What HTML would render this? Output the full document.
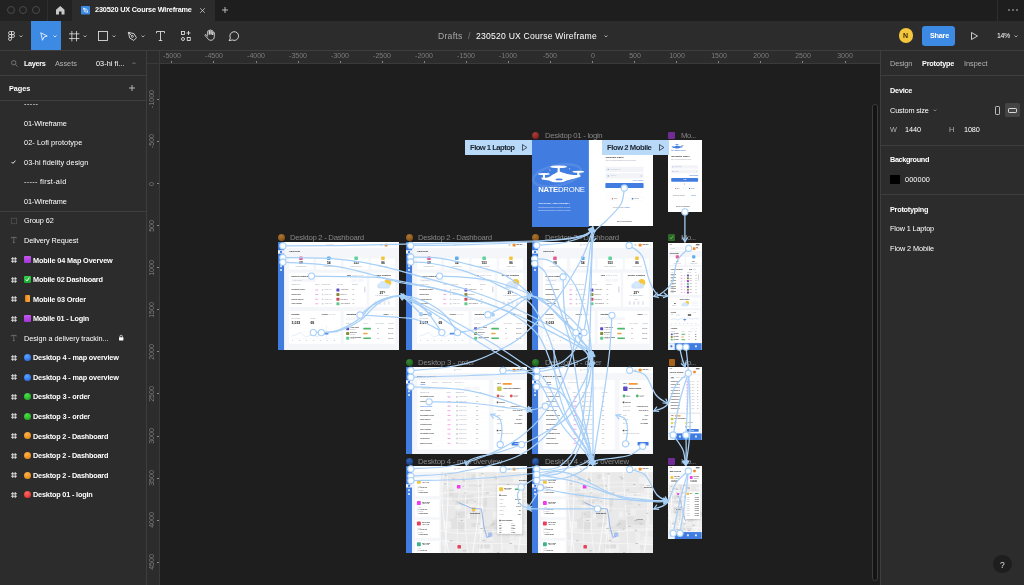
<!DOCTYPE html>
<html><head><meta charset="utf-8"><title>230520 UX Course Wireframe</title>
<style>
*{box-sizing:border-box;margin:0;padding:0}
html,body{width:1024px;height:585px;overflow:hidden;background:#1e1e1e;font-family:"Liberation Sans",sans-serif;color:#fff;font-size:7px}
.abs{position:absolute}
.t,.rl{will-change:transform}
#tabbar{position:absolute;left:0;top:0;width:1024px;height:21px;background:#1e1e1e}
#tabbar .tl{position:absolute;top:5.5px;width:8px;height:8px;border-radius:50%;border:1px solid #4a4a4a}
#tabbar .lft{position:absolute;left:0;top:0;width:72px;height:21px;background:#222}
#tabbar .sep{position:absolute;top:0;width:1px;height:21px;background:#2e2e2e}
#acttab{position:absolute;left:72px;top:0;width:142.5px;height:21px;background:#2c2c2c}
#toolbar{position:absolute;left:0;top:21px;width:1024px;height:29px;background:#2c2c2c}
#seltool{position:absolute;left:31px;top:0;width:30px;height:29px;background:#3d8ae4}
#left{position:absolute;left:0;top:50px;width:147px;height:535px;background:#2c2c2c;border-right:1px solid #3e3e3e;border-top:1px solid #3e3e3e}
#right{position:absolute;left:880px;top:50px;width:144px;height:535px;background:#2c2c2c;border-left:1px solid #3e3e3e;border-top:1px solid #3e3e3e}
#hruler{position:absolute;left:147px;top:50px;width:733px;height:14px;background:#2c2c2c;border-bottom:1px solid #3a3a3a;border-top:1px solid #3e3e3e;overflow:hidden}
#vruler{position:absolute;left:147px;top:64px;width:13px;height:521px;background:#2c2c2c;border-right:1px solid #3a3a3a;overflow:hidden}
.t{position:absolute;white-space:pre}
.hl{position:absolute;height:1px;background:#3e3e3e}
svg{position:absolute;overflow:visible}
.fi{position:absolute;left:0;top:0;right:0;bottom:0;will-change:transform}
.fr{position:absolute;transform-origin:0 0;transform:scale(0.08415);overflow:hidden;font-family:"Liberation Sans",sans-serif}
.rl{position:absolute;color:#7d7d7d;font-size:7px;line-height:8px;white-space:nowrap}
</style></head><body>

<div id="tabbar"><div class="lft"></div>
<div class="tl" style="left:7px"></div>
<div class="tl" style="left:19px"></div>
<div class="tl" style="left:31.5px"></div>
<div class="sep" style="left:47px"></div><div id="acttab"></div><div class="sep" style="left:997px"></div>
<svg style="left:55.5px;top:5.5px" width="8.5" height="8.5" viewBox="0 0 17 17"><path d="M8.5 0 L17 7.5 V17 H11 V11 H6 V17 H0 V7.5 Z" fill="#c8c8c8"/></svg>
<svg style="left:80.5px;top:5.5px" width="9" height="8.5" viewBox="0 0 18 17"><rect width="18" height="17" rx="2" fill="#3d8ae4"/><path d="M5 4.5 L11.5 6.5 L13.5 12.5 L7 11 Z M5 4.5 L10 9" fill="none" stroke="#fff" stroke-width="1.4"/></svg>
<div class="t" style="left:94.50px;top:5.52px;font-size:7.30px;line-height:8.76px;font-weight:700;letter-spacing:-0.178px;color:#fff;">230520 UX Course Wireframe</div>
<svg style="left:199.5px;top:7.5px" width="5" height="5" viewBox="0 0 10 10"><path d="M0.5 0.5 L9.5 9.5 M9.5 0.5 L0.5 9.5" stroke="#d0d0d0" stroke-width="1.6" fill="none"/></svg>
<svg style="left:221.5px;top:7px" width="6" height="6" viewBox="0 0 12 12"><path d="M6 0 V12 M0 6 H12" stroke="#d0d0d0" stroke-width="1.7" fill="none"/></svg>
<svg style="left:1007.5px;top:9px" width="10" height="2" viewBox="0 0 20 4"><circle cx="2" cy="2" r="1.6" fill="#ccc"/><circle cx="10" cy="2" r="1.6" fill="#ccc"/><circle cx="18" cy="2" r="1.6" fill="#ccc"/></svg>
</div>
<div id="toolbar"><div id="seltool"></div>
<svg style="left:8px;top:10.0px" width="7" height="10" viewBox="0 0 14 20"><g fill="none" stroke="#e6e6e6" stroke-width="1.5"><path d="M7 1 H4 a3 3 0 0 0 0 6 H7 Z"/><path d="M7 1 H10 a3 3 0 0 1 0 6 H7 Z"/><path d="M7 7 H4 a3 3 0 0 0 0 6 H7 Z"/><circle cx="10" cy="10" r="3"/><path d="M7 13 H4 a3 3 0 1 0 3 3 Z"/></g></svg>
<svg style="left:19.25px;top:14.10px" width="4.0" height="2.5" viewBox="0 0 8 5"><path d="M1 1 L4 4 L7 1" fill="none" stroke="#d0d0d0" stroke-width="1.5"/></svg>
<svg style="left:40px;top:10.5px" width="8" height="9" viewBox="0 0 16 18"><path d="M1.5 1.5 L14.5 8 L8 10 L5 16.5 Z" fill="none" stroke="#fff" stroke-width="1.6" stroke-linejoin="round"/></svg>
<svg style="left:53.00px;top:14.10px" width="4.0" height="2.5" viewBox="0 0 8 5"><path d="M1 1 L4 4 L7 1" fill="none" stroke="#fff" stroke-width="1.5"/></svg>
<svg style="left:68.9px;top:10.0px" width="10.4" height="10.4" viewBox="0 0 20 20"><path d="M5.5 0 V20 M14.5 0 V20 M0 5.5 H20 M0 14.5 H20" fill="none" stroke="#e6e6e6" stroke-width="1.5"/></svg>
<svg style="left:82.50px;top:14.10px" width="4.0" height="2.5" viewBox="0 0 8 5"><path d="M1 1 L4 4 L7 1" fill="none" stroke="#d0d0d0" stroke-width="1.5"/></svg>
<svg style="left:97.75px;top:10.0px" width="10" height="10" viewBox="0 0 20 20"><rect x="1" y="1" width="18" height="18" fill="none" stroke="#e6e6e6" stroke-width="1.7"/></svg>
<svg style="left:111.75px;top:14.10px" width="4.0" height="2.5" viewBox="0 0 8 5"><path d="M1 1 L4 4 L7 1" fill="none" stroke="#d0d0d0" stroke-width="1.5"/></svg>
<svg style="left:126.8px;top:10.0px" width="10.8" height="10.8" viewBox="0 0 20 20"><g fill="none" stroke="#e6e6e6" stroke-width="1.6" stroke-linejoin="round"><path d="M2.5 2.5 L13 5 L17.5 12.5 L12.5 17.5 L5 13 Z"/><path d="M2.5 2.5 L8.5 8.5"/><circle cx="10" cy="10" r="1.7"/></g></svg>
<svg style="left:141.00px;top:14.10px" width="4.0" height="2.5" viewBox="0 0 8 5"><path d="M1 1 L4 4 L7 1" fill="none" stroke="#d0d0d0" stroke-width="1.5"/></svg>
<svg style="left:156px;top:10.0px" width="9" height="10" viewBox="0 0 18 20"><path d="M1 4.5 V1 H17 V4.5 M9 1 V19 M5.5 19 H12.5" fill="none" stroke="#e6e6e6" stroke-width="1.7"/></svg>
<svg style="left:180.5px;top:10.0px" width="10" height="10" viewBox="0 0 20 20"><g fill="none" stroke="#e6e6e6" stroke-width="1.7"><rect x="1" y="1" width="6" height="6"/><path d="M15 0 V8 M11 4 H19"/><circle cx="4" cy="16" r="3"/><rect x="12.5" y="13" width="6" height="6"/></g></svg>
<svg style="left:203.8px;top:8.4px" width="11.6" height="12" viewBox="0 0 22 22"><path d="M7 12 V4.5 a1.6 1.6 0 0 1 3.2 0 V10 V2.8 a1.6 1.6 0 0 1 3.2 0 V10 V4 a1.6 1.6 0 0 1 3.2 0 V11 V7 a1.5 1.5 0 0 1 3 0 V14 c0 4 -2.5 7 -6.5 7 c-3.5 0 -5 -1.5 -7 -4.5 L2 12 c-0.8 -1.6 1.2 -2.8 2.3 -1.4 L7 14" fill="none" stroke="#e6e6e6" stroke-width="1.6" stroke-linejoin="round"/></svg>
<svg style="left:227.8px;top:10.0px" width="11.6" height="10.5" viewBox="0 0 22 20"><path d="M2 18.5 L4.5 13.5 A8.3 8.3 0 1 1 8 17 Z" fill="none" stroke="#e6e6e6" stroke-width="1.7" stroke-linejoin="round"/></svg>
<div class="t" style="left:438.00px;top:10.04px;font-size:8.60px;line-height:10.32px;letter-spacing:0.261px;color:#a8a8a8;">Drafts</div>
<div class="t" style="left:467.50px;top:10.04px;font-size:8.60px;line-height:10.32px;color:#777;">/</div>
<div class="t" style="left:475.75px;top:10.04px;font-size:8.60px;line-height:10.32px;letter-spacing:0.223px;color:#fff;">230520 UX Course Wireframe</div>
<svg style="left:603.50px;top:14.40px" width="4.0" height="2.5" viewBox="0 0 8 5"><path d="M1 1 L4 4 L7 1" fill="none" stroke="#d0d0d0" stroke-width="1.5"/></svg>
<div class="abs" style="left:898.6px;top:7.4px;width:14.8px;height:14.8px;border-radius:50%;background:#f4c63d"></div>
<div class="t" style="left:903.40px;top:10.90px;font-size:7.00px;line-height:8.40px;font-weight:700;color:#3a2e05;">N</div>
<div class="abs" style="left:922.2px;top:5px;width:33.3px;height:19.7px;border-radius:3.2px;background:#3d8ae4"></div>
<div class="t" style="left:929.50px;top:10.62px;font-size:7.30px;line-height:8.76px;font-weight:700;letter-spacing:-0.258px;color:#fff;">Share</div>
<svg style="left:970.5px;top:11.0px" width="7" height="8" viewBox="0 0 14 16"><path d="M1 1 L13 8 L1 15 Z" fill="none" stroke="#e6e6e6" stroke-width="1.7" stroke-linejoin="round"/></svg>
<div class="t" style="left:997.40px;top:11.06px;font-size:6.90px;line-height:8.28px;letter-spacing:-0.337px;color:#fff;">14%</div>
<svg style="left:1013.50px;top:14.30px" width="4.0" height="2.5" viewBox="0 0 8 5"><path d="M1 1 L4 4 L7 1" fill="none" stroke="#d0d0d0" stroke-width="1.5"/></svg>
</div>
<div id="left">
<svg style="left:11px;top:8.5px" width="7" height="7" viewBox="0 0 14 14"><circle cx="5.5" cy="5.5" r="4.3" fill="none" stroke="#8a8a8a" stroke-width="1.5"/><path d="M8.8 8.8 L13 13" stroke="#8a8a8a" stroke-width="1.5"/></svg>
<div class="t" style="left:23.80px;top:8.62px;font-size:7.30px;line-height:8.76px;font-weight:700;letter-spacing:-0.340px;color:#fff;">Layers</div>
<div class="t" style="left:55.00px;top:8.62px;font-size:7.30px;line-height:8.76px;letter-spacing:-0.018px;color:#b3b3b3;">Assets</div>
<div class="t" style="left:96.30px;top:8.62px;font-size:7.30px;line-height:8.76px;letter-spacing:0.046px;color:#fff;">03-hi fi...</div>
<svg style="left:132px;top:10.5px" width="4" height="2.5" viewBox="0 0 8 5"><path d="M1 4 L4 1 L7 4" fill="none" stroke="#9a9a9a" stroke-width="1.4"/></svg>
<div class="hl" style="left:0;top:24.0px;width:146px"></div>
<div class="t" style="left:9.20px;top:33.62px;font-size:7.30px;line-height:8.76px;font-weight:700;letter-spacing:-0.042px;color:#fff;">Pages</div>
<svg style="left:128.5px;top:34.0px" width="6" height="6" viewBox="0 0 12 12"><path d="M6 0 V12 M0 6 H12" stroke="#e0e0e0" stroke-width="1.5" fill="none"/></svg>
<div class="hl" style="left:0;top:49.0px;width:146px"></div>
<div class="abs" style="left:0;top:49.5px;width:146px;height:110px;overflow:hidden">
<div class="t" style="left:23.80px;top:-0.68px;font-size:7.30px;line-height:8.76px;letter-spacing:0.469px;color:#fff;">-----</div>
<div class="t" style="left:23.80px;top:19.12px;font-size:7.30px;line-height:8.76px;letter-spacing:-0.126px;color:#fff;">01-Wireframe</div>
<div class="t" style="left:23.80px;top:38.72px;font-size:7.30px;line-height:8.76px;letter-spacing:0.082px;color:#fff;">02- Lofi prototype</div>
<div class="t" style="left:23.80px;top:58.22px;font-size:7.30px;line-height:8.76px;letter-spacing:0.091px;color:#fff;">03-hi fidelity design</div>
<svg style="left:10.5px;top:59.6px" width="5" height="4" viewBox="0 0 10 8"><path d="M1 4 L3.8 6.8 L9 1.2" fill="none" stroke="#fff" stroke-width="1.8"/></svg>
<div class="t" style="left:23.80px;top:77.72px;font-size:7.30px;line-height:8.76px;letter-spacing:0.292px;color:#fff;">----- first-aid</div>
<div class="t" style="left:23.80px;top:97.32px;font-size:7.30px;line-height:8.76px;letter-spacing:-0.126px;color:#fff;">01-Wireframe</div>
</div>
<div class="hl" style="left:0;top:160.0px;width:146px"></div>
<svg style="left:11px;top:166.8px" width="6" height="6" viewBox="0 0 12 12"><rect x="0.7" y="0.7" width="10.6" height="10.6" fill="none" stroke="#8c8c8c" stroke-width="1.3" stroke-dasharray="2 2.2"/></svg>
<div class="t" style="left:23.80px;top:166.42px;font-size:7.30px;line-height:8.76px;letter-spacing:-0.105px;color:#fff;">Group 62</div>
<svg style="left:11.2px;top:186.4px" width="5.6" height="6" viewBox="0 0 11 12"><path d="M0.7 3 V0.7 H10.3 V3 M5.5 0.7 V11.3 M3.5 11.3 H7.5" fill="none" stroke="#8c8c8c" stroke-width="1.2"/></svg>
<div class="t" style="left:23.80px;top:185.98px;font-size:7.30px;line-height:8.76px;letter-spacing:-0.087px;color:#fff;">Delivery Request</div>
<svg style="left:11px;top:205.9px" width="6" height="6" viewBox="0 0 12 12"><path d="M3.5 0 V12 M8.5 0 V12 M0 3.5 H12 M0 8.5 H12" fill="none" stroke="#fff" stroke-width="1.5"/></svg>
<div class="abs" style="left:23.8px;top:205.3px;width:7px;height:7px;border-radius:1px;background:linear-gradient(#c35af0,#a531d8)"></div>
<div class="t" style="left:32.80px;top:205.54px;font-size:7.30px;line-height:8.76px;font-weight:700;letter-spacing:-0.127px;color:#fff;">Mobile 04 Map Overvew</div>
<svg style="left:11px;top:225.5px" width="6" height="6" viewBox="0 0 12 12"><path d="M3.5 0 V12 M8.5 0 V12 M0 3.5 H12 M0 8.5 H12" fill="none" stroke="#fff" stroke-width="1.5"/></svg>
<div class="abs" style="left:23.8px;top:224.9px;width:7px;height:7px;border-radius:1px;background:linear-gradient(#37d04a,#17a82c)"></div><svg style="left:24.8px;top:225.9px" width="5" height="5" viewBox="0 0 10 10"><path d="M1.5 5 L4 7.8 L8.5 1.5" fill="none" stroke="#fff" stroke-width="2"/></svg>
<div class="t" style="left:32.80px;top:225.10px;font-size:7.30px;line-height:8.76px;font-weight:700;letter-spacing:-0.191px;color:#fff;">Mobile 02 Dashboard</div>
<svg style="left:11px;top:245.0px" width="6" height="6" viewBox="0 0 12 12"><path d="M3.5 0 V12 M8.5 0 V12 M0 3.5 H12 M0 8.5 H12" fill="none" stroke="#fff" stroke-width="1.5"/></svg>
<div class="abs" style="left:24.6px;top:244.4px;width:5.4px;height:7px;border-radius:0.8px;background:linear-gradient(90deg,#d97a10,#f59a2c 40%,#f7a63c)"></div>
<div class="t" style="left:32.80px;top:244.66px;font-size:7.30px;line-height:8.76px;font-weight:700;letter-spacing:-0.145px;color:#fff;">Mobile 03 Order</div>
<svg style="left:11px;top:264.6px" width="6" height="6" viewBox="0 0 12 12"><path d="M3.5 0 V12 M8.5 0 V12 M0 3.5 H12 M0 8.5 H12" fill="none" stroke="#fff" stroke-width="1.5"/></svg>
<div class="abs" style="left:23.8px;top:264.0px;width:7px;height:7px;border-radius:1px;background:linear-gradient(#c35af0,#a531d8)"></div>
<div class="t" style="left:32.80px;top:264.22px;font-size:7.30px;line-height:8.76px;font-weight:700;letter-spacing:-0.207px;color:#fff;">Mobile 01 - Login</div>
<svg style="left:11.2px;top:284.2px" width="5.6" height="6" viewBox="0 0 11 12"><path d="M0.7 3 V0.7 H10.3 V3 M5.5 0.7 V11.3 M3.5 11.3 H7.5" fill="none" stroke="#8c8c8c" stroke-width="1.2"/></svg>
<div class="t" style="left:23.80px;top:283.78px;font-size:7.30px;line-height:8.76px;letter-spacing:-0.036px;color:#fff;">Design a delivery trackin...</div>
<svg style="left:119.3px;top:284.2px" width="4.4" height="5.4" viewBox="0 0 9 11"><rect x="0" y="4.5" width="9" height="6.5" rx="0.8" fill="#fff"/><path d="M2 5 V3 a2.5 2.5 0 0 1 5 0 V5" fill="none" stroke="#fff" stroke-width="1.4"/></svg>
<svg style="left:11px;top:303.7px" width="6" height="6" viewBox="0 0 12 12"><path d="M3.5 0 V12 M8.5 0 V12 M0 3.5 H12 M0 8.5 H12" fill="none" stroke="#fff" stroke-width="1.5"/></svg>
<div class="abs" style="left:23.8px;top:303.1px;width:7px;height:7px;border-radius:50%;background:radial-gradient(circle at 40% 30%,#5aa5ff,#1a5fe0)"></div>
<div class="t" style="left:32.80px;top:303.34px;font-size:7.30px;line-height:8.76px;font-weight:700;letter-spacing:-0.161px;color:#fff;">Desktop 4 - map overview</div>
<svg style="left:11px;top:323.3px" width="6" height="6" viewBox="0 0 12 12"><path d="M3.5 0 V12 M8.5 0 V12 M0 3.5 H12 M0 8.5 H12" fill="none" stroke="#fff" stroke-width="1.5"/></svg>
<div class="abs" style="left:23.8px;top:322.7px;width:7px;height:7px;border-radius:50%;background:radial-gradient(circle at 40% 30%,#5aa5ff,#1a5fe0)"></div>
<div class="t" style="left:32.80px;top:322.90px;font-size:7.30px;line-height:8.76px;font-weight:700;letter-spacing:-0.161px;color:#fff;">Desktop 4 - map overview</div>
<svg style="left:11px;top:342.8px" width="6" height="6" viewBox="0 0 12 12"><path d="M3.5 0 V12 M8.5 0 V12 M0 3.5 H12 M0 8.5 H12" fill="none" stroke="#fff" stroke-width="1.5"/></svg>
<div class="abs" style="left:23.8px;top:342.2px;width:7px;height:7px;border-radius:50%;background:radial-gradient(circle at 40% 30%,#4fe04a,#129c18)"></div>
<div class="t" style="left:32.80px;top:342.46px;font-size:7.30px;line-height:8.76px;font-weight:700;letter-spacing:-0.179px;color:#fff;">Desktop 3 - order</div>
<svg style="left:11px;top:362.4px" width="6" height="6" viewBox="0 0 12 12"><path d="M3.5 0 V12 M8.5 0 V12 M0 3.5 H12 M0 8.5 H12" fill="none" stroke="#fff" stroke-width="1.5"/></svg>
<div class="abs" style="left:23.8px;top:361.8px;width:7px;height:7px;border-radius:50%;background:radial-gradient(circle at 40% 30%,#4fe04a,#129c18)"></div>
<div class="t" style="left:32.80px;top:362.02px;font-size:7.30px;line-height:8.76px;font-weight:700;letter-spacing:-0.179px;color:#fff;">Desktop 3 - order</div>
<svg style="left:11px;top:382.0px" width="6" height="6" viewBox="0 0 12 12"><path d="M3.5 0 V12 M8.5 0 V12 M0 3.5 H12 M0 8.5 H12" fill="none" stroke="#fff" stroke-width="1.5"/></svg>
<div class="abs" style="left:23.8px;top:381.4px;width:7px;height:7px;border-radius:50%;background:radial-gradient(circle at 40% 30%,#ffb347,#e07a0a)"></div>
<div class="t" style="left:32.80px;top:381.58px;font-size:7.30px;line-height:8.76px;font-weight:700;letter-spacing:-0.200px;color:#fff;">Desktop 2 - Dashboard</div>
<svg style="left:11px;top:401.5px" width="6" height="6" viewBox="0 0 12 12"><path d="M3.5 0 V12 M8.5 0 V12 M0 3.5 H12 M0 8.5 H12" fill="none" stroke="#fff" stroke-width="1.5"/></svg>
<div class="abs" style="left:23.8px;top:400.9px;width:7px;height:7px;border-radius:50%;background:radial-gradient(circle at 40% 30%,#ffb347,#e07a0a)"></div>
<div class="t" style="left:32.80px;top:401.14px;font-size:7.30px;line-height:8.76px;font-weight:700;letter-spacing:-0.200px;color:#fff;">Desktop 2 - Dashboard</div>
<svg style="left:11px;top:421.1px" width="6" height="6" viewBox="0 0 12 12"><path d="M3.5 0 V12 M8.5 0 V12 M0 3.5 H12 M0 8.5 H12" fill="none" stroke="#fff" stroke-width="1.5"/></svg>
<div class="abs" style="left:23.8px;top:420.5px;width:7px;height:7px;border-radius:50%;background:radial-gradient(circle at 40% 30%,#ffb347,#e07a0a)"></div>
<div class="t" style="left:32.80px;top:420.70px;font-size:7.30px;line-height:8.76px;font-weight:700;letter-spacing:-0.200px;color:#fff;">Desktop 2 - Dashboard</div>
<svg style="left:11px;top:440.6px" width="6" height="6" viewBox="0 0 12 12"><path d="M3.5 0 V12 M8.5 0 V12 M0 3.5 H12 M0 8.5 H12" fill="none" stroke="#fff" stroke-width="1.5"/></svg>
<div class="abs" style="left:23.8px;top:440.0px;width:7px;height:7px;border-radius:50%;background:radial-gradient(circle at 40% 30%,#ff6a5e,#d81f26)"></div>
<div class="t" style="left:32.80px;top:440.26px;font-size:7.30px;line-height:8.76px;font-weight:700;letter-spacing:-0.182px;color:#fff;">Desktop 01 - login</div>
</div>
<div id="right">
<div class="t" style="left:9.00px;top:8.62px;font-size:7.30px;line-height:8.76px;letter-spacing:-0.071px;color:#b3b3b3;">Design</div>
<div class="t" style="left:41.00px;top:8.62px;font-size:7.30px;line-height:8.76px;font-weight:700;letter-spacing:-0.208px;color:#fff;">Prototype</div>
<div class="t" style="left:82.60px;top:8.62px;font-size:7.30px;line-height:8.76px;letter-spacing:0.009px;color:#b3b3b3;">Inspect</div>
<div class="hl" style="left:0;top:24.0px;width:144px"></div>
<div class="t" style="left:9.00px;top:36.42px;font-size:7.30px;line-height:8.76px;font-weight:700;letter-spacing:-0.223px;color:#fff;">Device</div>
<div class="t" style="left:9.00px;top:55.92px;font-size:7.30px;line-height:8.76px;letter-spacing:-0.124px;color:#fff;">Custom size</div>
<svg style="left:51.70px;top:58.30px" width="4.0" height="2.5" viewBox="0 0 8 5"><path d="M1 1 L4 4 L7 1" fill="none" stroke="#9a9a9a" stroke-width="1.5"/></svg>
<svg style="left:113.8px;top:54.7px" width="5" height="9" viewBox="0 0 10 18"><rect x="1" y="1" width="8" height="16" rx="1.5" fill="none" stroke="#e0e0e0" stroke-width="1.6"/></svg>
<div class="abs" style="left:124.0px;top:51.7px;width:15px;height:14.8px;border-radius:1.5px;background:#444"></div>
<svg style="left:127.0px;top:56.7px" width="9" height="5" viewBox="0 0 18 10"><rect x="1" y="1" width="16" height="8" rx="1.5" fill="none" stroke="#fff" stroke-width="1.6"/></svg>
<div class="t" style="left:9.00px;top:75.42px;font-size:7.30px;line-height:8.76px;color:#b3b3b3;">W</div>
<div class="t" style="left:24.20px;top:75.42px;font-size:7.30px;line-height:8.76px;letter-spacing:-0.060px;color:#fff;">1440</div>
<div class="t" style="left:68.30px;top:75.42px;font-size:7.30px;line-height:8.76px;color:#b3b3b3;">H</div>
<div class="t" style="left:83.30px;top:75.42px;font-size:7.30px;line-height:8.76px;letter-spacing:-0.135px;color:#fff;">1080</div>
<div class="hl" style="left:0;top:93.6px;width:144px"></div>
<div class="t" style="left:9.00px;top:105.12px;font-size:7.30px;line-height:8.76px;font-weight:700;letter-spacing:-0.359px;color:#fff;">Background</div>
<div class="abs" style="left:9.0px;top:123.5px;width:9.8px;height:9.4px;background:#000"></div>
<div class="t" style="left:23.80px;top:124.82px;font-size:7.30px;line-height:8.76px;letter-spacing:0.107px;color:#fff;">000000</div>
<div class="hl" style="left:0;top:142.8px;width:144px"></div>
<div class="t" style="left:9.00px;top:154.92px;font-size:7.30px;line-height:8.76px;font-weight:700;letter-spacing:-0.251px;color:#fff;">Prototyping</div>
<div class="t" style="left:9.00px;top:174.42px;font-size:7.30px;line-height:8.76px;letter-spacing:-0.143px;color:#fff;">Flow 1 Laptop</div>
<div class="t" style="left:9.00px;top:193.92px;font-size:7.30px;line-height:8.76px;letter-spacing:-0.080px;color:#fff;">Flow 2 Mobile</div>
<div class="abs" style="left:112.0px;top:503.5px;width:18.8px;height:18.8px;border-radius:50%;background:#1e1e1e"></div>
<div class="t" style="left:119.00px;top:508.90px;font-size:8.50px;line-height:10.20px;color:#e0e0e0;">?</div>
</div>
<div id="hruler">
<div class="rl" style="left:24.75px;top:1.2px;width:40px;margin-left:-20px;text-align:center">-5000</div>
<div class="abs" style="left:24.35px;top:9.5px;width:1px;height:2.5px;background:#858585"></div>
<div class="rl" style="left:66.82px;top:1.2px;width:40px;margin-left:-20px;text-align:center">-4500</div>
<div class="abs" style="left:66.42px;top:9.5px;width:1px;height:2.5px;background:#858585"></div>
<div class="rl" style="left:108.90px;top:1.2px;width:40px;margin-left:-20px;text-align:center">-4000</div>
<div class="abs" style="left:108.50px;top:9.5px;width:1px;height:2.5px;background:#858585"></div>
<div class="rl" style="left:150.97px;top:1.2px;width:40px;margin-left:-20px;text-align:center">-3500</div>
<div class="abs" style="left:150.57px;top:9.5px;width:1px;height:2.5px;background:#858585"></div>
<div class="rl" style="left:193.05px;top:1.2px;width:40px;margin-left:-20px;text-align:center">-3000</div>
<div class="abs" style="left:192.65px;top:9.5px;width:1px;height:2.5px;background:#858585"></div>
<div class="rl" style="left:235.12px;top:1.2px;width:40px;margin-left:-20px;text-align:center">-2500</div>
<div class="abs" style="left:234.72px;top:9.5px;width:1px;height:2.5px;background:#858585"></div>
<div class="rl" style="left:277.20px;top:1.2px;width:40px;margin-left:-20px;text-align:center">-2000</div>
<div class="abs" style="left:276.80px;top:9.5px;width:1px;height:2.5px;background:#858585"></div>
<div class="rl" style="left:319.27px;top:1.2px;width:40px;margin-left:-20px;text-align:center">-1500</div>
<div class="abs" style="left:318.88px;top:9.5px;width:1px;height:2.5px;background:#858585"></div>
<div class="rl" style="left:361.35px;top:1.2px;width:40px;margin-left:-20px;text-align:center">-1000</div>
<div class="abs" style="left:360.95px;top:9.5px;width:1px;height:2.5px;background:#858585"></div>
<div class="rl" style="left:403.42px;top:1.2px;width:40px;margin-left:-20px;text-align:center">-500</div>
<div class="abs" style="left:403.02px;top:9.5px;width:1px;height:2.5px;background:#858585"></div>
<div class="rl" style="left:445.50px;top:1.2px;width:40px;margin-left:-20px;text-align:center">0</div>
<div class="abs" style="left:445.10px;top:9.5px;width:1px;height:2.5px;background:#858585"></div>
<div class="rl" style="left:487.58px;top:1.2px;width:40px;margin-left:-20px;text-align:center">500</div>
<div class="abs" style="left:487.18px;top:9.5px;width:1px;height:2.5px;background:#858585"></div>
<div class="rl" style="left:529.65px;top:1.2px;width:40px;margin-left:-20px;text-align:center">1000</div>
<div class="abs" style="left:529.25px;top:9.5px;width:1px;height:2.5px;background:#858585"></div>
<div class="rl" style="left:571.73px;top:1.2px;width:40px;margin-left:-20px;text-align:center">1500</div>
<div class="abs" style="left:571.33px;top:9.5px;width:1px;height:2.5px;background:#858585"></div>
<div class="rl" style="left:613.80px;top:1.2px;width:40px;margin-left:-20px;text-align:center">2000</div>
<div class="abs" style="left:613.40px;top:9.5px;width:1px;height:2.5px;background:#858585"></div>
<div class="rl" style="left:655.88px;top:1.2px;width:40px;margin-left:-20px;text-align:center">2500</div>
<div class="abs" style="left:655.48px;top:9.5px;width:1px;height:2.5px;background:#858585"></div>
<div class="rl" style="left:697.95px;top:1.2px;width:40px;margin-left:-20px;text-align:center">3000</div>
<div class="abs" style="left:697.55px;top:9.5px;width:1px;height:2.5px;background:#858585"></div>
</div>
<div id="vruler">
<div class="rl" style="left:5.4px;top:35.35px;width:40px;height:8px;margin-left:-20px;margin-top:-4px;text-align:center;transform:rotate(-90deg)">-1000</div>
<div class="abs" style="left:9.5px;top:34.95px;width:2.5px;height:1px;background:#858585"></div>
<div class="rl" style="left:5.4px;top:77.43px;width:40px;height:8px;margin-left:-20px;margin-top:-4px;text-align:center;transform:rotate(-90deg)">-500</div>
<div class="abs" style="left:9.5px;top:77.03px;width:2.5px;height:1px;background:#858585"></div>
<div class="rl" style="left:5.4px;top:119.50px;width:40px;height:8px;margin-left:-20px;margin-top:-4px;text-align:center;transform:rotate(-90deg)">0</div>
<div class="abs" style="left:9.5px;top:119.10px;width:2.5px;height:1px;background:#858585"></div>
<div class="rl" style="left:5.4px;top:161.57px;width:40px;height:8px;margin-left:-20px;margin-top:-4px;text-align:center;transform:rotate(-90deg)">500</div>
<div class="abs" style="left:9.5px;top:161.17px;width:2.5px;height:1px;background:#858585"></div>
<div class="rl" style="left:5.4px;top:203.65px;width:40px;height:8px;margin-left:-20px;margin-top:-4px;text-align:center;transform:rotate(-90deg)">1000</div>
<div class="abs" style="left:9.5px;top:203.25px;width:2.5px;height:1px;background:#858585"></div>
<div class="rl" style="left:5.4px;top:245.73px;width:40px;height:8px;margin-left:-20px;margin-top:-4px;text-align:center;transform:rotate(-90deg)">1500</div>
<div class="abs" style="left:9.5px;top:245.33px;width:2.5px;height:1px;background:#858585"></div>
<div class="rl" style="left:5.4px;top:287.80px;width:40px;height:8px;margin-left:-20px;margin-top:-4px;text-align:center;transform:rotate(-90deg)">2000</div>
<div class="abs" style="left:9.5px;top:287.40px;width:2.5px;height:1px;background:#858585"></div>
<div class="rl" style="left:5.4px;top:329.88px;width:40px;height:8px;margin-left:-20px;margin-top:-4px;text-align:center;transform:rotate(-90deg)">2500</div>
<div class="abs" style="left:9.5px;top:329.48px;width:2.5px;height:1px;background:#858585"></div>
<div class="rl" style="left:5.4px;top:371.95px;width:40px;height:8px;margin-left:-20px;margin-top:-4px;text-align:center;transform:rotate(-90deg)">3000</div>
<div class="abs" style="left:9.5px;top:371.55px;width:2.5px;height:1px;background:#858585"></div>
<div class="rl" style="left:5.4px;top:414.03px;width:40px;height:8px;margin-left:-20px;margin-top:-4px;text-align:center;transform:rotate(-90deg)">3500</div>
<div class="abs" style="left:9.5px;top:413.63px;width:2.5px;height:1px;background:#858585"></div>
<div class="rl" style="left:5.4px;top:456.10px;width:40px;height:8px;margin-left:-20px;margin-top:-4px;text-align:center;transform:rotate(-90deg)">4000</div>
<div class="abs" style="left:9.5px;top:455.70px;width:2.5px;height:1px;background:#858585"></div>
<div class="rl" style="left:5.4px;top:498.17px;width:40px;height:8px;margin-left:-20px;margin-top:-4px;text-align:center;transform:rotate(-90deg)">4500</div>
<div class="abs" style="left:9.5px;top:497.77px;width:2.5px;height:1px;background:#858585"></div>
</div>
<div class="abs" style="left:147px;top:51px;width:13px;height:13px;background:#2c2c2c;border-right:1px solid #3a3a3a;border-bottom:1px solid #3a3a3a"></div>
<div class="abs" style="left:871.9px;top:103.8px;width:5.8px;height:477.6px;border-radius:2.9px;background:#141414;border:0.8px solid #3c3c3c"></div>
<div id="canvas" class="abs" style="left:160px;top:64px;width:720px;height:521px;overflow:hidden">
<div class="fr" style="left:372.10px;top:76.00px;width:1437px;height:1024px"><div style="position:absolute;left:0px;top:0px;width:1437px;height:1024px;background:#fff;"></div><div class="fi"><div style="position:absolute;left:0px;top:0px;width:676px;height:1054px;background:#417de1;"></div><svg style="position:absolute;left:0;top:0" width="676" height="1024"><ellipse cx="300" cy="420" rx="290" ry="120" fill="none" stroke="rgba(255,255,255,.10)" stroke-width="30" transform="rotate(-12 300 420)"/></svg><svg style="position:absolute;left:72px;top:296px" width="550" height="215" viewBox="0 0 550 215"><g fill="#fff">
<ellipse cx="245" cy="22" rx="100" ry="15"/><rect x="232" y="30" width="26" height="60" rx="8"/>
<ellipse cx="70" cy="108" rx="70" ry="13"/><rect x="58" y="112" width="24" height="50" rx="8"/>
<ellipse cx="478" cy="82" rx="70" ry="13"/><rect x="466" y="88" width="24" height="50" rx="8"/>
<path d="M40 150 C120 170 190 110 245 75 C300 95 400 130 500 118 L505 140 C420 165 380 175 340 185 C300 215 170 215 130 185 L45 172 Z"/>
<ellipse cx="250" cy="150" rx="105" ry="52"/>
<circle cx="140" cy="60" r="6"/><circle cx="375" cy="45" r="6"/><circle cx="330" cy="20" r="4"/><circle cx="120" cy="90" r="4"/>
</g><ellipse cx="250" cy="172" rx="42" ry="10" fill="#417de1"/></svg><div style="position:absolute;left:74px;top:538px;font-size:92px;line-height:100px;color:#fff;white-space:pre;letter-spacing:-2.5px"><b>NATE</b>DRONE</div><div style="position:absolute;white-space:pre;left:76px;top:734px;font-size:30px;line-height:36px;color:#fff;font-weight:700;">Our Drone, Your Package!</div><div style="position:absolute;white-space:pre;left:76px;top:791.6px;font-size:19px;line-height:22.8px;color:rgba(255,255,255,.8);">Fast and secure delivery service to your door.</div><div style="position:absolute;white-space:pre;left:76px;top:827.6px;font-size:19px;line-height:22.8px;color:rgba(255,255,255,.8);">Fast and secure delivery service to your door.</div><div style="position:absolute;white-space:pre;left:872px;top:189px;font-size:30px;line-height:36px;color:#222;font-weight:700;">Welcome back!</div><div style="position:absolute;white-space:pre;left:872px;top:237px;font-size:15px;line-height:18px;color:#9aa0ab;">Enter your email and password to access your account</div><div style="position:absolute;left:872px;top:318px;width:454px;height:62px;background:#f2f4f8;border-radius:8px;"></div><div style="position:absolute;left:896px;top:341px;width:16px;height:16px;background:#417de1;border-radius:8px;"></div><div style="position:absolute;white-space:pre;left:930px;top:339.4px;font-size:16px;line-height:19.2px;color:#b5bac4;">name@mail.com</div><div style="position:absolute;left:872px;top:396px;width:454px;height:62px;background:#f2f4f8;border-radius:8px;"></div><div style="position:absolute;left:896px;top:419px;width:16px;height:16px;background:#417de1;border-radius:8px;"></div><div style="position:absolute;white-space:pre;left:930px;top:417.4px;font-size:16px;line-height:19.2px;color:#b5bac4;">Password</div><div style="position:absolute;left:1290px;top:419px;width:16px;height:16px;background:#b5bac4;border-radius:8px;"></div><div style="position:absolute;white-space:pre;left:1326px;top:478px;font-size:15px;line-height:18px;color:#417de1;font-weight:700;transform:translateX(-100%)">Forgot Password?</div><div style="position:absolute;left:872px;top:511px;width:454px;height:60px;background:#417de1;border-radius:8px;"></div><div style="position:absolute;white-space:pre;left:1075px;top:530.2px;font-size:18px;line-height:21.6px;color:#fff;font-weight:700;">Login</div><div style="position:absolute;left:872px;top:626px;width:454px;height:2px;background:#eceef2;"></div><div style="position:absolute;left:877px;top:671px;width:203px;height:52px;background:#fff;border-radius:26px;border:2px solid #e3e6ec"></div><div style="position:absolute;left:1123px;top:671px;width:203px;height:52px;background:#fff;border-radius:26px;border:2px solid #e3e6ec"></div><div style="position:absolute;left:945px;top:688px;width:18px;height:18px;background:#e8534a;border-radius:9px;"></div><div style="position:absolute;white-space:pre;left:970px;top:688.6px;font-size:14px;line-height:16.8px;color:#666;">Google</div><div style="position:absolute;left:1185px;top:688px;width:18px;height:18px;background:#3b7be0;border-radius:4px;"></div><div style="position:absolute;white-space:pre;left:1210px;top:688.6px;font-size:14px;line-height:16.8px;color:#666;">Facebook</div><div style="position:absolute;white-space:pre;left:960px;top:791.6px;font-size:14px;line-height:16.8px;color:#777;">Don&#x27;t have an account?</div><div style="position:absolute;white-space:pre;left:1110px;top:791.6px;font-size:14px;line-height:16.8px;color:#417de1;font-weight:700;">Sign up</div><div style="position:absolute;white-space:pre;left:1010px;top:960.2px;font-size:13px;line-height:15.6px;color:#555;font-weight:700;">2023 ALL RIGHT RESERVED</div></div></div>
<div class="fr" style="left:508.40px;top:76.00px;width:400px;height:854px"><div style="position:absolute;left:0px;top:0px;width:400px;height:854px;background:#fff;"></div><div class="fi"><svg style="position:absolute;left:40px;top:45px" width="150" height="60" viewBox="0 0 550 215"><g fill="#417de1">
<ellipse cx="245" cy="22" rx="100" ry="17"/><rect x="230" y="30" width="30" height="60" rx="8"/>
<ellipse cx="70" cy="108" rx="70" ry="15"/><ellipse cx="478" cy="82" rx="70" ry="15"/>
<ellipse cx="250" cy="150" rx="115" ry="55"/><path d="M40 150 L245 95 L500 118 L505 140 L340 185 L130 185 L45 172 Z"/></g></svg><div style="position:absolute;left:40px;top:105px;font-size:28px;line-height:30px;color:#417de1;white-space:pre;letter-spacing:-.5px"><b>NATE</b>DRONE</div><div style="position:absolute;white-space:pre;left:38px;top:177px;font-size:30px;line-height:36px;color:#222;font-weight:700;">Welcome back!</div><div style="position:absolute;white-space:pre;left:38px;top:222.2px;font-size:13px;line-height:15.6px;color:#9aa0ab;">Enter your email and password to access</div><div style="position:absolute;left:38px;top:300px;width:320px;height:40px;background:#f2f4f8;border-radius:6px;"></div><div style="position:absolute;left:52px;top:314px;width:11px;height:11px;background:#417de1;border-radius:6px;"></div><div style="position:absolute;white-space:pre;left:75px;top:312.8px;font-size:12px;line-height:14.4px;color:#b5bac4;">name@mail.com</div><div style="position:absolute;left:38px;top:355px;width:320px;height:40px;background:#f2f4f8;border-radius:6px;"></div><div style="position:absolute;left:52px;top:369px;width:11px;height:11px;background:#417de1;border-radius:6px;"></div><div style="position:absolute;white-space:pre;left:75px;top:367.8px;font-size:12px;line-height:14.4px;color:#b5bac4;">Password</div><div style="position:absolute;left:335px;top:370px;width:10px;height:10px;background:#b5bac4;border-radius:5px;"></div><div style="position:absolute;white-space:pre;left:358px;top:410.8px;font-size:12px;line-height:14.4px;color:#417de1;font-weight:700;transform:translateX(-100%)">Forgot Password?</div><div style="position:absolute;left:38px;top:452px;width:320px;height:44px;background:#417de1;border-radius:8px;"></div><div style="position:absolute;white-space:pre;left:182px;top:465.6px;font-size:14px;line-height:16.8px;color:#fff;font-weight:700;">Login</div><div style="position:absolute;left:192px;top:518px;width:10px;height:10px;background:#555;border-radius:5px;"></div><div style="position:absolute;left:38px;top:556px;width:153px;height:38px;background:#fff;border-radius:19px;border:2px solid #e3e6ec"></div><div style="position:absolute;left:205px;top:556px;width:153px;height:38px;background:#fff;border-radius:19px;border:2px solid #e3e6ec"></div><div style="position:absolute;left:85px;top:569px;width:12px;height:12px;background:#e8534a;border-radius:6px;"></div><div style="position:absolute;white-space:pre;left:102px;top:568.4px;font-size:11px;line-height:13.2px;color:#666;">Google</div><div style="position:absolute;left:250px;top:569px;width:12px;height:12px;background:#3b7be0;border-radius:3px;"></div><div style="position:absolute;white-space:pre;left:267px;top:568.4px;font-size:11px;line-height:13.2px;color:#666;">Facebook</div><div style="position:absolute;white-space:pre;left:60px;top:652.2px;font-size:13px;line-height:15.6px;color:#666;">Don&#x27;t have an account?</div><div style="position:absolute;white-space:pre;left:280px;top:652.2px;font-size:13px;line-height:15.6px;color:#417de1;font-weight:700;">Sign up</div><div style="position:absolute;white-space:pre;left:95px;top:782.8px;font-size:12px;line-height:14.4px;color:#555;font-weight:700;">2023 ALL RIGHT RESERVED</div></div></div>
<div class="fr" style="left:117.70px;top:178.30px;width:1437px;height:1272px"><div style="position:absolute;left:0px;top:0px;width:1437px;height:1272px;background:#fff;"></div><div class="fi"><div style="position:absolute;left:0px;top:0px;width:1440px;height:1302px;background:#f5f6fa;"></div><div style="position:absolute;left:0px;top:0px;width:72px;height:1302px;background:#417de1;"></div><div style="position:absolute;left:20px;top:18px;width:32px;height:32px;background:#fff;border-radius:6px;opacity:.9"></div><div style="position:absolute;left:0px;top:98px;width:72px;height:40px;background:rgba(255,255,255,.92);"></div><div style="position:absolute;left:24px;top:106px;width:24px;height:24px;background:#417de1;border-radius:4px;"></div><div style="position:absolute;left:24px;top:166px;width:24px;height:24px;background:rgba(255,255,255,.75);border-radius:5px;"></div><div style="position:absolute;left:24px;top:224px;width:24px;height:24px;background:rgba(255,255,255,.75);border-radius:5px;"></div><div style="position:absolute;left:24px;top:275px;width:24px;height:24px;background:rgba(255,255,255,.75);border-radius:5px;"></div><div style="position:absolute;left:24px;top:320px;width:24px;height:24px;background:rgba(255,255,255,.75);border-radius:5px;"></div><div style="position:absolute;left:72px;top:0px;width:1368px;height:72px;background:#fff;"></div><div style="position:absolute;white-space:pre;left:600px;top:25.2px;font-size:18px;line-height:21.6px;color:#b0b4bd;">Search</div><div style="position:absolute;left:570px;top:26px;width:20px;height:20px;background:#c8ccd4;border-radius:10px;"></div><div style="position:absolute;left:1218px;top:26px;width:22px;height:22px;background:#c9cdd6;border-radius:5px;"></div><div style="position:absolute;left:1268px;top:20px;width:34px;height:34px;background:#f08a24;border-radius:6px;"></div><div style="position:absolute;white-space:pre;left:1312px;top:25.2px;font-size:18px;line-height:21.6px;color:#333;font-weight:700;">Nate Ria</div><div style="position:absolute;left:1400px;top:32px;width:12px;height:8px;background:#aaa;border-radius:2px;"></div><div style="position:absolute;white-space:pre;left:130px;top:94.6px;font-size:29px;line-height:34.8px;color:#111;font-weight:700;">Overview</div><div style="position:absolute;left:130px;top:195px;width:286px;height:131px;background:#fff;border-radius:8px;"></div><div style="position:absolute;left:252px;top:173px;width:42px;height:42px;background:#ea5a94;border-radius:8px;"></div><div style="position:absolute;white-space:pre;left:223px;top:231.2px;font-size:38px;line-height:45.6px;color:#111;font-weight:700;width:100px;text-align:center">68</div><div style="position:absolute;white-space:pre;left:173px;top:285.4px;font-size:16px;line-height:19.2px;color:#9aa0ab;width:200px;text-align:center">Pending Request</div><div style="position:absolute;left:455px;top:195px;width:297px;height:131px;background:#fff;border-radius:8px;"></div><div style="position:absolute;left:582.5px;top:173px;width:42px;height:42px;background:#5aaef0;border-radius:8px;"></div><div style="position:absolute;white-space:pre;left:553.5px;top:231.2px;font-size:38px;line-height:45.6px;color:#111;font-weight:700;width:100px;text-align:center">54</div><div style="position:absolute;white-space:pre;left:503.5px;top:285.4px;font-size:16px;line-height:19.2px;color:#9aa0ab;width:200px;text-align:center">Ongoing Delivery</div><div style="position:absolute;left:779px;top:195px;width:299px;height:131px;background:#fff;border-radius:8px;"></div><div style="position:absolute;left:907.5px;top:173px;width:42px;height:42px;background:#5fd39a;border-radius:8px;"></div><div style="position:absolute;white-space:pre;left:878.5px;top:231.2px;font-size:38px;line-height:45.6px;color:#111;font-weight:700;width:100px;text-align:center">153</div><div style="position:absolute;white-space:pre;left:828.5px;top:285.4px;font-size:16px;line-height:19.2px;color:#9aa0ab;width:200px;text-align:center">Completed Delivery</div><div style="position:absolute;left:1104px;top:195px;width:286px;height:131px;background:#fff;border-radius:8px;"></div><div style="position:absolute;left:1226px;top:173px;width:42px;height:42px;background:#f5c33b;border-radius:8px;"></div><div style="position:absolute;white-space:pre;left:1197px;top:231.2px;font-size:38px;line-height:45.6px;color:#111;font-weight:700;width:100px;text-align:center">86</div><div style="position:absolute;white-space:pre;left:1147px;top:285.4px;font-size:16px;line-height:19.2px;color:#9aa0ab;width:200px;text-align:center">Available Drone</div><div style="position:absolute;left:130px;top:364px;width:923px;height:408px;background:#fff;border-radius:8px;"></div><div style="position:absolute;white-space:pre;left:160px;top:387px;font-size:25px;line-height:30px;color:#111;font-weight:700;">Delivery Request</div><div style="position:absolute;white-space:pre;left:300px;top:388.8px;font-size:22px;line-height:26.4px;color:#888;">›</div><div style="position:absolute;white-space:pre;left:818px;top:391.2px;font-size:18px;line-height:21.6px;color:#222;font-weight:700;">Today</div><div style="position:absolute;white-space:pre;left:880px;top:392.4px;font-size:16px;line-height:19.2px;color:#aab;">Tomorrow  7d  30d</div><div style="position:absolute;left:155px;top:436px;width:290px;height:36px;background:#f5f6fa;border-radius:6px;"></div><div style="position:absolute;white-space:pre;left:180px;top:445px;font-size:15px;line-height:18px;color:#b5bac4;">Search request</div><div style="position:absolute;left:870px;top:436px;width:70px;height:36px;background:#f5f6fa;border-radius:6px;"></div><div style="position:absolute;left:952px;top:436px;width:70px;height:36px;background:#f5f6fa;border-radius:6px;"></div><div style="position:absolute;white-space:pre;left:160px;top:500.2px;font-size:13px;line-height:15.6px;color:#9aa0ab;">REQUEST NAME</div><div style="position:absolute;white-space:pre;left:440px;top:500.2px;font-size:13px;line-height:15.6px;color:#9aa0ab;">WEIGHT</div><div style="position:absolute;white-space:pre;left:520px;top:500.2px;font-size:13px;line-height:15.6px;color:#9aa0ab;">REQUEST TIME</div><div style="position:absolute;white-space:pre;left:700px;top:500.2px;font-size:13px;line-height:15.6px;color:#9aa0ab;">OPERATOR</div><div style="position:absolute;white-space:pre;left:880px;top:500.2px;font-size:13px;line-height:15.6px;color:#9aa0ab;">RECEIVER</div><div style="position:absolute;white-space:pre;left:160px;top:559.8px;font-size:17px;line-height:20.4px;color:#333;font-weight:700;">Documents Delivery</div><div style="position:absolute;left:442px;top:564px;width:36px;height:12px;background:#f4a6ea;border-radius:4px;"></div><div style="position:absolute;left:520px;top:561px;width:18px;height:18px;background:#c9cdd6;border-radius:4px;"></div><div style="position:absolute;white-space:pre;left:548px;top:561px;font-size:15px;line-height:18px;color:#9aa0ab;">Aug 21, 09:30</div><div style="position:absolute;left:694px;top:552px;width:36px;height:36px;background:#5b4bc4;border-radius:7px;"></div><div style="position:absolute;white-space:pre;left:742px;top:560.4px;font-size:16px;line-height:19.2px;color:#444;">Alpha Romeo</div><div style="position:absolute;white-space:pre;left:884px;top:561px;font-size:15px;line-height:18px;color:#888;">Ria</div><div style="position:absolute;white-space:pre;left:160px;top:614.8px;font-size:17px;line-height:20.4px;color:#333;font-weight:700;">Food Delivery</div><div style="position:absolute;left:442px;top:619px;width:36px;height:12px;background:#f4a6ea;border-radius:4px;"></div><div style="position:absolute;left:520px;top:616px;width:18px;height:18px;background:#c9cdd6;border-radius:4px;"></div><div style="position:absolute;white-space:pre;left:548px;top:616px;font-size:15px;line-height:18px;color:#9aa0ab;">Aug 21, 09:30</div><div style="position:absolute;left:694px;top:607px;width:36px;height:36px;background:#8a8a3a;border-radius:7px;"></div><div style="position:absolute;white-space:pre;left:742px;top:615.4px;font-size:16px;line-height:19.2px;color:#444;">Beta Flyer</div><div style="position:absolute;white-space:pre;left:884px;top:616px;font-size:15px;line-height:18px;color:#888;">Ria</div><div style="position:absolute;white-space:pre;left:160px;top:669.8px;font-size:17px;line-height:20.4px;color:#333;font-weight:700;">Medicine Delivery</div><div style="position:absolute;left:442px;top:674px;width:36px;height:12px;background:#f4a6ea;border-radius:4px;"></div><div style="position:absolute;left:520px;top:671px;width:18px;height:18px;background:#c9cdd6;border-radius:4px;"></div><div style="position:absolute;white-space:pre;left:548px;top:671px;font-size:15px;line-height:18px;color:#9aa0ab;">Aug 21, 09:30</div><div style="position:absolute;left:694px;top:662px;width:36px;height:36px;background:#c9505a;border-radius:7px;"></div><div style="position:absolute;white-space:pre;left:742px;top:670.4px;font-size:16px;line-height:19.2px;color:#444;">Delta Mover</div><div style="position:absolute;white-space:pre;left:884px;top:671px;font-size:15px;line-height:18px;color:#888;">Ria</div><div style="position:absolute;white-space:pre;left:160px;top:724.8px;font-size:17px;line-height:20.4px;color:#333;font-weight:700;">Parcel Package</div><div style="position:absolute;left:442px;top:729px;width:36px;height:12px;background:#f4a6ea;border-radius:4px;"></div><div style="position:absolute;left:520px;top:726px;width:18px;height:18px;background:#c9cdd6;border-radius:4px;"></div><div style="position:absolute;white-space:pre;left:548px;top:726px;font-size:15px;line-height:18px;color:#9aa0ab;">Aug 21, 09:30</div><div style="position:absolute;left:694px;top:717px;width:36px;height:36px;background:#5fc88a;border-radius:7px;"></div><div style="position:absolute;white-space:pre;left:742px;top:725.4px;font-size:16px;line-height:19.2px;color:#444;">Agility Transport</div><div style="position:absolute;white-space:pre;left:884px;top:726px;font-size:15px;line-height:18px;color:#888;">Ria</div><div style="position:absolute;left:1030px;top:530px;width:6px;height:70px;background:#9a9fa8;border-radius:3px;"></div><div style="position:absolute;left:1084px;top:364px;width:311px;height:408px;background:#fff;border-radius:8px;"></div><div style="position:absolute;white-space:pre;left:1084px;top:388.2px;font-size:23px;line-height:27.6px;color:#111;font-weight:700;width:311px;text-align:center">Weather Condition</div><div style="position:absolute;left:1262px;top:440px;width:84px;height:84px;background:#f8c63a;border-radius:42px;"></div><div style="position:absolute;left:1180px;top:490px;width:150px;height:64px;background:#cfe3fb;border-radius:32px;"></div><div style="position:absolute;left:1205px;top:462px;width:80px;height:80px;background:#d6e8fc;border-radius:40px;"></div><div style="position:absolute;white-space:pre;left:1084px;top:572.4px;font-size:46px;line-height:55.2px;color:#111;font-weight:700;width:311px;text-align:center">27°</div><div style="position:absolute;white-space:pre;left:1084px;top:633.6px;font-size:14px;line-height:16.8px;color:#9aa0ab;width:311px;text-align:center">Jl. Dr. Soetomo, Surabaya</div><div style="position:absolute;white-space:pre;left:1084px;top:672.2px;font-size:13px;line-height:15.6px;color:#9aa0ab;width:311px;text-align:center">TODAY</div><div style="position:absolute;left:1150px;top:705px;width:22px;height:40px;background:#e3e6ec;border-radius:4px;"></div><div style="position:absolute;left:1202px;top:705px;width:22px;height:40px;background:#e3e6ec;border-radius:4px;"></div><div style="position:absolute;left:1254px;top:705px;width:22px;height:40px;background:#e3e6ec;border-radius:4px;"></div><div style="position:absolute;left:1306px;top:705px;width:22px;height:40px;background:#e3e6ec;border-radius:4px;"></div><div style="position:absolute;left:130px;top:819px;width:615px;height:391px;background:#fff;border-radius:8px;"></div><div style="position:absolute;white-space:pre;left:160px;top:845px;font-size:25px;line-height:30px;color:#111;font-weight:700;">Reports</div><div style="position:absolute;white-space:pre;left:520px;top:851px;font-size:15px;line-height:18px;color:#222;font-weight:700;">Last Week</div><div style="position:absolute;white-space:pre;left:600px;top:851.6px;font-size:14px;line-height:16.8px;color:#aab;">7d  14d  30d</div><div style="position:absolute;white-space:pre;left:160px;top:900.8px;font-size:12px;line-height:14.4px;color:#9aa0ab;">TOTAL SHIPMENT</div><div style="position:absolute;white-space:pre;left:385px;top:900.8px;font-size:12px;line-height:14.4px;color:#9aa0ab;">RETURNS</div><div style="position:absolute;white-space:pre;left:160px;top:929.8px;font-size:42px;line-height:50.4px;color:#111;font-weight:700;">3,033</div><div style="position:absolute;white-space:pre;left:385px;top:929.8px;font-size:42px;line-height:50.4px;color:#111;font-weight:700;">69</div><svg style="position:absolute;left:160px;top:1030px" width="560" height="120" viewBox="0 0 560 120"><polyline points="0,90 60,70 110,45 170,100 240,70 300,95 370,60 450,50 560,40" fill="none" stroke="#b9d3f5" stroke-width="5"/><path d="M0 118 H560" stroke="#eceef2" stroke-width="3"/></svg><div style="position:absolute;left:575px;top:990px;width:4px;height:170px;background:#c7dbf8;"></div><div style="position:absolute;left:520px;top:1078px;width:80px;height:20px;background:#5b8de8;border-radius:6px;"></div><div style="position:absolute;white-space:pre;left:165px;top:1163.6px;font-size:14px;line-height:16.8px;color:#8a8f9a;">14</div><div style="position:absolute;white-space:pre;left:248px;top:1163.6px;font-size:14px;line-height:16.8px;color:#8a8f9a;">15</div><div style="position:absolute;white-space:pre;left:331px;top:1163.6px;font-size:14px;line-height:16.8px;color:#8a8f9a;">16</div><div style="position:absolute;white-space:pre;left:414px;top:1163.6px;font-size:14px;line-height:16.8px;color:#8a8f9a;">17</div><div style="position:absolute;white-space:pre;left:497px;top:1163.6px;font-size:14px;line-height:16.8px;color:#8a8f9a;">18</div><div style="position:absolute;white-space:pre;left:580px;top:1163.6px;font-size:14px;line-height:16.8px;color:#8a8f9a;">19</div><div style="position:absolute;white-space:pre;left:663px;top:1163.6px;font-size:14px;line-height:16.8px;color:#8a8f9a;">20</div><div style="position:absolute;left:780px;top:819px;width:615px;height:391px;background:#fff;border-radius:8px;"></div><div style="position:absolute;white-space:pre;left:810px;top:845px;font-size:25px;line-height:30px;color:#111;font-weight:700;">Operators</div><div style="position:absolute;white-space:pre;left:1250px;top:851px;font-size:15px;line-height:18px;color:#222;font-weight:700;">Available</div><div style="position:absolute;white-space:pre;left:1325px;top:851.6px;font-size:14px;line-height:16.8px;color:#aab;">All  Off</div><div style="position:absolute;left:805px;top:893px;width:300px;height:36px;background:#f5f6fa;border-radius:6px;"></div><div style="position:absolute;white-space:pre;left:810px;top:960.2px;font-size:13px;line-height:15.6px;color:#9aa0ab;">OPERATOR</div><div style="position:absolute;white-space:pre;left:1015px;top:960.2px;font-size:13px;line-height:15.6px;color:#9aa0ab;">STATUS</div><div style="position:absolute;white-space:pre;left:1160px;top:960.2px;font-size:13px;line-height:15.6px;color:#9aa0ab;">TOTAL FLIGHTS</div><div style="position:absolute;white-space:pre;left:1310px;top:960.2px;font-size:13px;line-height:15.6px;color:#9aa0ab;">LOCATION</div><div style="position:absolute;left:810px;top:1012px;width:36px;height:36px;background:#5b4bc4;border-radius:7px;"></div><div style="position:absolute;white-space:pre;left:860px;top:1012.4px;font-size:16px;line-height:19.2px;color:#333;font-weight:700;">Alpha Romeo</div><div style="position:absolute;white-space:pre;left:860px;top:1032.8px;font-size:12px;line-height:14.4px;color:#9aa0ab;">DJI Matrice</div><div style="position:absolute;left:1014px;top:1020px;width:90px;height:20px;background:#4db86a;border-radius:4px;"></div><div style="position:absolute;white-space:pre;left:1180px;top:1021px;font-size:15px;line-height:18px;color:#666;">72</div><div style="position:absolute;white-space:pre;left:1310px;top:1021px;font-size:15px;line-height:18px;color:#666;">East SBY</div><div style="position:absolute;left:810px;top:1069px;width:36px;height:36px;background:#8a8a3a;border-radius:7px;"></div><div style="position:absolute;white-space:pre;left:860px;top:1069.4px;font-size:16px;line-height:19.2px;color:#333;font-weight:700;">Beta Flyer</div><div style="position:absolute;white-space:pre;left:860px;top:1089.8px;font-size:12px;line-height:14.4px;color:#9aa0ab;">DJI Matrice</div><div style="position:absolute;left:1014px;top:1077px;width:50px;height:20px;background:#f5a04a;border-radius:4px;"></div><div style="position:absolute;white-space:pre;left:1180px;top:1078px;font-size:15px;line-height:18px;color:#666;">36</div><div style="position:absolute;white-space:pre;left:1310px;top:1078px;font-size:15px;line-height:18px;color:#666;">East SBY</div><div style="position:absolute;left:810px;top:1126px;width:36px;height:36px;background:#5fc88a;border-radius:7px;"></div><div style="position:absolute;white-space:pre;left:860px;top:1126.4px;font-size:16px;line-height:19.2px;color:#333;font-weight:700;">Agility Transport</div><div style="position:absolute;white-space:pre;left:860px;top:1146.8px;font-size:12px;line-height:14.4px;color:#9aa0ab;">DJI Matrice</div><div style="position:absolute;left:1014px;top:1134px;width:90px;height:20px;background:#4db86a;border-radius:4px;"></div><div style="position:absolute;white-space:pre;left:1180px;top:1135px;font-size:15px;line-height:18px;color:#666;">144</div><div style="position:absolute;white-space:pre;left:1310px;top:1135px;font-size:15px;line-height:18px;color:#666;">East SBY</div></div></div>
<div class="fr" style="left:245.70px;top:178.30px;width:1437px;height:1272px"><div style="position:absolute;left:0px;top:0px;width:1437px;height:1272px;background:#fff;"></div><div class="fi"><div style="position:absolute;left:0px;top:0px;width:1440px;height:1302px;background:#f5f6fa;"></div><div style="position:absolute;left:0px;top:0px;width:72px;height:1302px;background:#417de1;"></div><div style="position:absolute;left:20px;top:18px;width:32px;height:32px;background:#fff;border-radius:6px;opacity:.9"></div><div style="position:absolute;left:0px;top:98px;width:72px;height:40px;background:rgba(255,255,255,.92);"></div><div style="position:absolute;left:24px;top:106px;width:24px;height:24px;background:#417de1;border-radius:4px;"></div><div style="position:absolute;left:24px;top:166px;width:24px;height:24px;background:rgba(255,255,255,.75);border-radius:5px;"></div><div style="position:absolute;left:24px;top:224px;width:24px;height:24px;background:rgba(255,255,255,.75);border-radius:5px;"></div><div style="position:absolute;left:24px;top:275px;width:24px;height:24px;background:rgba(255,255,255,.75);border-radius:5px;"></div><div style="position:absolute;left:24px;top:320px;width:24px;height:24px;background:rgba(255,255,255,.75);border-radius:5px;"></div><div style="position:absolute;left:72px;top:0px;width:1368px;height:72px;background:#fff;"></div><div style="position:absolute;white-space:pre;left:600px;top:25.2px;font-size:18px;line-height:21.6px;color:#b0b4bd;">Search</div><div style="position:absolute;left:570px;top:26px;width:20px;height:20px;background:#c8ccd4;border-radius:10px;"></div><div style="position:absolute;left:1218px;top:26px;width:22px;height:22px;background:#c9cdd6;border-radius:5px;"></div><div style="position:absolute;left:1268px;top:20px;width:34px;height:34px;background:#f08a24;border-radius:6px;"></div><div style="position:absolute;white-space:pre;left:1312px;top:25.2px;font-size:18px;line-height:21.6px;color:#333;font-weight:700;">Nate Ria</div><div style="position:absolute;left:1400px;top:32px;width:12px;height:8px;background:#aaa;border-radius:2px;"></div><div style="position:absolute;white-space:pre;left:130px;top:94.6px;font-size:29px;line-height:34.8px;color:#111;font-weight:700;">Overview</div><div style="position:absolute;left:130px;top:195px;width:286px;height:131px;background:#fff;border-radius:8px;"></div><div style="position:absolute;left:252px;top:173px;width:42px;height:42px;background:#ea5a94;border-radius:8px;"></div><div style="position:absolute;white-space:pre;left:223px;top:231.2px;font-size:38px;line-height:45.6px;color:#111;font-weight:700;width:100px;text-align:center">68</div><div style="position:absolute;white-space:pre;left:173px;top:285.4px;font-size:16px;line-height:19.2px;color:#9aa0ab;width:200px;text-align:center">Pending Request</div><div style="position:absolute;left:455px;top:195px;width:297px;height:131px;background:#fff;border-radius:8px;"></div><div style="position:absolute;left:582.5px;top:173px;width:42px;height:42px;background:#5aaef0;border-radius:8px;"></div><div style="position:absolute;white-space:pre;left:553.5px;top:231.2px;font-size:38px;line-height:45.6px;color:#111;font-weight:700;width:100px;text-align:center">54</div><div style="position:absolute;white-space:pre;left:503.5px;top:285.4px;font-size:16px;line-height:19.2px;color:#9aa0ab;width:200px;text-align:center">Ongoing Delivery</div><div style="position:absolute;left:779px;top:195px;width:299px;height:131px;background:#fff;border-radius:8px;"></div><div style="position:absolute;left:907.5px;top:173px;width:42px;height:42px;background:#5fd39a;border-radius:8px;"></div><div style="position:absolute;white-space:pre;left:878.5px;top:231.2px;font-size:38px;line-height:45.6px;color:#111;font-weight:700;width:100px;text-align:center">153</div><div style="position:absolute;white-space:pre;left:828.5px;top:285.4px;font-size:16px;line-height:19.2px;color:#9aa0ab;width:200px;text-align:center">Completed Delivery</div><div style="position:absolute;left:1104px;top:195px;width:286px;height:131px;background:#fff;border-radius:8px;"></div><div style="position:absolute;left:1226px;top:173px;width:42px;height:42px;background:#f5c33b;border-radius:8px;"></div><div style="position:absolute;white-space:pre;left:1197px;top:231.2px;font-size:38px;line-height:45.6px;color:#111;font-weight:700;width:100px;text-align:center">86</div><div style="position:absolute;white-space:pre;left:1147px;top:285.4px;font-size:16px;line-height:19.2px;color:#9aa0ab;width:200px;text-align:center">Available Drone</div><div style="position:absolute;left:130px;top:364px;width:923px;height:408px;background:#fff;border-radius:8px;"></div><div style="position:absolute;white-space:pre;left:160px;top:387px;font-size:25px;line-height:30px;color:#111;font-weight:700;">Delivery Request</div><div style="position:absolute;white-space:pre;left:300px;top:388.8px;font-size:22px;line-height:26.4px;color:#888;">›</div><div style="position:absolute;white-space:pre;left:818px;top:391.2px;font-size:18px;line-height:21.6px;color:#222;font-weight:700;">Today</div><div style="position:absolute;white-space:pre;left:880px;top:392.4px;font-size:16px;line-height:19.2px;color:#aab;">Tomorrow  7d  30d</div><div style="position:absolute;left:155px;top:436px;width:290px;height:36px;background:#f5f6fa;border-radius:6px;"></div><div style="position:absolute;white-space:pre;left:180px;top:445px;font-size:15px;line-height:18px;color:#b5bac4;">Search request</div><div style="position:absolute;left:870px;top:436px;width:70px;height:36px;background:#f5f6fa;border-radius:6px;"></div><div style="position:absolute;left:952px;top:436px;width:70px;height:36px;background:#f5f6fa;border-radius:6px;"></div><div style="position:absolute;white-space:pre;left:160px;top:500.2px;font-size:13px;line-height:15.6px;color:#9aa0ab;">REQUEST NAME</div><div style="position:absolute;white-space:pre;left:440px;top:500.2px;font-size:13px;line-height:15.6px;color:#9aa0ab;">WEIGHT</div><div style="position:absolute;white-space:pre;left:520px;top:500.2px;font-size:13px;line-height:15.6px;color:#9aa0ab;">REQUEST TIME</div><div style="position:absolute;white-space:pre;left:700px;top:500.2px;font-size:13px;line-height:15.6px;color:#9aa0ab;">OPERATOR</div><div style="position:absolute;white-space:pre;left:880px;top:500.2px;font-size:13px;line-height:15.6px;color:#9aa0ab;">RECEIVER</div><div style="position:absolute;white-space:pre;left:160px;top:559.8px;font-size:17px;line-height:20.4px;color:#333;font-weight:700;">Documents Delivery</div><div style="position:absolute;left:442px;top:564px;width:36px;height:12px;background:#f4a6ea;border-radius:4px;"></div><div style="position:absolute;left:520px;top:561px;width:18px;height:18px;background:#c9cdd6;border-radius:4px;"></div><div style="position:absolute;white-space:pre;left:548px;top:561px;font-size:15px;line-height:18px;color:#9aa0ab;">Aug 21, 09:30</div><div style="position:absolute;left:694px;top:552px;width:36px;height:36px;background:#5b4bc4;border-radius:7px;"></div><div style="position:absolute;white-space:pre;left:742px;top:560.4px;font-size:16px;line-height:19.2px;color:#444;">Alpha Romeo</div><div style="position:absolute;white-space:pre;left:884px;top:561px;font-size:15px;line-height:18px;color:#888;">Ria</div><div style="position:absolute;white-space:pre;left:160px;top:614.8px;font-size:17px;line-height:20.4px;color:#333;font-weight:700;">Food Delivery</div><div style="position:absolute;left:442px;top:619px;width:36px;height:12px;background:#f4a6ea;border-radius:4px;"></div><div style="position:absolute;left:520px;top:616px;width:18px;height:18px;background:#c9cdd6;border-radius:4px;"></div><div style="position:absolute;white-space:pre;left:548px;top:616px;font-size:15px;line-height:18px;color:#9aa0ab;">Aug 21, 09:30</div><div style="position:absolute;left:694px;top:607px;width:36px;height:36px;background:#8a8a3a;border-radius:7px;"></div><div style="position:absolute;white-space:pre;left:742px;top:615.4px;font-size:16px;line-height:19.2px;color:#444;">Beta Flyer</div><div style="position:absolute;white-space:pre;left:884px;top:616px;font-size:15px;line-height:18px;color:#888;">Ria</div><div style="position:absolute;white-space:pre;left:160px;top:669.8px;font-size:17px;line-height:20.4px;color:#333;font-weight:700;">Medicine Delivery</div><div style="position:absolute;left:442px;top:674px;width:36px;height:12px;background:#f4a6ea;border-radius:4px;"></div><div style="position:absolute;left:520px;top:671px;width:18px;height:18px;background:#c9cdd6;border-radius:4px;"></div><div style="position:absolute;white-space:pre;left:548px;top:671px;font-size:15px;line-height:18px;color:#9aa0ab;">Aug 21, 09:30</div><div style="position:absolute;left:694px;top:662px;width:36px;height:36px;background:#c9505a;border-radius:7px;"></div><div style="position:absolute;white-space:pre;left:742px;top:670.4px;font-size:16px;line-height:19.2px;color:#444;">Delta Mover</div><div style="position:absolute;white-space:pre;left:884px;top:671px;font-size:15px;line-height:18px;color:#888;">Ria</div><div style="position:absolute;white-space:pre;left:160px;top:724.8px;font-size:17px;line-height:20.4px;color:#333;font-weight:700;">Parcel Package</div><div style="position:absolute;left:442px;top:729px;width:36px;height:12px;background:#f4a6ea;border-radius:4px;"></div><div style="position:absolute;left:520px;top:726px;width:18px;height:18px;background:#c9cdd6;border-radius:4px;"></div><div style="position:absolute;white-space:pre;left:548px;top:726px;font-size:15px;line-height:18px;color:#9aa0ab;">Aug 21, 09:30</div><div style="position:absolute;left:694px;top:717px;width:36px;height:36px;background:#5fc88a;border-radius:7px;"></div><div style="position:absolute;white-space:pre;left:742px;top:725.4px;font-size:16px;line-height:19.2px;color:#444;">Agility Transport</div><div style="position:absolute;white-space:pre;left:884px;top:726px;font-size:15px;line-height:18px;color:#888;">Ria</div><div style="position:absolute;left:1030px;top:530px;width:6px;height:70px;background:#9a9fa8;border-radius:3px;"></div><div style="position:absolute;left:1084px;top:364px;width:311px;height:408px;background:#fff;border-radius:8px;"></div><div style="position:absolute;white-space:pre;left:1084px;top:388.2px;font-size:23px;line-height:27.6px;color:#111;font-weight:700;width:311px;text-align:center">Weather Condition</div><div style="position:absolute;left:1262px;top:440px;width:84px;height:84px;background:#f8c63a;border-radius:42px;"></div><div style="position:absolute;left:1180px;top:490px;width:150px;height:64px;background:#cfe3fb;border-radius:32px;"></div><div style="position:absolute;left:1205px;top:462px;width:80px;height:80px;background:#d6e8fc;border-radius:40px;"></div><div style="position:absolute;white-space:pre;left:1084px;top:572.4px;font-size:46px;line-height:55.2px;color:#111;font-weight:700;width:311px;text-align:center">27°</div><div style="position:absolute;white-space:pre;left:1084px;top:633.6px;font-size:14px;line-height:16.8px;color:#9aa0ab;width:311px;text-align:center">Jl. Dr. Soetomo, Surabaya</div><div style="position:absolute;white-space:pre;left:1084px;top:672.2px;font-size:13px;line-height:15.6px;color:#9aa0ab;width:311px;text-align:center">TODAY</div><div style="position:absolute;left:1150px;top:705px;width:22px;height:40px;background:#e3e6ec;border-radius:4px;"></div><div style="position:absolute;left:1202px;top:705px;width:22px;height:40px;background:#e3e6ec;border-radius:4px;"></div><div style="position:absolute;left:1254px;top:705px;width:22px;height:40px;background:#e3e6ec;border-radius:4px;"></div><div style="position:absolute;left:1306px;top:705px;width:22px;height:40px;background:#e3e6ec;border-radius:4px;"></div><div style="position:absolute;left:130px;top:819px;width:615px;height:391px;background:#fff;border-radius:8px;"></div><div style="position:absolute;white-space:pre;left:160px;top:845px;font-size:25px;line-height:30px;color:#111;font-weight:700;">Reports</div><div style="position:absolute;white-space:pre;left:520px;top:851px;font-size:15px;line-height:18px;color:#222;font-weight:700;">Last Week</div><div style="position:absolute;white-space:pre;left:600px;top:851.6px;font-size:14px;line-height:16.8px;color:#aab;">7d  14d  30d</div><div style="position:absolute;white-space:pre;left:160px;top:900.8px;font-size:12px;line-height:14.4px;color:#9aa0ab;">TOTAL SHIPMENT</div><div style="position:absolute;white-space:pre;left:385px;top:900.8px;font-size:12px;line-height:14.4px;color:#9aa0ab;">RETURNS</div><div style="position:absolute;white-space:pre;left:160px;top:929.8px;font-size:42px;line-height:50.4px;color:#111;font-weight:700;">3,033</div><div style="position:absolute;white-space:pre;left:385px;top:929.8px;font-size:42px;line-height:50.4px;color:#111;font-weight:700;">69</div><svg style="position:absolute;left:160px;top:1030px" width="560" height="120" viewBox="0 0 560 120"><polyline points="0,90 60,70 110,45 170,100 240,70 300,95 370,60 450,50 560,40" fill="none" stroke="#b9d3f5" stroke-width="5"/><path d="M0 118 H560" stroke="#eceef2" stroke-width="3"/></svg><div style="position:absolute;left:575px;top:990px;width:4px;height:170px;background:#c7dbf8;"></div><div style="position:absolute;left:520px;top:1078px;width:80px;height:20px;background:#5b8de8;border-radius:6px;"></div><div style="position:absolute;white-space:pre;left:165px;top:1163.6px;font-size:14px;line-height:16.8px;color:#8a8f9a;">14</div><div style="position:absolute;white-space:pre;left:248px;top:1163.6px;font-size:14px;line-height:16.8px;color:#8a8f9a;">15</div><div style="position:absolute;white-space:pre;left:331px;top:1163.6px;font-size:14px;line-height:16.8px;color:#8a8f9a;">16</div><div style="position:absolute;white-space:pre;left:414px;top:1163.6px;font-size:14px;line-height:16.8px;color:#8a8f9a;">17</div><div style="position:absolute;white-space:pre;left:497px;top:1163.6px;font-size:14px;line-height:16.8px;color:#8a8f9a;">18</div><div style="position:absolute;white-space:pre;left:580px;top:1163.6px;font-size:14px;line-height:16.8px;color:#8a8f9a;">19</div><div style="position:absolute;white-space:pre;left:663px;top:1163.6px;font-size:14px;line-height:16.8px;color:#8a8f9a;">20</div><div style="position:absolute;left:780px;top:819px;width:615px;height:391px;background:#fff;border-radius:8px;"></div><div style="position:absolute;white-space:pre;left:810px;top:845px;font-size:25px;line-height:30px;color:#111;font-weight:700;">Operators</div><div style="position:absolute;white-space:pre;left:1250px;top:851px;font-size:15px;line-height:18px;color:#222;font-weight:700;">Available</div><div style="position:absolute;white-space:pre;left:1325px;top:851.6px;font-size:14px;line-height:16.8px;color:#aab;">All  Off</div><div style="position:absolute;left:805px;top:893px;width:300px;height:36px;background:#f5f6fa;border-radius:6px;"></div><div style="position:absolute;white-space:pre;left:810px;top:960.2px;font-size:13px;line-height:15.6px;color:#9aa0ab;">OPERATOR</div><div style="position:absolute;white-space:pre;left:1015px;top:960.2px;font-size:13px;line-height:15.6px;color:#9aa0ab;">STATUS</div><div style="position:absolute;white-space:pre;left:1160px;top:960.2px;font-size:13px;line-height:15.6px;color:#9aa0ab;">TOTAL FLIGHTS</div><div style="position:absolute;white-space:pre;left:1310px;top:960.2px;font-size:13px;line-height:15.6px;color:#9aa0ab;">LOCATION</div><div style="position:absolute;left:810px;top:1012px;width:36px;height:36px;background:#5b4bc4;border-radius:7px;"></div><div style="position:absolute;white-space:pre;left:860px;top:1012.4px;font-size:16px;line-height:19.2px;color:#333;font-weight:700;">Alpha Romeo</div><div style="position:absolute;white-space:pre;left:860px;top:1032.8px;font-size:12px;line-height:14.4px;color:#9aa0ab;">DJI Matrice</div><div style="position:absolute;left:1014px;top:1020px;width:90px;height:20px;background:#4db86a;border-radius:4px;"></div><div style="position:absolute;white-space:pre;left:1180px;top:1021px;font-size:15px;line-height:18px;color:#666;">72</div><div style="position:absolute;white-space:pre;left:1310px;top:1021px;font-size:15px;line-height:18px;color:#666;">East SBY</div><div style="position:absolute;left:810px;top:1069px;width:36px;height:36px;background:#8a8a3a;border-radius:7px;"></div><div style="position:absolute;white-space:pre;left:860px;top:1069.4px;font-size:16px;line-height:19.2px;color:#333;font-weight:700;">Beta Flyer</div><div style="position:absolute;white-space:pre;left:860px;top:1089.8px;font-size:12px;line-height:14.4px;color:#9aa0ab;">DJI Matrice</div><div style="position:absolute;left:1014px;top:1077px;width:50px;height:20px;background:#f5a04a;border-radius:4px;"></div><div style="position:absolute;white-space:pre;left:1180px;top:1078px;font-size:15px;line-height:18px;color:#666;">36</div><div style="position:absolute;white-space:pre;left:1310px;top:1078px;font-size:15px;line-height:18px;color:#666;">East SBY</div><div style="position:absolute;left:810px;top:1126px;width:36px;height:36px;background:#5fc88a;border-radius:7px;"></div><div style="position:absolute;white-space:pre;left:860px;top:1126.4px;font-size:16px;line-height:19.2px;color:#333;font-weight:700;">Agility Transport</div><div style="position:absolute;white-space:pre;left:860px;top:1146.8px;font-size:12px;line-height:14.4px;color:#9aa0ab;">DJI Matrice</div><div style="position:absolute;left:1014px;top:1134px;width:90px;height:20px;background:#4db86a;border-radius:4px;"></div><div style="position:absolute;white-space:pre;left:1180px;top:1135px;font-size:15px;line-height:18px;color:#666;">144</div><div style="position:absolute;white-space:pre;left:1310px;top:1135px;font-size:15px;line-height:18px;color:#666;">East SBY</div></div></div>
<div class="fr" style="left:372.10px;top:178.30px;width:1437px;height:1272px"><div style="position:absolute;left:0px;top:0px;width:1437px;height:1272px;background:#fff;"></div><div class="fi"><div style="position:absolute;left:0px;top:0px;width:1440px;height:1302px;background:#f5f6fa;"></div><div style="position:absolute;left:0px;top:0px;width:72px;height:1302px;background:#417de1;"></div><div style="position:absolute;left:20px;top:18px;width:32px;height:32px;background:#fff;border-radius:6px;opacity:.9"></div><div style="position:absolute;left:0px;top:98px;width:72px;height:40px;background:rgba(255,255,255,.92);"></div><div style="position:absolute;left:24px;top:106px;width:24px;height:24px;background:#417de1;border-radius:4px;"></div><div style="position:absolute;left:24px;top:166px;width:24px;height:24px;background:rgba(255,255,255,.75);border-radius:5px;"></div><div style="position:absolute;left:24px;top:224px;width:24px;height:24px;background:rgba(255,255,255,.75);border-radius:5px;"></div><div style="position:absolute;left:24px;top:275px;width:24px;height:24px;background:rgba(255,255,255,.75);border-radius:5px;"></div><div style="position:absolute;left:24px;top:320px;width:24px;height:24px;background:rgba(255,255,255,.75);border-radius:5px;"></div><div style="position:absolute;left:72px;top:0px;width:1368px;height:72px;background:#fff;"></div><div style="position:absolute;white-space:pre;left:600px;top:25.2px;font-size:18px;line-height:21.6px;color:#b0b4bd;">Search</div><div style="position:absolute;left:570px;top:26px;width:20px;height:20px;background:#c8ccd4;border-radius:10px;"></div><div style="position:absolute;left:1218px;top:26px;width:22px;height:22px;background:#c9cdd6;border-radius:5px;"></div><div style="position:absolute;left:1268px;top:20px;width:34px;height:34px;background:#f08a24;border-radius:6px;"></div><div style="position:absolute;white-space:pre;left:1312px;top:25.2px;font-size:18px;line-height:21.6px;color:#333;font-weight:700;">Nate Ria</div><div style="position:absolute;left:1400px;top:32px;width:12px;height:8px;background:#aaa;border-radius:2px;"></div><div style="position:absolute;white-space:pre;left:130px;top:94.6px;font-size:29px;line-height:34.8px;color:#111;font-weight:700;">Overview</div><div style="position:absolute;left:130px;top:195px;width:286px;height:131px;background:#fff;border-radius:8px;"></div><div style="position:absolute;left:252px;top:173px;width:42px;height:42px;background:#ea5a94;border-radius:8px;"></div><div style="position:absolute;white-space:pre;left:223px;top:231.2px;font-size:38px;line-height:45.6px;color:#111;font-weight:700;width:100px;text-align:center">68</div><div style="position:absolute;white-space:pre;left:173px;top:285.4px;font-size:16px;line-height:19.2px;color:#9aa0ab;width:200px;text-align:center">Pending Request</div><div style="position:absolute;left:455px;top:195px;width:297px;height:131px;background:#fff;border-radius:8px;"></div><div style="position:absolute;left:582.5px;top:173px;width:42px;height:42px;background:#5aaef0;border-radius:8px;"></div><div style="position:absolute;white-space:pre;left:553.5px;top:231.2px;font-size:38px;line-height:45.6px;color:#111;font-weight:700;width:100px;text-align:center">54</div><div style="position:absolute;white-space:pre;left:503.5px;top:285.4px;font-size:16px;line-height:19.2px;color:#9aa0ab;width:200px;text-align:center">Ongoing Delivery</div><div style="position:absolute;left:779px;top:195px;width:299px;height:131px;background:#fff;border-radius:8px;"></div><div style="position:absolute;left:907.5px;top:173px;width:42px;height:42px;background:#5fd39a;border-radius:8px;"></div><div style="position:absolute;white-space:pre;left:878.5px;top:231.2px;font-size:38px;line-height:45.6px;color:#111;font-weight:700;width:100px;text-align:center">153</div><div style="position:absolute;white-space:pre;left:828.5px;top:285.4px;font-size:16px;line-height:19.2px;color:#9aa0ab;width:200px;text-align:center">Completed Delivery</div><div style="position:absolute;left:1104px;top:195px;width:286px;height:131px;background:#fff;border-radius:8px;"></div><div style="position:absolute;left:1226px;top:173px;width:42px;height:42px;background:#f5c33b;border-radius:8px;"></div><div style="position:absolute;white-space:pre;left:1197px;top:231.2px;font-size:38px;line-height:45.6px;color:#111;font-weight:700;width:100px;text-align:center">86</div><div style="position:absolute;white-space:pre;left:1147px;top:285.4px;font-size:16px;line-height:19.2px;color:#9aa0ab;width:200px;text-align:center">Available Drone</div><div style="position:absolute;left:130px;top:364px;width:923px;height:408px;background:#fff;border-radius:8px;"></div><div style="position:absolute;white-space:pre;left:160px;top:387px;font-size:25px;line-height:30px;color:#111;font-weight:700;">Delivery Request</div><div style="position:absolute;white-space:pre;left:300px;top:388.8px;font-size:22px;line-height:26.4px;color:#888;">›</div><div style="position:absolute;white-space:pre;left:818px;top:391.2px;font-size:18px;line-height:21.6px;color:#222;font-weight:700;">Today</div><div style="position:absolute;white-space:pre;left:880px;top:392.4px;font-size:16px;line-height:19.2px;color:#aab;">Tomorrow  7d  30d</div><div style="position:absolute;left:155px;top:436px;width:290px;height:36px;background:#f5f6fa;border-radius:6px;"></div><div style="position:absolute;white-space:pre;left:180px;top:445px;font-size:15px;line-height:18px;color:#b5bac4;">Search request</div><div style="position:absolute;left:870px;top:436px;width:70px;height:36px;background:#f5f6fa;border-radius:6px;"></div><div style="position:absolute;left:952px;top:436px;width:70px;height:36px;background:#f5f6fa;border-radius:6px;"></div><div style="position:absolute;white-space:pre;left:160px;top:500.2px;font-size:13px;line-height:15.6px;color:#9aa0ab;">REQUEST NAME</div><div style="position:absolute;white-space:pre;left:440px;top:500.2px;font-size:13px;line-height:15.6px;color:#9aa0ab;">WEIGHT</div><div style="position:absolute;white-space:pre;left:520px;top:500.2px;font-size:13px;line-height:15.6px;color:#9aa0ab;">REQUEST TIME</div><div style="position:absolute;white-space:pre;left:700px;top:500.2px;font-size:13px;line-height:15.6px;color:#9aa0ab;">OPERATOR</div><div style="position:absolute;white-space:pre;left:880px;top:500.2px;font-size:13px;line-height:15.6px;color:#9aa0ab;">RECEIVER</div><div style="position:absolute;white-space:pre;left:160px;top:559.8px;font-size:17px;line-height:20.4px;color:#333;font-weight:700;">Documents Delivery</div><div style="position:absolute;left:442px;top:564px;width:36px;height:12px;background:#f4a6ea;border-radius:4px;"></div><div style="position:absolute;left:520px;top:561px;width:18px;height:18px;background:#c9cdd6;border-radius:4px;"></div><div style="position:absolute;white-space:pre;left:548px;top:561px;font-size:15px;line-height:18px;color:#9aa0ab;">Aug 21, 09:30</div><div style="position:absolute;left:694px;top:552px;width:36px;height:36px;background:#5b4bc4;border-radius:7px;"></div><div style="position:absolute;white-space:pre;left:742px;top:560.4px;font-size:16px;line-height:19.2px;color:#444;">Alpha Romeo</div><div style="position:absolute;white-space:pre;left:884px;top:561px;font-size:15px;line-height:18px;color:#888;">Ria</div><div style="position:absolute;white-space:pre;left:160px;top:614.8px;font-size:17px;line-height:20.4px;color:#333;font-weight:700;">Food Delivery</div><div style="position:absolute;left:442px;top:619px;width:36px;height:12px;background:#f4a6ea;border-radius:4px;"></div><div style="position:absolute;left:520px;top:616px;width:18px;height:18px;background:#c9cdd6;border-radius:4px;"></div><div style="position:absolute;white-space:pre;left:548px;top:616px;font-size:15px;line-height:18px;color:#9aa0ab;">Aug 21, 09:30</div><div style="position:absolute;left:694px;top:607px;width:36px;height:36px;background:#8a8a3a;border-radius:7px;"></div><div style="position:absolute;white-space:pre;left:742px;top:615.4px;font-size:16px;line-height:19.2px;color:#444;">Beta Flyer</div><div style="position:absolute;white-space:pre;left:884px;top:616px;font-size:15px;line-height:18px;color:#888;">Ria</div><div style="position:absolute;white-space:pre;left:160px;top:669.8px;font-size:17px;line-height:20.4px;color:#333;font-weight:700;">Medicine Delivery</div><div style="position:absolute;left:442px;top:674px;width:36px;height:12px;background:#f4a6ea;border-radius:4px;"></div><div style="position:absolute;left:520px;top:671px;width:18px;height:18px;background:#c9cdd6;border-radius:4px;"></div><div style="position:absolute;white-space:pre;left:548px;top:671px;font-size:15px;line-height:18px;color:#9aa0ab;">Aug 21, 09:30</div><div style="position:absolute;left:694px;top:662px;width:36px;height:36px;background:#c9505a;border-radius:7px;"></div><div style="position:absolute;white-space:pre;left:742px;top:670.4px;font-size:16px;line-height:19.2px;color:#444;">Delta Mover</div><div style="position:absolute;white-space:pre;left:884px;top:671px;font-size:15px;line-height:18px;color:#888;">Ria</div><div style="position:absolute;white-space:pre;left:160px;top:724.8px;font-size:17px;line-height:20.4px;color:#333;font-weight:700;">Parcel Package</div><div style="position:absolute;left:442px;top:729px;width:36px;height:12px;background:#f4a6ea;border-radius:4px;"></div><div style="position:absolute;left:520px;top:726px;width:18px;height:18px;background:#c9cdd6;border-radius:4px;"></div><div style="position:absolute;white-space:pre;left:548px;top:726px;font-size:15px;line-height:18px;color:#9aa0ab;">Aug 21, 09:30</div><div style="position:absolute;left:694px;top:717px;width:36px;height:36px;background:#5fc88a;border-radius:7px;"></div><div style="position:absolute;white-space:pre;left:742px;top:725.4px;font-size:16px;line-height:19.2px;color:#444;">Agility Transport</div><div style="position:absolute;white-space:pre;left:884px;top:726px;font-size:15px;line-height:18px;color:#888;">Ria</div><div style="position:absolute;left:1030px;top:530px;width:6px;height:70px;background:#9a9fa8;border-radius:3px;"></div><div style="position:absolute;left:1084px;top:364px;width:311px;height:408px;background:#fff;border-radius:8px;"></div><div style="position:absolute;white-space:pre;left:1084px;top:388.2px;font-size:23px;line-height:27.6px;color:#111;font-weight:700;width:311px;text-align:center">Weather Condition</div><div style="position:absolute;left:1262px;top:440px;width:84px;height:84px;background:#f8c63a;border-radius:42px;"></div><div style="position:absolute;left:1180px;top:490px;width:150px;height:64px;background:#cfe3fb;border-radius:32px;"></div><div style="position:absolute;left:1205px;top:462px;width:80px;height:80px;background:#d6e8fc;border-radius:40px;"></div><div style="position:absolute;white-space:pre;left:1084px;top:572.4px;font-size:46px;line-height:55.2px;color:#111;font-weight:700;width:311px;text-align:center">27°</div><div style="position:absolute;white-space:pre;left:1084px;top:633.6px;font-size:14px;line-height:16.8px;color:#9aa0ab;width:311px;text-align:center">Jl. Dr. Soetomo, Surabaya</div><div style="position:absolute;white-space:pre;left:1084px;top:672.2px;font-size:13px;line-height:15.6px;color:#9aa0ab;width:311px;text-align:center">TODAY</div><div style="position:absolute;left:1150px;top:705px;width:22px;height:40px;background:#e3e6ec;border-radius:4px;"></div><div style="position:absolute;left:1202px;top:705px;width:22px;height:40px;background:#e3e6ec;border-radius:4px;"></div><div style="position:absolute;left:1254px;top:705px;width:22px;height:40px;background:#e3e6ec;border-radius:4px;"></div><div style="position:absolute;left:1306px;top:705px;width:22px;height:40px;background:#e3e6ec;border-radius:4px;"></div><div style="position:absolute;left:130px;top:819px;width:615px;height:391px;background:#fff;border-radius:8px;"></div><div style="position:absolute;white-space:pre;left:160px;top:845px;font-size:25px;line-height:30px;color:#111;font-weight:700;">Reports</div><div style="position:absolute;white-space:pre;left:520px;top:851px;font-size:15px;line-height:18px;color:#222;font-weight:700;">Last Week</div><div style="position:absolute;white-space:pre;left:600px;top:851.6px;font-size:14px;line-height:16.8px;color:#aab;">7d  14d  30d</div><div style="position:absolute;white-space:pre;left:160px;top:900.8px;font-size:12px;line-height:14.4px;color:#9aa0ab;">TOTAL SHIPMENT</div><div style="position:absolute;white-space:pre;left:385px;top:900.8px;font-size:12px;line-height:14.4px;color:#9aa0ab;">RETURNS</div><div style="position:absolute;white-space:pre;left:160px;top:929.8px;font-size:42px;line-height:50.4px;color:#111;font-weight:700;">3,033</div><div style="position:absolute;white-space:pre;left:385px;top:929.8px;font-size:42px;line-height:50.4px;color:#111;font-weight:700;">69</div><svg style="position:absolute;left:160px;top:1030px" width="560" height="120" viewBox="0 0 560 120"><polyline points="0,90 60,70 110,45 170,100 240,70 300,95 370,60 450,50 560,40" fill="none" stroke="#b9d3f5" stroke-width="5"/><path d="M0 118 H560" stroke="#eceef2" stroke-width="3"/></svg><div style="position:absolute;left:575px;top:990px;width:4px;height:170px;background:#c7dbf8;"></div><div style="position:absolute;left:520px;top:1078px;width:80px;height:20px;background:#5b8de8;border-radius:6px;"></div><div style="position:absolute;white-space:pre;left:165px;top:1163.6px;font-size:14px;line-height:16.8px;color:#8a8f9a;">14</div><div style="position:absolute;white-space:pre;left:248px;top:1163.6px;font-size:14px;line-height:16.8px;color:#8a8f9a;">15</div><div style="position:absolute;white-space:pre;left:331px;top:1163.6px;font-size:14px;line-height:16.8px;color:#8a8f9a;">16</div><div style="position:absolute;white-space:pre;left:414px;top:1163.6px;font-size:14px;line-height:16.8px;color:#8a8f9a;">17</div><div style="position:absolute;white-space:pre;left:497px;top:1163.6px;font-size:14px;line-height:16.8px;color:#8a8f9a;">18</div><div style="position:absolute;white-space:pre;left:580px;top:1163.6px;font-size:14px;line-height:16.8px;color:#8a8f9a;">19</div><div style="position:absolute;white-space:pre;left:663px;top:1163.6px;font-size:14px;line-height:16.8px;color:#8a8f9a;">20</div><div style="position:absolute;left:780px;top:819px;width:615px;height:391px;background:#fff;border-radius:8px;"></div><div style="position:absolute;white-space:pre;left:810px;top:845px;font-size:25px;line-height:30px;color:#111;font-weight:700;">Operators</div><div style="position:absolute;white-space:pre;left:1250px;top:851px;font-size:15px;line-height:18px;color:#222;font-weight:700;">Available</div><div style="position:absolute;white-space:pre;left:1325px;top:851.6px;font-size:14px;line-height:16.8px;color:#aab;">All  Off</div><div style="position:absolute;left:805px;top:893px;width:300px;height:36px;background:#f5f6fa;border-radius:6px;"></div><div style="position:absolute;white-space:pre;left:810px;top:960.2px;font-size:13px;line-height:15.6px;color:#9aa0ab;">OPERATOR</div><div style="position:absolute;white-space:pre;left:1015px;top:960.2px;font-size:13px;line-height:15.6px;color:#9aa0ab;">STATUS</div><div style="position:absolute;white-space:pre;left:1160px;top:960.2px;font-size:13px;line-height:15.6px;color:#9aa0ab;">TOTAL FLIGHTS</div><div style="position:absolute;white-space:pre;left:1310px;top:960.2px;font-size:13px;line-height:15.6px;color:#9aa0ab;">LOCATION</div><div style="position:absolute;left:810px;top:1012px;width:36px;height:36px;background:#5b4bc4;border-radius:7px;"></div><div style="position:absolute;white-space:pre;left:860px;top:1012.4px;font-size:16px;line-height:19.2px;color:#333;font-weight:700;">Alpha Romeo</div><div style="position:absolute;white-space:pre;left:860px;top:1032.8px;font-size:12px;line-height:14.4px;color:#9aa0ab;">DJI Matrice</div><div style="position:absolute;left:1014px;top:1020px;width:90px;height:20px;background:#4db86a;border-radius:4px;"></div><div style="position:absolute;white-space:pre;left:1180px;top:1021px;font-size:15px;line-height:18px;color:#666;">72</div><div style="position:absolute;white-space:pre;left:1310px;top:1021px;font-size:15px;line-height:18px;color:#666;">East SBY</div><div style="position:absolute;left:810px;top:1069px;width:36px;height:36px;background:#8a8a3a;border-radius:7px;"></div><div style="position:absolute;white-space:pre;left:860px;top:1069.4px;font-size:16px;line-height:19.2px;color:#333;font-weight:700;">Beta Flyer</div><div style="position:absolute;white-space:pre;left:860px;top:1089.8px;font-size:12px;line-height:14.4px;color:#9aa0ab;">DJI Matrice</div><div style="position:absolute;left:1014px;top:1077px;width:50px;height:20px;background:#f5a04a;border-radius:4px;"></div><div style="position:absolute;white-space:pre;left:1180px;top:1078px;font-size:15px;line-height:18px;color:#666;">36</div><div style="position:absolute;white-space:pre;left:1310px;top:1078px;font-size:15px;line-height:18px;color:#666;">East SBY</div><div style="position:absolute;left:810px;top:1126px;width:36px;height:36px;background:#5fc88a;border-radius:7px;"></div><div style="position:absolute;white-space:pre;left:860px;top:1126.4px;font-size:16px;line-height:19.2px;color:#333;font-weight:700;">Agility Transport</div><div style="position:absolute;white-space:pre;left:860px;top:1146.8px;font-size:12px;line-height:14.4px;color:#9aa0ab;">DJI Matrice</div><div style="position:absolute;left:1014px;top:1134px;width:90px;height:20px;background:#4db86a;border-radius:4px;"></div><div style="position:absolute;white-space:pre;left:1180px;top:1135px;font-size:15px;line-height:18px;color:#666;">144</div><div style="position:absolute;white-space:pre;left:1310px;top:1135px;font-size:15px;line-height:18px;color:#666;">East SBY</div></div></div>
<div class="fr" style="left:508.40px;top:178.50px;width:400px;height:1263px"><div style="position:absolute;left:0px;top:0px;width:400px;height:1263px;background:#fff;"></div><div class="fi"><div style="position:absolute;left:0px;top:0px;width:400px;height:1293px;background:#f5f6fa;"></div><div style="position:absolute;left:0px;top:0px;width:400px;height:95px;background:#fff;"></div><div style="position:absolute;white-space:pre;left:20px;top:13.6px;font-size:14px;line-height:16.8px;color:#222;font-weight:700;">9:41</div><div style="position:absolute;left:330px;top:16px;width:46px;height:12px;background:#444;border-radius:4px;"></div><div style="position:absolute;left:20px;top:50px;width:200px;height:32px;background:#f5f6fa;border-radius:8px;"></div><div style="position:absolute;white-space:pre;left:40px;top:58.2px;font-size:13px;line-height:15.6px;color:#b5bac4;">Search</div><div style="position:absolute;left:295px;top:50px;width:32px;height:32px;background:#f08a24;border-radius:6px;"></div><div style="position:absolute;white-space:pre;left:334px;top:53.4px;font-size:11px;line-height:13.2px;color:#333;font-weight:700;">Nate</div><div style="position:absolute;white-space:pre;left:334px;top:68px;font-size:10px;line-height:12px;color:#999;">Admin</div><div style="position:absolute;white-space:pre;left:20px;top:110.6px;font-size:24px;line-height:28.8px;color:#222;font-weight:700;">Overview</div><div style="position:absolute;left:20px;top:165px;width:180px;height:95px;background:#fff;border-radius:8px;"></div><div style="position:absolute;left:92px;top:146px;width:38px;height:38px;background:#ea5a94;border-radius:8px;"></div><div style="position:absolute;white-space:pre;left:80px;top:200.6px;font-size:24px;line-height:28.8px;color:#222;font-weight:700;width:60px;text-align:center">68</div><div style="position:absolute;white-space:pre;left:40px;top:235.4px;font-size:11px;line-height:13.2px;color:#9aa0ab;width:140px;text-align:center">Pending Request</div><div style="position:absolute;left:215px;top:165px;width:180px;height:95px;background:#fff;border-radius:8px;"></div><div style="position:absolute;left:287px;top:146px;width:38px;height:38px;background:#5aaef0;border-radius:8px;"></div><div style="position:absolute;white-space:pre;left:275px;top:200.6px;font-size:24px;line-height:28.8px;color:#222;font-weight:700;width:60px;text-align:center">54</div><div style="position:absolute;white-space:pre;left:235px;top:235.4px;font-size:11px;line-height:13.2px;color:#9aa0ab;width:140px;text-align:center">Pending Request</div><div style="position:absolute;left:16px;top:285px;width:364px;height:330px;background:#fff;border-radius:8px;"></div><div style="position:absolute;white-space:pre;left:34px;top:304.8px;font-size:17px;line-height:20.4px;color:#222;font-weight:700;">Delivery Request</div><div style="position:absolute;white-space:pre;left:250px;top:307.2px;font-size:13px;line-height:15.6px;color:#222;font-weight:700;">Today</div><div style="position:absolute;white-space:pre;left:295px;top:307.8px;font-size:12px;line-height:14.4px;color:#aab;">7d 30d</div><div style="position:absolute;white-space:pre;left:34px;top:344.6px;font-size:9px;line-height:10.8px;color:#9aa0ab;">NAME</div><div style="position:absolute;white-space:pre;left:150px;top:344.6px;font-size:9px;line-height:10.8px;color:#9aa0ab;">KG</div><div style="position:absolute;white-space:pre;left:225px;top:344.6px;font-size:9px;line-height:10.8px;color:#9aa0ab;">OPERATOR</div><div style="position:absolute;white-space:pre;left:320px;top:344.6px;font-size:9px;line-height:10.8px;color:#9aa0ab;">RCV</div><div style="position:absolute;white-space:pre;left:34px;top:372.4px;font-size:11px;line-height:13.2px;color:#333;font-weight:700;">Documents</div><div style="position:absolute;white-space:pre;left:34px;top:386px;font-size:10px;line-height:12px;color:#888;">Delivery</div><div style="position:absolute;left:150px;top:380px;width:22px;height:10px;background:#f39be8;border-radius:3px;"></div><div style="position:absolute;left:190px;top:379px;width:12px;height:12px;background:#c9cdd6;border-radius:3px;"></div><div style="position:absolute;left:225px;top:373px;width:24px;height:24px;background:#5b4bc4;border-radius:5px;"></div><div style="position:absolute;white-space:pre;left:256px;top:379px;font-size:10px;line-height:12px;color:#555;">Alpha</div><div style="position:absolute;white-space:pre;left:325px;top:379px;font-size:10px;line-height:12px;color:#777;">Ria</div><div style="position:absolute;white-space:pre;left:34px;top:406.4px;font-size:11px;line-height:13.2px;color:#333;font-weight:700;">Documents</div><div style="position:absolute;white-space:pre;left:34px;top:420px;font-size:10px;line-height:12px;color:#888;">Delivery</div><div style="position:absolute;left:150px;top:414px;width:22px;height:10px;background:#f39be8;border-radius:3px;"></div><div style="position:absolute;left:190px;top:413px;width:12px;height:12px;background:#c9cdd6;border-radius:3px;"></div><div style="position:absolute;left:225px;top:407px;width:24px;height:24px;background:#8a8a3a;border-radius:5px;"></div><div style="position:absolute;white-space:pre;left:256px;top:413px;font-size:10px;line-height:12px;color:#555;">Alpha</div><div style="position:absolute;white-space:pre;left:325px;top:413px;font-size:10px;line-height:12px;color:#777;">Ria</div><div style="position:absolute;white-space:pre;left:34px;top:440.4px;font-size:11px;line-height:13.2px;color:#333;font-weight:700;">Documents</div><div style="position:absolute;white-space:pre;left:34px;top:454px;font-size:10px;line-height:12px;color:#888;">Delivery</div><div style="position:absolute;left:150px;top:448px;width:22px;height:10px;background:#f39be8;border-radius:3px;"></div><div style="position:absolute;left:190px;top:447px;width:12px;height:12px;background:#c9cdd6;border-radius:3px;"></div><div style="position:absolute;left:225px;top:441px;width:24px;height:24px;background:#9c3cd0;border-radius:5px;"></div><div style="position:absolute;white-space:pre;left:256px;top:447px;font-size:10px;line-height:12px;color:#555;">Alpha</div><div style="position:absolute;white-space:pre;left:325px;top:447px;font-size:10px;line-height:12px;color:#777;">Ria</div><div style="position:absolute;white-space:pre;left:34px;top:474.4px;font-size:11px;line-height:13.2px;color:#333;font-weight:700;">Documents</div><div style="position:absolute;white-space:pre;left:34px;top:488px;font-size:10px;line-height:12px;color:#888;">Delivery</div><div style="position:absolute;left:150px;top:482px;width:22px;height:10px;background:#f39be8;border-radius:3px;"></div><div style="position:absolute;left:190px;top:481px;width:12px;height:12px;background:#c9cdd6;border-radius:3px;"></div><div style="position:absolute;left:225px;top:475px;width:24px;height:24px;background:#5fc88a;border-radius:5px;"></div><div style="position:absolute;white-space:pre;left:256px;top:481px;font-size:10px;line-height:12px;color:#555;">Alpha</div><div style="position:absolute;white-space:pre;left:325px;top:481px;font-size:10px;line-height:12px;color:#777;">Ria</div><div style="position:absolute;white-space:pre;left:34px;top:508.4px;font-size:11px;line-height:13.2px;color:#333;font-weight:700;">Documents</div><div style="position:absolute;white-space:pre;left:34px;top:522px;font-size:10px;line-height:12px;color:#888;">Delivery</div><div style="position:absolute;left:150px;top:516px;width:22px;height:10px;background:#f39be8;border-radius:3px;"></div><div style="position:absolute;left:190px;top:515px;width:12px;height:12px;background:#c9cdd6;border-radius:3px;"></div><div style="position:absolute;left:225px;top:509px;width:24px;height:24px;background:#5b4bc4;border-radius:5px;"></div><div style="position:absolute;white-space:pre;left:256px;top:515px;font-size:10px;line-height:12px;color:#555;">Alpha</div><div style="position:absolute;white-space:pre;left:325px;top:515px;font-size:10px;line-height:12px;color:#777;">Ria</div><div style="position:absolute;white-space:pre;left:34px;top:542.4px;font-size:11px;line-height:13.2px;color:#333;font-weight:700;">Documents</div><div style="position:absolute;white-space:pre;left:34px;top:556px;font-size:10px;line-height:12px;color:#888;">Delivery</div><div style="position:absolute;left:150px;top:550px;width:22px;height:10px;background:#f39be8;border-radius:3px;"></div><div style="position:absolute;left:190px;top:549px;width:12px;height:12px;background:#c9cdd6;border-radius:3px;"></div><div style="position:absolute;left:225px;top:543px;width:24px;height:24px;background:#8a8a3a;border-radius:5px;"></div><div style="position:absolute;white-space:pre;left:256px;top:549px;font-size:10px;line-height:12px;color:#555;">Alpha</div><div style="position:absolute;white-space:pre;left:325px;top:549px;font-size:10px;line-height:12px;color:#777;">Ria</div><div style="position:absolute;white-space:pre;left:34px;top:576.4px;font-size:11px;line-height:13.2px;color:#333;font-weight:700;">Documents</div><div style="position:absolute;white-space:pre;left:34px;top:590px;font-size:10px;line-height:12px;color:#888;">Delivery</div><div style="position:absolute;left:150px;top:584px;width:22px;height:10px;background:#f39be8;border-radius:3px;"></div><div style="position:absolute;left:190px;top:583px;width:12px;height:12px;background:#c9cdd6;border-radius:3px;"></div><div style="position:absolute;left:225px;top:577px;width:24px;height:24px;background:#9c3cd0;border-radius:5px;"></div><div style="position:absolute;white-space:pre;left:256px;top:583px;font-size:10px;line-height:12px;color:#555;">Alpha</div><div style="position:absolute;white-space:pre;left:325px;top:583px;font-size:10px;line-height:12px;color:#777;">Ria</div><div style="position:absolute;left:360px;top:370px;width:5px;height:80px;background:#9a9fa8;border-radius:2px;"></div><div style="position:absolute;left:16px;top:650px;width:364px;height:125px;background:#fff;border-radius:8px;"></div><div style="position:absolute;white-space:pre;left:16px;top:660.2px;font-size:13px;line-height:15.6px;color:#222;font-weight:700;width:364px;text-align:center">Weather Condition</div><div style="position:absolute;white-space:pre;left:70px;top:699.4px;font-size:26px;line-height:31.2px;color:#222;font-weight:700;">27°</div><div style="position:absolute;white-space:pre;left:50px;top:739px;font-size:10px;line-height:12px;color:#9aa0ab;">Surabaya</div><div style="position:absolute;left:205px;top:690px;width:46px;height:46px;background:#f8c63a;border-radius:23px;"></div><div style="position:absolute;left:160px;top:715px;width:84px;height:36px;background:#cfe3fb;border-radius:18px;"></div><div style="position:absolute;left:175px;top:700px;width:44px;height:44px;background:#d6e8fc;border-radius:22px;"></div><div style="position:absolute;left:290px;top:695px;width:12px;height:12px;background:#e3e6ec;border-radius:3px;"></div><div style="position:absolute;left:290px;top:717px;width:12px;height:12px;background:#e3e6ec;border-radius:3px;"></div><div style="position:absolute;left:290px;top:739px;width:12px;height:12px;background:#e3e6ec;border-radius:3px;"></div><div style="position:absolute;left:316px;top:695px;width:12px;height:12px;background:#e3e6ec;border-radius:3px;"></div><div style="position:absolute;left:316px;top:717px;width:12px;height:12px;background:#e3e6ec;border-radius:3px;"></div><div style="position:absolute;left:316px;top:739px;width:12px;height:12px;background:#e3e6ec;border-radius:3px;"></div><div style="position:absolute;left:342px;top:695px;width:12px;height:12px;background:#e3e6ec;border-radius:3px;"></div><div style="position:absolute;left:342px;top:717px;width:12px;height:12px;background:#e3e6ec;border-radius:3px;"></div><div style="position:absolute;left:342px;top:739px;width:12px;height:12px;background:#e3e6ec;border-radius:3px;"></div><div style="position:absolute;left:16px;top:800px;width:364px;height:172px;background:#fff;border-radius:8px;"></div><div style="position:absolute;white-space:pre;left:34px;top:816.4px;font-size:16px;line-height:19.2px;color:#222;font-weight:700;">Reports</div><div style="position:absolute;left:230px;top:816px;width:60px;height:20px;background:#f5f6fa;border-radius:5px;"></div><div style="position:absolute;white-space:pre;left:300px;top:819.4px;font-size:11px;line-height:13.2px;color:#aab;">7d 30d</div><div style="position:absolute;white-space:pre;left:34px;top:849.6px;font-size:9px;line-height:10.8px;color:#9aa0ab;">TOTAL</div><div style="position:absolute;left:95px;top:848px;width:50px;height:16px;background:#e9ecf2;border-radius:4px;"></div><div style="position:absolute;left:235px;top:846px;width:40px;height:18px;background:#444;border-radius:4px;"></div><svg style="position:absolute;left:34px;top:875px" width="330" height="60" viewBox="0 0 330 60"><polyline points="0,35 40,25 80,40 130,20 165,42 200,15 250,30 290,22 330,28" fill="none" stroke="#aacbf5" stroke-width="5"/></svg><div style="position:absolute;left:196px;top:880px;width:6px;height:60px;background:#c7dbf8;"></div><div style="position:absolute;left:182px;top:903px;width:34px;height:14px;background:#5b8de8;border-radius:5px;"></div><div style="position:absolute;white-space:pre;left:38px;top:949px;font-size:10px;line-height:12px;color:#8a8f9a;">14</div><div style="position:absolute;white-space:pre;left:86px;top:949px;font-size:10px;line-height:12px;color:#8a8f9a;">15</div><div style="position:absolute;white-space:pre;left:134px;top:949px;font-size:10px;line-height:12px;color:#8a8f9a;">16</div><div style="position:absolute;white-space:pre;left:182px;top:949px;font-size:10px;line-height:12px;color:#8a8f9a;">17</div><div style="position:absolute;white-space:pre;left:230px;top:949px;font-size:10px;line-height:12px;color:#8a8f9a;">18</div><div style="position:absolute;white-space:pre;left:278px;top:949px;font-size:10px;line-height:12px;color:#8a8f9a;">19</div><div style="position:absolute;white-space:pre;left:326px;top:949px;font-size:10px;line-height:12px;color:#8a8f9a;">20</div><div style="position:absolute;left:16px;top:990px;width:364px;height:185px;background:#fff;border-radius:8px;"></div><div style="position:absolute;white-space:pre;left:34px;top:1006.4px;font-size:16px;line-height:19.2px;color:#222;font-weight:700;">Operators</div><div style="position:absolute;left:260px;top:1006px;width:60px;height:20px;background:#f5f6fa;border-radius:5px;"></div><div style="position:absolute;white-space:pre;left:330px;top:1009.4px;font-size:11px;line-height:13.2px;color:#aab;">All</div><div style="position:absolute;white-space:pre;left:34px;top:1044.6px;font-size:9px;line-height:10.8px;color:#9aa0ab;">OPERATOR</div><div style="position:absolute;white-space:pre;left:160px;top:1044.6px;font-size:9px;line-height:10.8px;color:#9aa0ab;">STATUS</div><div style="position:absolute;white-space:pre;left:240px;top:1044.6px;font-size:9px;line-height:10.8px;color:#9aa0ab;">FLIGHTS</div><div style="position:absolute;white-space:pre;left:320px;top:1044.6px;font-size:9px;line-height:10.8px;color:#9aa0ab;">LOC</div><div style="position:absolute;left:34px;top:1074px;width:22px;height:22px;background:#5b4bc4;border-radius:5px;"></div><div style="position:absolute;white-space:pre;left:64px;top:1074px;font-size:10px;line-height:12px;color:#333;font-weight:700;">Alpha Romeo</div><div style="position:absolute;white-space:pre;left:64px;top:1086.6px;font-size:9px;line-height:10.8px;color:#999;">DJI</div><div style="position:absolute;left:160px;top:1079px;width:44px;height:12px;background:#4db86a;border-radius:3px;"></div><div style="position:absolute;white-space:pre;left:245px;top:1079px;font-size:10px;line-height:12px;color:#666;">72</div><div style="position:absolute;white-space:pre;left:320px;top:1079px;font-size:10px;line-height:12px;color:#444;font-weight:700;">SBY</div><div style="position:absolute;left:34px;top:1106px;width:22px;height:22px;background:#8a8a3a;border-radius:5px;"></div><div style="position:absolute;white-space:pre;left:64px;top:1106px;font-size:10px;line-height:12px;color:#333;font-weight:700;">Alpha Romeo</div><div style="position:absolute;white-space:pre;left:64px;top:1118.6px;font-size:9px;line-height:10.8px;color:#999;">DJI</div><div style="position:absolute;left:160px;top:1111px;width:26px;height:12px;background:#f5a04a;border-radius:3px;"></div><div style="position:absolute;white-space:pre;left:245px;top:1111px;font-size:10px;line-height:12px;color:#666;">72</div><div style="position:absolute;white-space:pre;left:320px;top:1111px;font-size:10px;line-height:12px;color:#444;font-weight:700;">SBY</div><div style="position:absolute;left:34px;top:1138px;width:22px;height:22px;background:#5fc88a;border-radius:5px;"></div><div style="position:absolute;white-space:pre;left:64px;top:1138px;font-size:10px;line-height:12px;color:#333;font-weight:700;">Alpha Romeo</div><div style="position:absolute;white-space:pre;left:64px;top:1150.6px;font-size:9px;line-height:10.8px;color:#999;">DJI</div><div style="position:absolute;left:160px;top:1143px;width:44px;height:12px;background:#4db86a;border-radius:3px;"></div><div style="position:absolute;white-space:pre;left:245px;top:1143px;font-size:10px;line-height:12px;color:#666;">72</div><div style="position:absolute;white-space:pre;left:320px;top:1143px;font-size:10px;line-height:12px;color:#444;font-weight:700;">SBY</div><div style="position:absolute;left:0px;top:1190px;width:400px;height:103px;background:#417de1;"></div><div style="position:absolute;left:0px;top:1190px;width:80px;height:103px;background:rgba(255,255,255,.9);"></div><div style="position:absolute;left:28px;top:1215px;width:24px;height:24px;background:#417de1;border-radius:5px;"></div><div style="position:absolute;left:130px;top:1215px;width:24px;height:24px;background:rgba(255,255,255,.8);border-radius:6px;"></div><div style="position:absolute;left:225px;top:1215px;width:24px;height:24px;background:rgba(255,255,255,.8);border-radius:6px;"></div><div style="position:absolute;left:320px;top:1215px;width:24px;height:24px;background:rgba(255,255,255,.8);border-radius:6px;"></div></div></div>
<div class="fr" style="left:245.70px;top:303.30px;width:1437px;height:1031px"><div style="position:absolute;left:0px;top:0px;width:1437px;height:1031px;background:#fff;"></div><div class="fi"><div style="position:absolute;left:0px;top:0px;width:1440px;height:1061px;background:#f5f6fa;"></div><div style="position:absolute;left:0px;top:0px;width:72px;height:1061px;background:#417de1;"></div><div style="position:absolute;left:20px;top:18px;width:32px;height:32px;background:#fff;border-radius:6px;opacity:.9"></div><div style="position:absolute;left:0px;top:158px;width:72px;height:40px;background:rgba(255,255,255,.92);"></div><div style="position:absolute;left:24px;top:166px;width:24px;height:24px;background:#417de1;border-radius:4px;"></div><div style="position:absolute;left:24px;top:106px;width:24px;height:24px;background:rgba(255,255,255,.75);border-radius:5px;"></div><div style="position:absolute;left:24px;top:224px;width:24px;height:24px;background:rgba(255,255,255,.75);border-radius:5px;"></div><div style="position:absolute;left:24px;top:275px;width:24px;height:24px;background:rgba(255,255,255,.75);border-radius:5px;"></div><div style="position:absolute;left:24px;top:320px;width:24px;height:24px;background:rgba(255,255,255,.75);border-radius:5px;"></div><div style="position:absolute;left:72px;top:0px;width:1368px;height:72px;background:#fff;"></div><div style="position:absolute;white-space:pre;left:600px;top:25.2px;font-size:18px;line-height:21.6px;color:#b0b4bd;">Search</div><div style="position:absolute;left:570px;top:26px;width:20px;height:20px;background:#c8ccd4;border-radius:10px;"></div><div style="position:absolute;left:1218px;top:26px;width:22px;height:22px;background:#c9cdd6;border-radius:5px;"></div><div style="position:absolute;left:1268px;top:20px;width:34px;height:34px;background:#f08a24;border-radius:6px;"></div><div style="position:absolute;white-space:pre;left:1312px;top:25.2px;font-size:18px;line-height:21.6px;color:#333;font-weight:700;">Nate Ria</div><div style="position:absolute;left:1400px;top:32px;width:12px;height:8px;background:#aaa;border-radius:2px;"></div><div style="position:absolute;white-space:pre;left:130px;top:92.2px;font-size:28px;line-height:33.6px;color:#111;font-weight:700;">Delivery Request</div><div style="position:absolute;left:134px;top:154px;width:849px;height:826px;background:#fff;border-radius:8px;"></div><div style="position:absolute;white-space:pre;left:175px;top:177.2px;font-size:18px;line-height:21.6px;color:#222;font-weight:700;">Today</div><div style="position:absolute;left:170px;top:206px;width:60px;height:4px;background:#417de1;border-radius:2px;"></div><div style="position:absolute;white-space:pre;left:305px;top:177.8px;font-size:17px;line-height:20.4px;color:#aab;">Tomorrow</div><div style="position:absolute;white-space:pre;left:425px;top:177.8px;font-size:17px;line-height:20.4px;color:#aab;">Completed (12)</div><div style="position:absolute;white-space:pre;left:580px;top:177.8px;font-size:17px;line-height:20.4px;color:#aab;">Cancelled (04)</div><div style="position:absolute;left:134px;top:214px;width:849px;height:2px;background:#eef0f4;"></div><div style="position:absolute;left:165px;top:234px;width:300px;height:36px;background:#f5f6fa;border-radius:6px;"></div><div style="position:absolute;white-space:pre;left:190px;top:243px;font-size:15px;line-height:18px;color:#b5bac4;">Search request</div><div style="position:absolute;left:690px;top:234px;width:85px;height:36px;background:#f5f6fa;border-radius:6px;"></div><div style="position:absolute;left:790px;top:234px;width:85px;height:36px;background:#f5f6fa;border-radius:6px;"></div><div style="position:absolute;white-space:pre;left:170px;top:294.2px;font-size:13px;line-height:15.6px;color:#9aa0ab;">REQUEST NAME</div><div style="position:absolute;white-space:pre;left:480px;top:294.2px;font-size:13px;line-height:15.6px;color:#9aa0ab;">WEIGHT</div><div style="position:absolute;white-space:pre;left:590px;top:294.2px;font-size:13px;line-height:15.6px;color:#9aa0ab;">REQUEST TIME</div><div style="position:absolute;white-space:pre;left:830px;top:294.2px;font-size:13px;line-height:15.6px;color:#9aa0ab;">RECEIVER</div><div style="position:absolute;white-space:pre;left:170px;top:344.8px;font-size:17px;line-height:20.4px;color:#333;font-weight:700;">Documents Delivery</div><div style="position:absolute;left:492px;top:349px;width:38px;height:12px;background:#f4a6ea;border-radius:4px;"></div><div style="position:absolute;left:596px;top:345px;width:20px;height:20px;background:#c9cdd6;border-radius:4px;"></div><div style="position:absolute;white-space:pre;left:624px;top:346px;font-size:15px;line-height:18px;color:#9aa0ab;">Aug 21, 09:30</div><div style="position:absolute;white-space:pre;left:836px;top:346px;font-size:15px;line-height:18px;color:#777;">Ria</div><div style="position:absolute;left:160px;top:382px;width:800px;height:1.5px;background:#f1f2f5;"></div><div style="position:absolute;white-space:pre;left:170px;top:399.8px;font-size:17px;line-height:20.4px;color:#333;font-weight:700;">Food Delivery</div><div style="position:absolute;left:492px;top:404px;width:38px;height:12px;background:#f4a6ea;border-radius:4px;"></div><div style="position:absolute;left:596px;top:400px;width:20px;height:20px;background:#c9cdd6;border-radius:4px;"></div><div style="position:absolute;white-space:pre;left:624px;top:401px;font-size:15px;line-height:18px;color:#9aa0ab;">Aug 21, 09:30</div><div style="position:absolute;white-space:pre;left:836px;top:401px;font-size:15px;line-height:18px;color:#777;">Ria</div><div style="position:absolute;left:160px;top:437px;width:800px;height:1.5px;background:#f1f2f5;"></div><div style="position:absolute;white-space:pre;left:170px;top:454.8px;font-size:17px;line-height:20.4px;color:#3f7be0;font-weight:700;">Medicine Delivery</div><div style="position:absolute;left:492px;top:459px;width:38px;height:12px;background:#f4a6ea;border-radius:4px;"></div><div style="position:absolute;left:596px;top:455px;width:20px;height:20px;background:#c9cdd6;border-radius:4px;"></div><div style="position:absolute;white-space:pre;left:624px;top:456px;font-size:15px;line-height:18px;color:#9aa0ab;">Aug 21, 09:30</div><div style="position:absolute;white-space:pre;left:836px;top:456px;font-size:15px;line-height:18px;color:#777;">Ria</div><div style="position:absolute;left:160px;top:492px;width:800px;height:1.5px;background:#f1f2f5;"></div><div style="position:absolute;white-space:pre;left:170px;top:509.8px;font-size:17px;line-height:20.4px;color:#333;font-weight:700;">Parcel Package</div><div style="position:absolute;left:492px;top:514px;width:38px;height:12px;background:#f4a6ea;border-radius:4px;"></div><div style="position:absolute;left:596px;top:510px;width:20px;height:20px;background:#c9cdd6;border-radius:4px;"></div><div style="position:absolute;white-space:pre;left:624px;top:511px;font-size:15px;line-height:18px;color:#9aa0ab;">Aug 21, 09:30</div><div style="position:absolute;white-space:pre;left:836px;top:511px;font-size:15px;line-height:18px;color:#777;">Ria</div><div style="position:absolute;left:160px;top:547px;width:800px;height:1.5px;background:#f1f2f5;"></div><div style="position:absolute;white-space:pre;left:170px;top:564.8px;font-size:17px;line-height:20.4px;color:#333;font-weight:700;">Documents Delivery</div><div style="position:absolute;left:492px;top:569px;width:38px;height:12px;background:#f4a6ea;border-radius:4px;"></div><div style="position:absolute;left:596px;top:565px;width:20px;height:20px;background:#c9cdd6;border-radius:4px;"></div><div style="position:absolute;white-space:pre;left:624px;top:566px;font-size:15px;line-height:18px;color:#9aa0ab;">Aug 21, 09:30</div><div style="position:absolute;white-space:pre;left:836px;top:566px;font-size:15px;line-height:18px;color:#777;">Ria</div><div style="position:absolute;left:160px;top:602px;width:800px;height:1.5px;background:#f1f2f5;"></div><div style="position:absolute;white-space:pre;left:170px;top:619.8px;font-size:17px;line-height:20.4px;color:#333;font-weight:700;">Snack Delivery</div><div style="position:absolute;left:492px;top:624px;width:38px;height:12px;background:#f4a6ea;border-radius:4px;"></div><div style="position:absolute;left:596px;top:620px;width:20px;height:20px;background:#c9cdd6;border-radius:4px;"></div><div style="position:absolute;white-space:pre;left:624px;top:621px;font-size:15px;line-height:18px;color:#9aa0ab;">Aug 21, 09:30</div><div style="position:absolute;white-space:pre;left:836px;top:621px;font-size:15px;line-height:18px;color:#777;">Ria</div><div style="position:absolute;left:160px;top:657px;width:800px;height:1.5px;background:#f1f2f5;"></div><div style="position:absolute;white-space:pre;left:170px;top:674.8px;font-size:17px;line-height:20.4px;color:#333;font-weight:700;">Gift Box Delivery</div><div style="position:absolute;left:492px;top:679px;width:38px;height:12px;background:#f4a6ea;border-radius:4px;"></div><div style="position:absolute;left:596px;top:675px;width:20px;height:20px;background:#c9cdd6;border-radius:4px;"></div><div style="position:absolute;white-space:pre;left:624px;top:676px;font-size:15px;line-height:18px;color:#9aa0ab;">Aug 21, 09:30</div><div style="position:absolute;white-space:pre;left:836px;top:676px;font-size:15px;line-height:18px;color:#777;">Ria</div><div style="position:absolute;left:160px;top:712px;width:800px;height:1.5px;background:#f1f2f5;"></div><div style="position:absolute;white-space:pre;left:170px;top:729.8px;font-size:17px;line-height:20.4px;color:#333;font-weight:700;">Parcel Package</div><div style="position:absolute;left:492px;top:734px;width:38px;height:12px;background:#f4a6ea;border-radius:4px;"></div><div style="position:absolute;left:596px;top:730px;width:20px;height:20px;background:#c9cdd6;border-radius:4px;"></div><div style="position:absolute;white-space:pre;left:624px;top:731px;font-size:15px;line-height:18px;color:#9aa0ab;">Aug 21, 09:30</div><div style="position:absolute;white-space:pre;left:836px;top:731px;font-size:15px;line-height:18px;color:#777;">Ria</div><div style="position:absolute;left:160px;top:767px;width:800px;height:1.5px;background:#f1f2f5;"></div><div style="position:absolute;white-space:pre;left:170px;top:784.8px;font-size:17px;line-height:20.4px;color:#333;font-weight:700;">Documents Delivery</div><div style="position:absolute;left:492px;top:789px;width:38px;height:12px;background:#f4a6ea;border-radius:4px;"></div><div style="position:absolute;left:596px;top:785px;width:20px;height:20px;background:#c9cdd6;border-radius:4px;"></div><div style="position:absolute;white-space:pre;left:624px;top:786px;font-size:15px;line-height:18px;color:#9aa0ab;">Aug 21, 09:30</div><div style="position:absolute;white-space:pre;left:836px;top:786px;font-size:15px;line-height:18px;color:#777;">Ria</div><div style="position:absolute;left:160px;top:822px;width:800px;height:1.5px;background:#f1f2f5;"></div><div style="position:absolute;white-space:pre;left:170px;top:839.8px;font-size:17px;line-height:20.4px;color:#333;font-weight:700;">Food Delivery</div><div style="position:absolute;left:492px;top:844px;width:38px;height:12px;background:#f4a6ea;border-radius:4px;"></div><div style="position:absolute;left:596px;top:840px;width:20px;height:20px;background:#c9cdd6;border-radius:4px;"></div><div style="position:absolute;white-space:pre;left:624px;top:841px;font-size:15px;line-height:18px;color:#9aa0ab;">Aug 21, 09:30</div><div style="position:absolute;white-space:pre;left:836px;top:841px;font-size:15px;line-height:18px;color:#777;">Ria</div><div style="position:absolute;left:160px;top:877px;width:800px;height:1.5px;background:#f1f2f5;"></div><div style="position:absolute;white-space:pre;left:170px;top:894.8px;font-size:17px;line-height:20.4px;color:#333;font-weight:700;">Medicine Delivery</div><div style="position:absolute;left:492px;top:899px;width:38px;height:12px;background:#f4a6ea;border-radius:4px;"></div><div style="position:absolute;left:596px;top:895px;width:20px;height:20px;background:#c9cdd6;border-radius:4px;"></div><div style="position:absolute;white-space:pre;left:624px;top:896px;font-size:15px;line-height:18px;color:#9aa0ab;">Aug 21, 09:30</div><div style="position:absolute;white-space:pre;left:836px;top:896px;font-size:15px;line-height:18px;color:#777;">Ria</div><div style="position:absolute;left:160px;top:932px;width:800px;height:1.5px;background:#f1f2f5;"></div><div style="position:absolute;left:1039px;top:154px;width:380px;height:826px;background:#fff;border-radius:8px;"></div><div style="position:absolute;white-space:pre;left:1080px;top:191.4px;font-size:16px;line-height:19.2px;color:#222;font-weight:700;">#DR-1</div><div style="position:absolute;left:1150px;top:190px;width:106px;height:22px;background:#f5973a;border-radius:5px;"></div><div style="position:absolute;left:1083px;top:233px;width:52px;height:52px;background:#c9c64a;border-radius:8px;"></div><div style="position:absolute;white-space:pre;left:1150px;top:247px;font-size:20px;line-height:24px;color:#222;font-weight:700;">Alpha Flyer Industries</div><div style="position:absolute;left:1077px;top:328px;width:34px;height:34px;background:#d9534f;border-radius:17px;"></div><div style="position:absolute;white-space:pre;left:1120px;top:330.8px;font-size:12px;line-height:14.4px;color:#9aa0ab;">Origin</div><div style="position:absolute;white-space:pre;left:1120px;top:344.6px;font-size:14px;line-height:16.8px;color:#444;">Gubeng</div><div style="position:absolute;left:1234px;top:328px;width:34px;height:34px;background:#d9534f;border-radius:17px;"></div><div style="position:absolute;white-space:pre;left:1277px;top:330.8px;font-size:12px;line-height:14.4px;color:#9aa0ab;">Destination</div><div style="position:absolute;white-space:pre;left:1277px;top:344.6px;font-size:14px;line-height:16.8px;color:#444;">Wiyung</div><div style="position:absolute;left:1078px;top:410px;width:20px;height:20px;background:#555;border-radius:4px;"></div><div style="position:absolute;white-space:pre;left:1108px;top:409.8px;font-size:17px;line-height:20.4px;color:#222;font-weight:700;">Delivery</div><div style="position:absolute;white-space:pre;left:1080px;top:463.6px;font-size:14px;line-height:16.8px;color:#9aa0ab;">Request Name</div><div style="position:absolute;white-space:pre;left:1380px;top:463.6px;font-size:14px;line-height:16.8px;color:#333;font-weight:700;transform:translateX(-100%)">Documents Delivery</div><div style="position:absolute;white-space:pre;left:1080px;top:513.6px;font-size:14px;line-height:16.8px;color:#9aa0ab;">Request Time</div><div style="position:absolute;white-space:pre;left:1380px;top:513.6px;font-size:14px;line-height:16.8px;color:#333;font-weight:700;transform:translateX(-100%)">Aug 21, 09:30 AM</div><div style="position:absolute;white-space:pre;left:1080px;top:563.6px;font-size:14px;line-height:16.8px;color:#9aa0ab;">Weight</div><div style="position:absolute;white-space:pre;left:1380px;top:563.6px;font-size:14px;line-height:16.8px;color:#333;font-weight:700;transform:translateX(-100%)">0.8 kg</div><div style="position:absolute;white-space:pre;left:1080px;top:613.6px;font-size:14px;line-height:16.8px;color:#9aa0ab;">Dimension</div><div style="position:absolute;white-space:pre;left:1380px;top:613.6px;font-size:14px;line-height:16.8px;color:#333;font-weight:700;transform:translateX(-100%)">20 x 12 x 4</div><div style="position:absolute;white-space:pre;left:1080px;top:663.6px;font-size:14px;line-height:16.8px;color:#9aa0ab;">Receiver</div><div style="position:absolute;white-space:pre;left:1380px;top:663.6px;font-size:14px;line-height:16.8px;color:#333;font-weight:700;transform:translateX(-100%)">Ria Anggraini</div><div style="position:absolute;left:1078px;top:745px;width:20px;height:20px;background:#555;border-radius:4px;"></div><div style="position:absolute;white-space:pre;left:1108px;top:744.8px;font-size:17px;line-height:20.4px;color:#222;font-weight:700;">Note</div><div style="position:absolute;white-space:pre;left:1080px;top:786.6px;font-size:14px;line-height:16.8px;color:#9aa0ab;">Please handle with care, fragile.</div><div style="position:absolute;left:1085px;top:890px;width:115px;height:42px;background:#fff;border-radius:8px;border:2px solid #d5d9e0"></div><div style="position:absolute;white-space:pre;left:1117px;top:902px;font-size:15px;line-height:18px;color:#777;">Cancel</div><div style="position:absolute;left:1255px;top:890px;width:130px;height:44px;background:#417de1;border-radius:8px;"></div><div style="position:absolute;white-space:pre;left:1285px;top:902.4px;font-size:16px;line-height:19.2px;color:#fff;font-weight:700;">Assign</div></div></div>
<div class="fr" style="left:372.10px;top:303.30px;width:1437px;height:1031px"><div style="position:absolute;left:0px;top:0px;width:1437px;height:1031px;background:#fff;"></div><div class="fi"><div style="position:absolute;left:0px;top:0px;width:1440px;height:1061px;background:#f5f6fa;"></div><div style="position:absolute;left:0px;top:0px;width:72px;height:1061px;background:#417de1;"></div><div style="position:absolute;left:20px;top:18px;width:32px;height:32px;background:#fff;border-radius:6px;opacity:.9"></div><div style="position:absolute;left:0px;top:158px;width:72px;height:40px;background:rgba(255,255,255,.92);"></div><div style="position:absolute;left:24px;top:166px;width:24px;height:24px;background:#417de1;border-radius:4px;"></div><div style="position:absolute;left:24px;top:106px;width:24px;height:24px;background:rgba(255,255,255,.75);border-radius:5px;"></div><div style="position:absolute;left:24px;top:224px;width:24px;height:24px;background:rgba(255,255,255,.75);border-radius:5px;"></div><div style="position:absolute;left:24px;top:275px;width:24px;height:24px;background:rgba(255,255,255,.75);border-radius:5px;"></div><div style="position:absolute;left:24px;top:320px;width:24px;height:24px;background:rgba(255,255,255,.75);border-radius:5px;"></div><div style="position:absolute;left:72px;top:0px;width:1368px;height:72px;background:#fff;"></div><div style="position:absolute;white-space:pre;left:600px;top:25.2px;font-size:18px;line-height:21.6px;color:#b0b4bd;">Search</div><div style="position:absolute;left:570px;top:26px;width:20px;height:20px;background:#c8ccd4;border-radius:10px;"></div><div style="position:absolute;left:1218px;top:26px;width:22px;height:22px;background:#c9cdd6;border-radius:5px;"></div><div style="position:absolute;left:1268px;top:20px;width:34px;height:34px;background:#f08a24;border-radius:6px;"></div><div style="position:absolute;white-space:pre;left:1312px;top:25.2px;font-size:18px;line-height:21.6px;color:#333;font-weight:700;">Nate Ria</div><div style="position:absolute;left:1400px;top:32px;width:12px;height:8px;background:#aaa;border-radius:2px;"></div><div style="position:absolute;white-space:pre;left:130px;top:92.2px;font-size:28px;line-height:33.6px;color:#111;font-weight:700;">Delivery Request</div><div style="position:absolute;left:134px;top:154px;width:849px;height:826px;background:#fff;border-radius:8px;"></div><div style="position:absolute;white-space:pre;left:175px;top:177.2px;font-size:18px;line-height:21.6px;color:#222;font-weight:700;">Today</div><div style="position:absolute;left:170px;top:206px;width:60px;height:4px;background:#417de1;border-radius:2px;"></div><div style="position:absolute;white-space:pre;left:305px;top:177.8px;font-size:17px;line-height:20.4px;color:#aab;">Tomorrow</div><div style="position:absolute;white-space:pre;left:425px;top:177.8px;font-size:17px;line-height:20.4px;color:#aab;">Completed (12)</div><div style="position:absolute;white-space:pre;left:580px;top:177.8px;font-size:17px;line-height:20.4px;color:#aab;">Cancelled (04)</div><div style="position:absolute;left:134px;top:214px;width:849px;height:2px;background:#eef0f4;"></div><div style="position:absolute;left:165px;top:234px;width:300px;height:36px;background:#f5f6fa;border-radius:6px;"></div><div style="position:absolute;white-space:pre;left:190px;top:243px;font-size:15px;line-height:18px;color:#b5bac4;">Search request</div><div style="position:absolute;left:690px;top:234px;width:85px;height:36px;background:#f5f6fa;border-radius:6px;"></div><div style="position:absolute;left:790px;top:234px;width:85px;height:36px;background:#f5f6fa;border-radius:6px;"></div><div style="position:absolute;white-space:pre;left:170px;top:294.2px;font-size:13px;line-height:15.6px;color:#9aa0ab;">REQUEST NAME</div><div style="position:absolute;white-space:pre;left:480px;top:294.2px;font-size:13px;line-height:15.6px;color:#9aa0ab;">WEIGHT</div><div style="position:absolute;white-space:pre;left:590px;top:294.2px;font-size:13px;line-height:15.6px;color:#9aa0ab;">REQUEST TIME</div><div style="position:absolute;white-space:pre;left:830px;top:294.2px;font-size:13px;line-height:15.6px;color:#9aa0ab;">RECEIVER</div><div style="position:absolute;white-space:pre;left:170px;top:344.8px;font-size:17px;line-height:20.4px;color:#333;font-weight:700;">Documents Delivery</div><div style="position:absolute;left:492px;top:349px;width:38px;height:12px;background:#f4a6ea;border-radius:4px;"></div><div style="position:absolute;left:596px;top:345px;width:20px;height:20px;background:#c9cdd6;border-radius:4px;"></div><div style="position:absolute;white-space:pre;left:624px;top:346px;font-size:15px;line-height:18px;color:#9aa0ab;">Aug 21, 09:30</div><div style="position:absolute;white-space:pre;left:836px;top:346px;font-size:15px;line-height:18px;color:#777;">Ria</div><div style="position:absolute;left:160px;top:382px;width:800px;height:1.5px;background:#f1f2f5;"></div><div style="position:absolute;white-space:pre;left:170px;top:399.8px;font-size:17px;line-height:20.4px;color:#333;font-weight:700;">Food Delivery</div><div style="position:absolute;left:492px;top:404px;width:38px;height:12px;background:#f4a6ea;border-radius:4px;"></div><div style="position:absolute;left:596px;top:400px;width:20px;height:20px;background:#c9cdd6;border-radius:4px;"></div><div style="position:absolute;white-space:pre;left:624px;top:401px;font-size:15px;line-height:18px;color:#9aa0ab;">Aug 21, 09:30</div><div style="position:absolute;white-space:pre;left:836px;top:401px;font-size:15px;line-height:18px;color:#777;">Ria</div><div style="position:absolute;left:160px;top:437px;width:800px;height:1.5px;background:#f1f2f5;"></div><div style="position:absolute;white-space:pre;left:170px;top:454.8px;font-size:17px;line-height:20.4px;color:#3f7be0;font-weight:700;">Medicine Delivery</div><div style="position:absolute;left:492px;top:459px;width:38px;height:12px;background:#f4a6ea;border-radius:4px;"></div><div style="position:absolute;left:596px;top:455px;width:20px;height:20px;background:#c9cdd6;border-radius:4px;"></div><div style="position:absolute;white-space:pre;left:624px;top:456px;font-size:15px;line-height:18px;color:#9aa0ab;">Aug 21, 09:30</div><div style="position:absolute;white-space:pre;left:836px;top:456px;font-size:15px;line-height:18px;color:#777;">Ria</div><div style="position:absolute;left:160px;top:492px;width:800px;height:1.5px;background:#f1f2f5;"></div><div style="position:absolute;white-space:pre;left:170px;top:509.8px;font-size:17px;line-height:20.4px;color:#333;font-weight:700;">Parcel Package</div><div style="position:absolute;left:492px;top:514px;width:38px;height:12px;background:#f4a6ea;border-radius:4px;"></div><div style="position:absolute;left:596px;top:510px;width:20px;height:20px;background:#c9cdd6;border-radius:4px;"></div><div style="position:absolute;white-space:pre;left:624px;top:511px;font-size:15px;line-height:18px;color:#9aa0ab;">Aug 21, 09:30</div><div style="position:absolute;white-space:pre;left:836px;top:511px;font-size:15px;line-height:18px;color:#777;">Ria</div><div style="position:absolute;left:160px;top:547px;width:800px;height:1.5px;background:#f1f2f5;"></div><div style="position:absolute;white-space:pre;left:170px;top:564.8px;font-size:17px;line-height:20.4px;color:#333;font-weight:700;">Documents Delivery</div><div style="position:absolute;left:492px;top:569px;width:38px;height:12px;background:#f4a6ea;border-radius:4px;"></div><div style="position:absolute;left:596px;top:565px;width:20px;height:20px;background:#c9cdd6;border-radius:4px;"></div><div style="position:absolute;white-space:pre;left:624px;top:566px;font-size:15px;line-height:18px;color:#9aa0ab;">Aug 21, 09:30</div><div style="position:absolute;white-space:pre;left:836px;top:566px;font-size:15px;line-height:18px;color:#777;">Ria</div><div style="position:absolute;left:160px;top:602px;width:800px;height:1.5px;background:#f1f2f5;"></div><div style="position:absolute;white-space:pre;left:170px;top:619.8px;font-size:17px;line-height:20.4px;color:#333;font-weight:700;">Snack Delivery</div><div style="position:absolute;left:492px;top:624px;width:38px;height:12px;background:#f4a6ea;border-radius:4px;"></div><div style="position:absolute;left:596px;top:620px;width:20px;height:20px;background:#c9cdd6;border-radius:4px;"></div><div style="position:absolute;white-space:pre;left:624px;top:621px;font-size:15px;line-height:18px;color:#9aa0ab;">Aug 21, 09:30</div><div style="position:absolute;white-space:pre;left:836px;top:621px;font-size:15px;line-height:18px;color:#777;">Ria</div><div style="position:absolute;left:160px;top:657px;width:800px;height:1.5px;background:#f1f2f5;"></div><div style="position:absolute;white-space:pre;left:170px;top:674.8px;font-size:17px;line-height:20.4px;color:#333;font-weight:700;">Gift Box Delivery</div><div style="position:absolute;left:492px;top:679px;width:38px;height:12px;background:#f4a6ea;border-radius:4px;"></div><div style="position:absolute;left:596px;top:675px;width:20px;height:20px;background:#c9cdd6;border-radius:4px;"></div><div style="position:absolute;white-space:pre;left:624px;top:676px;font-size:15px;line-height:18px;color:#9aa0ab;">Aug 21, 09:30</div><div style="position:absolute;white-space:pre;left:836px;top:676px;font-size:15px;line-height:18px;color:#777;">Ria</div><div style="position:absolute;left:160px;top:712px;width:800px;height:1.5px;background:#f1f2f5;"></div><div style="position:absolute;white-space:pre;left:170px;top:729.8px;font-size:17px;line-height:20.4px;color:#333;font-weight:700;">Parcel Package</div><div style="position:absolute;left:492px;top:734px;width:38px;height:12px;background:#f4a6ea;border-radius:4px;"></div><div style="position:absolute;left:596px;top:730px;width:20px;height:20px;background:#c9cdd6;border-radius:4px;"></div><div style="position:absolute;white-space:pre;left:624px;top:731px;font-size:15px;line-height:18px;color:#9aa0ab;">Aug 21, 09:30</div><div style="position:absolute;white-space:pre;left:836px;top:731px;font-size:15px;line-height:18px;color:#777;">Ria</div><div style="position:absolute;left:160px;top:767px;width:800px;height:1.5px;background:#f1f2f5;"></div><div style="position:absolute;white-space:pre;left:170px;top:784.8px;font-size:17px;line-height:20.4px;color:#333;font-weight:700;">Documents Delivery</div><div style="position:absolute;left:492px;top:789px;width:38px;height:12px;background:#f4a6ea;border-radius:4px;"></div><div style="position:absolute;left:596px;top:785px;width:20px;height:20px;background:#c9cdd6;border-radius:4px;"></div><div style="position:absolute;white-space:pre;left:624px;top:786px;font-size:15px;line-height:18px;color:#9aa0ab;">Aug 21, 09:30</div><div style="position:absolute;white-space:pre;left:836px;top:786px;font-size:15px;line-height:18px;color:#777;">Ria</div><div style="position:absolute;left:160px;top:822px;width:800px;height:1.5px;background:#f1f2f5;"></div><div style="position:absolute;white-space:pre;left:170px;top:839.8px;font-size:17px;line-height:20.4px;color:#333;font-weight:700;">Food Delivery</div><div style="position:absolute;left:492px;top:844px;width:38px;height:12px;background:#f4a6ea;border-radius:4px;"></div><div style="position:absolute;left:596px;top:840px;width:20px;height:20px;background:#c9cdd6;border-radius:4px;"></div><div style="position:absolute;white-space:pre;left:624px;top:841px;font-size:15px;line-height:18px;color:#9aa0ab;">Aug 21, 09:30</div><div style="position:absolute;white-space:pre;left:836px;top:841px;font-size:15px;line-height:18px;color:#777;">Ria</div><div style="position:absolute;left:160px;top:877px;width:800px;height:1.5px;background:#f1f2f5;"></div><div style="position:absolute;white-space:pre;left:170px;top:894.8px;font-size:17px;line-height:20.4px;color:#333;font-weight:700;">Medicine Delivery</div><div style="position:absolute;left:492px;top:899px;width:38px;height:12px;background:#f4a6ea;border-radius:4px;"></div><div style="position:absolute;left:596px;top:895px;width:20px;height:20px;background:#c9cdd6;border-radius:4px;"></div><div style="position:absolute;white-space:pre;left:624px;top:896px;font-size:15px;line-height:18px;color:#9aa0ab;">Aug 21, 09:30</div><div style="position:absolute;white-space:pre;left:836px;top:896px;font-size:15px;line-height:18px;color:#777;">Ria</div><div style="position:absolute;left:160px;top:932px;width:800px;height:1.5px;background:#f1f2f5;"></div><div style="position:absolute;left:1039px;top:154px;width:380px;height:826px;background:#fff;border-radius:8px;"></div><div style="position:absolute;white-space:pre;left:1080px;top:191.4px;font-size:16px;line-height:19.2px;color:#222;font-weight:700;">#DR-1</div><div style="position:absolute;left:1150px;top:190px;width:106px;height:22px;background:#f5973a;border-radius:5px;"></div><div style="position:absolute;left:1083px;top:233px;width:52px;height:52px;background:#5b4bc4;border-radius:8px;"></div><div style="position:absolute;white-space:pre;left:1150px;top:247px;font-size:20px;line-height:24px;color:#222;font-weight:700;">Nusa Dynamics</div><div style="position:absolute;left:1077px;top:328px;width:34px;height:34px;background:#4db86a;border-radius:17px;"></div><div style="position:absolute;white-space:pre;left:1120px;top:330.8px;font-size:12px;line-height:14.4px;color:#9aa0ab;">Origin</div><div style="position:absolute;white-space:pre;left:1120px;top:344.6px;font-size:14px;line-height:16.8px;color:#444;">Gubeng</div><div style="position:absolute;left:1234px;top:328px;width:34px;height:34px;background:#4db86a;border-radius:17px;"></div><div style="position:absolute;white-space:pre;left:1277px;top:330.8px;font-size:12px;line-height:14.4px;color:#9aa0ab;">Destination</div><div style="position:absolute;white-space:pre;left:1277px;top:344.6px;font-size:14px;line-height:16.8px;color:#444;">Wiyung</div><div style="position:absolute;left:1078px;top:410px;width:20px;height:20px;background:#555;border-radius:4px;"></div><div style="position:absolute;white-space:pre;left:1108px;top:409.8px;font-size:17px;line-height:20.4px;color:#222;font-weight:700;">Delivery</div><div style="position:absolute;white-space:pre;left:1080px;top:463.6px;font-size:14px;line-height:16.8px;color:#9aa0ab;">Request Name</div><div style="position:absolute;white-space:pre;left:1380px;top:463.6px;font-size:14px;line-height:16.8px;color:#333;font-weight:700;transform:translateX(-100%)">Documents Delivery</div><div style="position:absolute;white-space:pre;left:1080px;top:513.6px;font-size:14px;line-height:16.8px;color:#9aa0ab;">Request Time</div><div style="position:absolute;white-space:pre;left:1380px;top:513.6px;font-size:14px;line-height:16.8px;color:#333;font-weight:700;transform:translateX(-100%)">Aug 21, 09:30 AM</div><div style="position:absolute;white-space:pre;left:1080px;top:563.6px;font-size:14px;line-height:16.8px;color:#9aa0ab;">Weight</div><div style="position:absolute;white-space:pre;left:1380px;top:563.6px;font-size:14px;line-height:16.8px;color:#333;font-weight:700;transform:translateX(-100%)">0.8 kg</div><div style="position:absolute;white-space:pre;left:1080px;top:613.6px;font-size:14px;line-height:16.8px;color:#9aa0ab;">Dimension</div><div style="position:absolute;white-space:pre;left:1380px;top:613.6px;font-size:14px;line-height:16.8px;color:#333;font-weight:700;transform:translateX(-100%)">20 x 12 x 4</div><div style="position:absolute;white-space:pre;left:1080px;top:663.6px;font-size:14px;line-height:16.8px;color:#9aa0ab;">Receiver</div><div style="position:absolute;white-space:pre;left:1380px;top:663.6px;font-size:14px;line-height:16.8px;color:#333;font-weight:700;transform:translateX(-100%)">Ria Anggraini</div><div style="position:absolute;left:1078px;top:745px;width:20px;height:20px;background:#555;border-radius:4px;"></div><div style="position:absolute;white-space:pre;left:1108px;top:744.8px;font-size:17px;line-height:20.4px;color:#222;font-weight:700;">Note</div><div style="position:absolute;white-space:pre;left:1080px;top:786.6px;font-size:14px;line-height:16.8px;color:#9aa0ab;">Please handle with care, fragile.</div><div style="position:absolute;left:1085px;top:890px;width:115px;height:42px;background:#fff;border-radius:8px;border:2px solid #d5d9e0"></div><div style="position:absolute;white-space:pre;left:1117px;top:902px;font-size:15px;line-height:18px;color:#777;">Cancel</div><div style="position:absolute;left:1255px;top:890px;width:130px;height:44px;background:#417de1;border-radius:8px;"></div><div style="position:absolute;white-space:pre;left:1285px;top:902.4px;font-size:16px;line-height:19.2px;color:#fff;font-weight:700;">Assign</div></div></div>
<div class="fr" style="left:508.40px;top:303.30px;width:400px;height:862px"><div style="position:absolute;left:0px;top:0px;width:400px;height:862px;background:#fff;"></div><div class="fi"><div style="position:absolute;left:0px;top:0px;width:400px;height:892px;background:#f5f6fa;"></div><div style="position:absolute;left:0px;top:0px;width:400px;height:80px;background:#fff;"></div><div style="position:absolute;white-space:pre;left:20px;top:13.6px;font-size:14px;line-height:16.8px;color:#222;font-weight:700;">9:41</div><div style="position:absolute;left:330px;top:16px;width:46px;height:12px;background:#444;border-radius:4px;"></div><div style="position:absolute;white-space:pre;left:20px;top:48px;font-size:20px;line-height:24px;color:#222;font-weight:700;">Delivery Request</div><div style="position:absolute;left:300px;top:45px;width:30px;height:30px;background:#f08a24;border-radius:6px;"></div><div style="position:absolute;left:16px;top:100px;width:364px;height:440px;background:#fff;border-radius:8px;"></div><div style="position:absolute;white-space:pre;left:34px;top:120.2px;font-size:13px;line-height:15.6px;color:#222;font-weight:700;">Today</div><div style="position:absolute;left:32px;top:140px;width:40px;height:3px;background:#417de1;border-radius:1px;"></div><div style="position:absolute;white-space:pre;left:95px;top:120.8px;font-size:12px;line-height:14.4px;color:#aab;">Tomorrow  Completed</div><div style="position:absolute;white-space:pre;left:34px;top:168.4px;font-size:11px;line-height:13.2px;color:#333;font-weight:700;">Documents Delivery</div><div style="position:absolute;left:215px;top:170px;width:24px;height:10px;background:#f39be8;border-radius:3px;"></div><div style="position:absolute;left:262px;top:169px;width:12px;height:12px;background:#c9cdd6;border-radius:3px;"></div><div style="position:absolute;white-space:pre;left:280px;top:169px;font-size:10px;line-height:12px;color:#9aa0ab;">Aug 21</div><div style="position:absolute;white-space:pre;left:345px;top:169px;font-size:10px;line-height:12px;color:#777;">Ria</div><div style="position:absolute;white-space:pre;left:34px;top:204.4px;font-size:11px;line-height:13.2px;color:#333;font-weight:700;">Documents Delivery</div><div style="position:absolute;left:215px;top:206px;width:24px;height:10px;background:#f39be8;border-radius:3px;"></div><div style="position:absolute;left:262px;top:205px;width:12px;height:12px;background:#c9cdd6;border-radius:3px;"></div><div style="position:absolute;white-space:pre;left:280px;top:205px;font-size:10px;line-height:12px;color:#9aa0ab;">Aug 21</div><div style="position:absolute;white-space:pre;left:345px;top:205px;font-size:10px;line-height:12px;color:#777;">Ria</div><div style="position:absolute;white-space:pre;left:34px;top:240.4px;font-size:11px;line-height:13.2px;color:#3f7be0;font-weight:700;">Documents Delivery</div><div style="position:absolute;left:215px;top:242px;width:24px;height:10px;background:#f39be8;border-radius:3px;"></div><div style="position:absolute;left:262px;top:241px;width:12px;height:12px;background:#c9cdd6;border-radius:3px;"></div><div style="position:absolute;white-space:pre;left:280px;top:241px;font-size:10px;line-height:12px;color:#9aa0ab;">Aug 21</div><div style="position:absolute;white-space:pre;left:345px;top:241px;font-size:10px;line-height:12px;color:#777;">Ria</div><div style="position:absolute;white-space:pre;left:34px;top:276.4px;font-size:11px;line-height:13.2px;color:#333;font-weight:700;">Documents Delivery</div><div style="position:absolute;left:215px;top:278px;width:24px;height:10px;background:#f39be8;border-radius:3px;"></div><div style="position:absolute;left:262px;top:277px;width:12px;height:12px;background:#c9cdd6;border-radius:3px;"></div><div style="position:absolute;white-space:pre;left:280px;top:277px;font-size:10px;line-height:12px;color:#9aa0ab;">Aug 21</div><div style="position:absolute;white-space:pre;left:345px;top:277px;font-size:10px;line-height:12px;color:#777;">Ria</div><div style="position:absolute;white-space:pre;left:34px;top:312.4px;font-size:11px;line-height:13.2px;color:#333;font-weight:700;">Documents Delivery</div><div style="position:absolute;left:215px;top:314px;width:24px;height:10px;background:#f39be8;border-radius:3px;"></div><div style="position:absolute;left:262px;top:313px;width:12px;height:12px;background:#c9cdd6;border-radius:3px;"></div><div style="position:absolute;white-space:pre;left:280px;top:313px;font-size:10px;line-height:12px;color:#9aa0ab;">Aug 21</div><div style="position:absolute;white-space:pre;left:345px;top:313px;font-size:10px;line-height:12px;color:#777;">Ria</div><div style="position:absolute;white-space:pre;left:34px;top:348.4px;font-size:11px;line-height:13.2px;color:#333;font-weight:700;">Documents Delivery</div><div style="position:absolute;left:215px;top:350px;width:24px;height:10px;background:#f39be8;border-radius:3px;"></div><div style="position:absolute;left:262px;top:349px;width:12px;height:12px;background:#c9cdd6;border-radius:3px;"></div><div style="position:absolute;white-space:pre;left:280px;top:349px;font-size:10px;line-height:12px;color:#9aa0ab;">Aug 21</div><div style="position:absolute;white-space:pre;left:345px;top:349px;font-size:10px;line-height:12px;color:#777;">Ria</div><div style="position:absolute;white-space:pre;left:34px;top:384.4px;font-size:11px;line-height:13.2px;color:#333;font-weight:700;">Documents Delivery</div><div style="position:absolute;left:215px;top:386px;width:24px;height:10px;background:#f39be8;border-radius:3px;"></div><div style="position:absolute;left:262px;top:385px;width:12px;height:12px;background:#c9cdd6;border-radius:3px;"></div><div style="position:absolute;white-space:pre;left:280px;top:385px;font-size:10px;line-height:12px;color:#9aa0ab;">Aug 21</div><div style="position:absolute;white-space:pre;left:345px;top:385px;font-size:10px;line-height:12px;color:#777;">Ria</div><div style="position:absolute;white-space:pre;left:34px;top:420.4px;font-size:11px;line-height:13.2px;color:#333;font-weight:700;">Documents Delivery</div><div style="position:absolute;left:215px;top:422px;width:24px;height:10px;background:#f39be8;border-radius:3px;"></div><div style="position:absolute;left:262px;top:421px;width:12px;height:12px;background:#c9cdd6;border-radius:3px;"></div><div style="position:absolute;white-space:pre;left:280px;top:421px;font-size:10px;line-height:12px;color:#9aa0ab;">Aug 21</div><div style="position:absolute;white-space:pre;left:345px;top:421px;font-size:10px;line-height:12px;color:#777;">Ria</div><div style="position:absolute;white-space:pre;left:34px;top:456.4px;font-size:11px;line-height:13.2px;color:#333;font-weight:700;">Documents Delivery</div><div style="position:absolute;left:215px;top:458px;width:24px;height:10px;background:#f39be8;border-radius:3px;"></div><div style="position:absolute;left:262px;top:457px;width:12px;height:12px;background:#c9cdd6;border-radius:3px;"></div><div style="position:absolute;white-space:pre;left:280px;top:457px;font-size:10px;line-height:12px;color:#9aa0ab;">Aug 21</div><div style="position:absolute;white-space:pre;left:345px;top:457px;font-size:10px;line-height:12px;color:#777;">Ria</div><div style="position:absolute;white-space:pre;left:34px;top:492.4px;font-size:11px;line-height:13.2px;color:#333;font-weight:700;">Documents Delivery</div><div style="position:absolute;left:215px;top:494px;width:24px;height:10px;background:#f39be8;border-radius:3px;"></div><div style="position:absolute;left:262px;top:493px;width:12px;height:12px;background:#c9cdd6;border-radius:3px;"></div><div style="position:absolute;white-space:pre;left:280px;top:493px;font-size:10px;line-height:12px;color:#9aa0ab;">Aug 21</div><div style="position:absolute;white-space:pre;left:345px;top:493px;font-size:10px;line-height:12px;color:#777;">Ria</div><div style="position:absolute;left:16px;top:555px;width:364px;height:225px;background:#fff;border-radius:10px;box-shadow:0 -4px 20px rgba(0,0,0,.12)"></div><div style="position:absolute;white-space:pre;left:34px;top:572.8px;font-size:12px;line-height:14.4px;color:#222;font-weight:700;">#DR-1</div><div style="position:absolute;left:80px;top:572px;width:70px;height:16px;background:#f5973a;border-radius:4px;"></div><div style="position:absolute;left:34px;top:602px;width:30px;height:30px;background:#c9c64a;border-radius:6px;"></div><div style="position:absolute;white-space:pre;left:72px;top:609.2px;font-size:13px;line-height:15.6px;color:#222;font-weight:700;">Alpha Flyer Industries</div><div style="position:absolute;left:34px;top:655px;width:26px;height:26px;background:#e0d84a;border-radius:6px;"></div><div style="position:absolute;white-space:pre;left:68px;top:661.4px;font-size:11px;line-height:13.2px;color:#555;">Origin</div><div style="position:absolute;left:205px;top:655px;width:26px;height:26px;background:#e0d84a;border-radius:6px;"></div><div style="position:absolute;white-space:pre;left:240px;top:661.4px;font-size:11px;line-height:13.2px;color:#555;">Destination</div><div style="position:absolute;left:34px;top:700px;width:20px;height:20px;background:#5b8de8;border-radius:5px;"></div><div style="position:absolute;white-space:pre;left:62px;top:703.4px;font-size:11px;line-height:13.2px;color:#555;">Notes</div><div style="position:absolute;left:205px;top:700px;width:20px;height:20px;background:#5b8de8;border-radius:5px;"></div><div style="position:absolute;white-space:pre;left:232px;top:703.4px;font-size:11px;line-height:13.2px;color:#555;">Receiver</div><div style="position:absolute;left:34px;top:738px;width:110px;height:30px;background:#fff;border-radius:6px;border:2px solid #d5d9e0"></div><div style="position:absolute;left:225px;top:738px;width:140px;height:32px;background:#417de1;border-radius:6px;"></div><div style="position:absolute;white-space:pre;left:270px;top:746.8px;font-size:12px;line-height:14.4px;color:#fff;font-weight:700;">Assign</div><div style="position:absolute;left:0px;top:789px;width:400px;height:103px;background:#417de1;"></div><div style="position:absolute;left:0px;top:789px;width:80px;height:103px;background:rgba(255,255,255,.9);"></div><div style="position:absolute;left:28px;top:814px;width:24px;height:24px;background:#417de1;border-radius:5px;"></div><div style="position:absolute;left:130px;top:814px;width:24px;height:24px;background:rgba(255,255,255,.8);border-radius:6px;"></div><div style="position:absolute;left:225px;top:814px;width:24px;height:24px;background:rgba(255,255,255,.8);border-radius:6px;"></div><div style="position:absolute;left:320px;top:814px;width:24px;height:24px;background:rgba(255,255,255,.8);border-radius:6px;"></div></div></div>
<div class="fr" style="left:245.70px;top:401.80px;width:1437px;height:1029px"><div style="position:absolute;left:0px;top:0px;width:1437px;height:1029px;background:#fff;"></div><div class="fi"><div style="position:absolute;left:0px;top:0px;width:1440px;height:1059px;background:#f5f6fa;"></div><svg style="position:absolute;left:413px;top:72px" width="1027" height="987" viewBox="0 0 1027 987"><rect width="1027" height="987" fill="#e9e9e9"/><rect x="333" y="149" width="118" height="37" fill="#e2e2e2"/><rect x="376" y="57" width="101" height="33" fill="#f1f1f1"/><rect x="429" y="238" width="106" height="35" fill="#e2e2e2"/><rect x="973" y="622" width="110" height="36" fill="#f1f1f1"/><rect x="51" y="218" width="107" height="42" fill="#f1f1f1"/><rect x="148" y="116" width="77" height="103" fill="#efefef"/><rect x="106" y="564" width="63" height="39" fill="#e2e2e2"/><rect x="580" y="611" width="100" height="78" fill="#dedede"/><rect x="478" y="911" width="83" height="52" fill="#efefef"/><rect x="718" y="241" width="109" height="77" fill="#dedede"/><rect x="749" y="284" width="158" height="41" fill="#f1f1f1"/><rect x="169" y="338" width="152" height="68" fill="#e2e2e2"/><rect x="785" y="566" width="145" height="58" fill="#dedede"/><rect x="610" y="572" width="95" height="106" fill="#dedede"/><rect x="487" y="656" width="47" height="93" fill="#f1f1f1"/><rect x="292" y="381" width="120" height="32" fill="#f1f1f1"/><rect x="365" y="603" width="99" height="50" fill="#dedede"/><rect x="133" y="244" width="87" height="108" fill="#e2e2e2"/><rect x="171" y="396" width="73" height="42" fill="#f1f1f1"/><rect x="887" y="275" width="90" height="62" fill="#f1f1f1"/><rect x="984" y="149" width="61" height="51" fill="#efefef"/><rect x="12" y="820" width="62" height="55" fill="#efefef"/><rect x="430" y="364" width="108" height="116" fill="#e2e2e2"/><rect x="469" y="860" width="154" height="91" fill="#f1f1f1"/><rect x="409" y="389" width="98" height="66" fill="#efefef"/><rect x="69" y="206" width="59" height="61" fill="#e2e2e2"/><rect x="105" y="559" width="104" height="115" fill="#e2e2e2"/><rect x="72" y="205" width="85" height="87" fill="#dedede"/><rect x="619" y="468" width="54" height="74" fill="#f1f1f1"/><rect x="493" y="308" width="57" height="97" fill="#dedede"/><rect x="492" y="683" width="102" height="48" fill="#dedede"/><rect x="151" y="536" width="43" height="78" fill="#e2e2e2"/><rect x="715" y="258" width="84" height="45" fill="#efefef"/><rect x="547" y="769" width="80" height="50" fill="#efefef"/><rect x="828" y="808" width="129" height="50" fill="#f1f1f1"/><rect x="365" y="29" width="43" height="55" fill="#dedede"/><rect x="199" y="597" width="81" height="103" fill="#dedede"/><rect x="981" y="360" width="66" height="50" fill="#efefef"/><rect x="347" y="476" width="158" height="85" fill="#e2e2e2"/><rect x="492" y="644" width="136" height="38" fill="#e2e2e2"/><rect x="934" y="772" width="130" height="73" fill="#efefef"/><rect x="446" y="628" width="50" height="115" fill="#f1f1f1"/><rect x="476" y="734" width="50" height="44" fill="#efefef"/><rect x="28" y="583" width="96" height="89" fill="#f1f1f1"/><rect x="675" y="346" width="106" height="42" fill="#e2e2e2"/><rect x="821" y="717" width="52" height="97" fill="#efefef"/><rect x="446" y="860" width="139" height="49" fill="#dedede"/><rect x="219" y="495" width="132" height="59" fill="#f1f1f1"/><rect x="857" y="60" width="129" height="111" fill="#f1f1f1"/><rect x="849" y="867" width="56" height="44" fill="#e2e2e2"/><rect x="896" y="766" width="113" height="100" fill="#efefef"/><rect x="177" y="467" width="127" height="80" fill="#dedede"/><rect x="701" y="524" width="98" height="100" fill="#e2e2e2"/><rect x="255" y="273" width="133" height="76" fill="#e2e2e2"/><rect x="781" y="901" width="93" height="85" fill="#efefef"/><rect x="711" y="446" width="104" height="73" fill="#efefef"/><rect x="718" y="865" width="153" height="53" fill="#efefef"/><rect x="863" y="135" width="55" height="70" fill="#e2e2e2"/><rect x="689" y="423" width="66" height="57" fill="#e2e2e2"/><rect x="921" y="152" width="126" height="89" fill="#efefef"/><path d="M0 250 C 308 192, 616 245, 1027 279" stroke="#fafafa" stroke-width="6" fill="none"/><path d="M0 393 C 308 391, 616 471, 1027 433" stroke="#fafafa" stroke-width="6" fill="none"/><path d="M0 697 C 308 776, 616 682, 1027 688" stroke="#fafafa" stroke-width="8" fill="none"/><path d="M0 314 C 308 350, 616 238, 1027 321" stroke="#fafafa" stroke-width="8" fill="none"/><path d="M0 694 C 308 676, 616 697, 1027 669" stroke="#fafafa" stroke-width="6" fill="none"/><path d="M0 111 C 308 178, 616 68, 1027 157" stroke="#fafafa" stroke-width="6" fill="none"/><path d="M0 262 C 308 188, 616 307, 1027 235" stroke="#fafafa" stroke-width="6" fill="none"/><path d="M0 809 C 308 865, 616 837, 1027 863" stroke="#fafafa" stroke-width="8" fill="none"/><path d="M0 147 C 308 214, 616 159, 1027 171" stroke="#fafafa" stroke-width="6" fill="none"/><path d="M287 0 C 323 296, 249 592, 334 987" stroke="#fafafa" stroke-width="8" fill="none"/><path d="M964 0 C 980 296, 1000 592, 914 987" stroke="#fafafa" stroke-width="6" fill="none"/><path d="M68 0 C 112 296, 63 592, 49 987" stroke="#fafafa" stroke-width="12" fill="none"/><path d="M429 0 C 479 296, 444 592, 374 987" stroke="#fafafa" stroke-width="12" fill="none"/><path d="M245 0 C 198 296, 204 592, 191 987" stroke="#fafafa" stroke-width="6" fill="none"/><path d="M957 0 C 973 296, 961 592, 922 987" stroke="#fafafa" stroke-width="8" fill="none"/><path d="M514 0 C 475 296, 495 592, 456 987" stroke="#fafafa" stroke-width="8" fill="none"/><path d="M38 0 C -20 296, 39 592, 95 987" stroke="#fafafa" stroke-width="12" fill="none"/><path d="M488 0 C 540 296, 440 592, 526 987" stroke="#fafafa" stroke-width="8" fill="none"/><path d="M674 0 C 680 296, 721 592, 731 987" stroke="#fafafa" stroke-width="8" fill="none"/><rect x="668" y="950" width="26" height="12" rx="3" fill="#bdbdbd" opacity=".8"/><rect x="806" y="686" width="32" height="12" rx="3" fill="#bdbdbd" opacity=".8"/><rect x="397" y="343" width="19" height="12" rx="3" fill="#bdbdbd" opacity=".8"/><rect x="134" y="78" width="34" height="12" rx="3" fill="#bdbdbd" opacity=".8"/><rect x="255" y="166" width="20" height="12" rx="3" fill="#bdbdbd" opacity=".8"/><rect x="815" y="843" width="33" height="12" rx="3" fill="#bdbdbd" opacity=".8"/><rect x="280" y="242" width="24" height="12" rx="3" fill="#bdbdbd" opacity=".8"/><rect x="450" y="161" width="28" height="12" rx="3" fill="#bdbdbd" opacity=".8"/><rect x="262" y="930" width="39" height="12" rx="3" fill="#bdbdbd" opacity=".8"/><rect x="534" y="244" width="39" height="12" rx="3" fill="#bdbdbd" opacity=".8"/><rect x="306" y="351" width="18" height="12" rx="3" fill="#bdbdbd" opacity=".8"/><rect x="375" y="464" width="29" height="12" rx="3" fill="#bdbdbd" opacity=".8"/><rect x="202" y="493" width="18" height="12" rx="3" fill="#bdbdbd" opacity=".8"/><rect x="263" y="96" width="27" height="12" rx="3" fill="#bdbdbd" opacity=".8"/><rect x="50" y="32" width="25" height="12" rx="3" fill="#bdbdbd" opacity=".8"/><rect x="233" y="570" width="30" height="12" rx="3" fill="#bdbdbd" opacity=".8"/><rect x="728" y="639" width="34" height="12" rx="3" fill="#bdbdbd" opacity=".8"/><rect x="851" y="383" width="25" height="12" rx="3" fill="#bdbdbd" opacity=".8"/><rect x="952" y="153" width="34" height="12" rx="3" fill="#bdbdbd" opacity=".8"/><rect x="626" y="52" width="36" height="12" rx="3" fill="#bdbdbd" opacity=".8"/><rect x="864" y="610" width="34" height="12" rx="3" fill="#bdbdbd" opacity=".8"/><rect x="787" y="143" width="30" height="12" rx="3" fill="#bdbdbd" opacity=".8"/><rect x="493" y="809" width="36" height="12" rx="3" fill="#bdbdbd" opacity=".8"/><rect x="801" y="569" width="38" height="12" rx="3" fill="#bdbdbd" opacity=".8"/><rect x="664" y="674" width="23" height="12" rx="3" fill="#bdbdbd" opacity=".8"/><rect x="40" y="137" width="26" height="12" rx="3" fill="#bdbdbd" opacity=".8"/><rect x="110" y="810" width="30" height="12" rx="3" fill="#bdbdbd" opacity=".8"/><rect x="611" y="609" width="33" height="12" rx="3" fill="#bdbdbd" opacity=".8"/><rect x="478" y="13" width="36" height="12" rx="3" fill="#bdbdbd" opacity=".8"/><rect x="726" y="491" width="30" height="12" rx="3" fill="#bdbdbd" opacity=".8"/><rect x="641" y="73" width="34" height="12" rx="3" fill="#bdbdbd" opacity=".8"/><rect x="251" y="81" width="24" height="12" rx="3" fill="#bdbdbd" opacity=".8"/><rect x="708" y="206" width="34" height="12" rx="3" fill="#bdbdbd" opacity=".8"/><rect x="944" y="483" width="26" height="12" rx="3" fill="#bdbdbd" opacity=".8"/><rect x="468" y="664" width="35" height="12" rx="3" fill="#bdbdbd" opacity=".8"/><rect x="600" y="625" width="20" height="12" rx="3" fill="#bdbdbd" opacity=".8"/></svg><div style="position:absolute;left:0px;top:0px;width:72px;height:1059px;background:#417de1;"></div><div style="position:absolute;left:20px;top:18px;width:32px;height:32px;background:#fff;border-radius:6px;opacity:.9"></div><div style="position:absolute;left:0px;top:216px;width:72px;height:40px;background:rgba(255,255,255,.92);"></div><div style="position:absolute;left:24px;top:224px;width:24px;height:24px;background:#417de1;border-radius:4px;"></div><div style="position:absolute;left:24px;top:106px;width:24px;height:24px;background:rgba(255,255,255,.75);border-radius:5px;"></div><div style="position:absolute;left:24px;top:166px;width:24px;height:24px;background:rgba(255,255,255,.75);border-radius:5px;"></div><div style="position:absolute;left:24px;top:275px;width:24px;height:24px;background:rgba(255,255,255,.75);border-radius:5px;"></div><div style="position:absolute;left:24px;top:320px;width:24px;height:24px;background:rgba(255,255,255,.75);border-radius:5px;"></div><div style="position:absolute;left:72px;top:0px;width:1368px;height:72px;background:#fff;"></div><div style="position:absolute;white-space:pre;left:600px;top:25.2px;font-size:18px;line-height:21.6px;color:#b0b4bd;">Search</div><div style="position:absolute;left:570px;top:26px;width:20px;height:20px;background:#c8ccd4;border-radius:10px;"></div><div style="position:absolute;left:1218px;top:26px;width:22px;height:22px;background:#c9cdd6;border-radius:5px;"></div><div style="position:absolute;left:1268px;top:20px;width:34px;height:34px;background:#f08a24;border-radius:6px;"></div><div style="position:absolute;white-space:pre;left:1312px;top:25.2px;font-size:18px;line-height:21.6px;color:#333;font-weight:700;">Nate Ria</div><div style="position:absolute;left:1400px;top:32px;width:12px;height:8px;background:#aaa;border-radius:2px;"></div><div style="position:absolute;left:72px;top:72px;width:341px;height:987px;background:#f5f6fa;"></div><div style="position:absolute;left:108px;top:145px;width:290px;height:213px;background:#fff;border-radius:8px;"></div><div style="position:absolute;left:130px;top:165px;width:46px;height:46px;background:#f5c33b;border-radius:8px;"></div><div style="position:absolute;white-space:pre;left:192px;top:169px;font-size:15px;line-height:18px;color:#222;font-weight:700;">DR-01  0.8kg</div><div style="position:absolute;white-space:pre;left:192px;top:190.2px;font-size:13px;line-height:15.6px;color:#555;font-weight:700;">Aug 21  09:30</div><div style="position:absolute;white-space:pre;left:150px;top:238.4px;font-size:11px;line-height:13.2px;color:#9aa0ab;">Origin</div><div style="position:absolute;white-space:pre;left:150px;top:255.2px;font-size:13px;line-height:15.6px;color:#444;font-weight:700;">Jl. Gubeng Raya</div><div style="position:absolute;white-space:pre;left:150px;top:288.4px;font-size:11px;line-height:13.2px;color:#9aa0ab;">Destination</div><div style="position:absolute;white-space:pre;left:150px;top:306.6px;font-size:14px;line-height:16.8px;color:#222;font-weight:700;">Jl. Raya Wiyung</div><div style="position:absolute;left:134px;top:245px;width:4px;height:72px;background:#d5d9e0;border-radius:2px;"></div><div style="position:absolute;left:108px;top:396px;width:290px;height:213px;background:#fff;border-radius:8px;"></div><div style="position:absolute;left:130px;top:416px;width:46px;height:46px;background:#f03cf0;border-radius:8px;"></div><div style="position:absolute;white-space:pre;left:192px;top:420px;font-size:15px;line-height:18px;color:#222;font-weight:700;">DR-02  0.8kg</div><div style="position:absolute;white-space:pre;left:192px;top:441.2px;font-size:13px;line-height:15.6px;color:#555;font-weight:700;">Aug 21  09:30</div><div style="position:absolute;white-space:pre;left:150px;top:489.4px;font-size:11px;line-height:13.2px;color:#9aa0ab;">Origin</div><div style="position:absolute;white-space:pre;left:150px;top:506.2px;font-size:13px;line-height:15.6px;color:#444;font-weight:700;">Jl. Gubeng Raya</div><div style="position:absolute;white-space:pre;left:150px;top:539.4px;font-size:11px;line-height:13.2px;color:#9aa0ab;">Destination</div><div style="position:absolute;white-space:pre;left:150px;top:557.6px;font-size:14px;line-height:16.8px;color:#222;font-weight:700;">Jl. Raya Wiyung</div><div style="position:absolute;left:134px;top:496px;width:4px;height:72px;background:#d5d9e0;border-radius:2px;"></div><div style="position:absolute;left:108px;top:640px;width:290px;height:213px;background:#fff;border-radius:8px;"></div><div style="position:absolute;left:130px;top:660px;width:46px;height:46px;background:#e8405a;border-radius:8px;"></div><div style="position:absolute;white-space:pre;left:192px;top:664px;font-size:15px;line-height:18px;color:#222;font-weight:700;">DR-03  0.8kg</div><div style="position:absolute;white-space:pre;left:192px;top:685.2px;font-size:13px;line-height:15.6px;color:#555;font-weight:700;">Aug 21  09:30</div><div style="position:absolute;white-space:pre;left:150px;top:733.4px;font-size:11px;line-height:13.2px;color:#9aa0ab;">Origin</div><div style="position:absolute;white-space:pre;left:150px;top:750.2px;font-size:13px;line-height:15.6px;color:#444;font-weight:700;">Jl. Gubeng Raya</div><div style="position:absolute;white-space:pre;left:150px;top:783.4px;font-size:11px;line-height:13.2px;color:#9aa0ab;">Destination</div><div style="position:absolute;white-space:pre;left:150px;top:801.6px;font-size:14px;line-height:16.8px;color:#222;font-weight:700;">Jl. Raya Wiyung</div><div style="position:absolute;left:134px;top:740px;width:4px;height:72px;background:#d5d9e0;border-radius:2px;"></div><div style="position:absolute;left:108px;top:887px;width:290px;height:172px;background:#fff;border-radius:8px;"></div><div style="position:absolute;left:130px;top:907px;width:46px;height:46px;background:#3cb48a;border-radius:8px;"></div><div style="position:absolute;white-space:pre;left:192px;top:911px;font-size:15px;line-height:18px;color:#222;font-weight:700;">DR-04  0.8kg</div><div style="position:absolute;white-space:pre;left:192px;top:932.2px;font-size:13px;line-height:15.6px;color:#555;font-weight:700;">Aug 21  09:30</div><div style="position:absolute;white-space:pre;left:150px;top:980.4px;font-size:11px;line-height:13.2px;color:#9aa0ab;">Origin</div><div style="position:absolute;white-space:pre;left:150px;top:997.2px;font-size:13px;line-height:15.6px;color:#444;font-weight:700;">Jl. Gubeng Raya</div><div style="position:absolute;white-space:pre;left:150px;top:1030.4px;font-size:11px;line-height:13.2px;color:#9aa0ab;">Destination</div><div style="position:absolute;white-space:pre;left:150px;top:1048.6px;font-size:14px;line-height:16.8px;color:#222;font-weight:700;">Jl. Raya Wiyung</div><div style="position:absolute;left:134px;top:987px;width:4px;height:72px;background:#d5d9e0;border-radius:2px;"></div><div style="position:absolute;left:605px;top:226px;width:42px;height:42px;background:#f03cf0;border-radius:8px;"></div><div style="position:absolute;left:783px;top:492px;width:42px;height:42px;background:#f5c33b;border-radius:8px;"></div><div style="position:absolute;left:611px;top:939px;width:42px;height:42px;background:#e8405a;border-radius:8px;"></div><div style="position:absolute;left:975px;top:790px;width:50px;height:50px;background:#9bb8ee;border-radius:12px;opacity:.85"></div><svg style="position:absolute;left:0;top:0" width="1440" height="1029"><polyline points="614,431 782,503 894,510 909,592 927,726 961,848 1000,838" fill="none" stroke="#5b8de8" stroke-width="7" stroke-linejoin="round"/><circle cx="614" cy="431" r="10" fill="#fff" stroke="#777" stroke-width="3"/></svg><div style="position:absolute;white-space:pre;left:760px;top:544.4px;font-size:26px;line-height:31.2px;color:#333;font-weight:700;">Sugiharto</div><div style="position:absolute;white-space:pre;left:1340px;top:159.4px;font-size:26px;line-height:31.2px;color:#333;font-weight:700;">Simokerto</div><div style="position:absolute;left:1084px;top:230px;width:297px;height:575px;background:#fff;border-radius:10px;box-shadow:0 6px 30px rgba(0,0,0,.18)"></div><div style="position:absolute;left:1107px;top:252px;width:48px;height:48px;background:#f5c33b;border-radius:8px;"></div><div style="position:absolute;white-space:pre;left:1168px;top:257.6px;font-size:14px;line-height:16.8px;color:#222;font-weight:700;">DR-01  0.8kg</div><div style="position:absolute;white-space:pre;left:1168px;top:278.8px;font-size:12px;line-height:14.4px;color:#555;">Aug 21 09:30</div><div style="position:absolute;left:1294px;top:266px;width:74px;height:20px;background:#4db86a;border-radius:5px;"></div><div style="position:absolute;left:1108px;top:338px;width:18px;height:18px;background:#555;border-radius:4px;"></div><div style="position:absolute;white-space:pre;left:1134px;top:337.4px;font-size:16px;line-height:19.2px;color:#222;font-weight:700;">Delivery</div><div style="position:absolute;white-space:pre;left:1110px;top:387.8px;font-size:12px;line-height:14.4px;color:#9aa0ab;">Request</div><div style="position:absolute;white-space:pre;left:1362px;top:387.8px;font-size:12px;line-height:14.4px;color:#333;font-weight:700;transform:translateX(-100%)">Documents</div><div style="position:absolute;white-space:pre;left:1110px;top:434.8px;font-size:12px;line-height:14.4px;color:#9aa0ab;">Weight</div><div style="position:absolute;white-space:pre;left:1362px;top:434.8px;font-size:12px;line-height:14.4px;color:#333;font-weight:700;transform:translateX(-100%)">0.8 kg</div><div style="position:absolute;white-space:pre;left:1110px;top:481.8px;font-size:12px;line-height:14.4px;color:#9aa0ab;">Request Time</div><div style="position:absolute;white-space:pre;left:1362px;top:481.8px;font-size:12px;line-height:14.4px;color:#333;font-weight:700;transform:translateX(-100%)">09:30 AM</div><div style="position:absolute;white-space:pre;left:1110px;top:528.8px;font-size:12px;line-height:14.4px;color:#9aa0ab;">Receiver</div><div style="position:absolute;white-space:pre;left:1362px;top:528.8px;font-size:12px;line-height:14.4px;color:#333;font-weight:700;transform:translateX(-100%)">Ria</div><div style="position:absolute;white-space:pre;left:1110px;top:575.8px;font-size:12px;line-height:14.4px;color:#9aa0ab;">Operator</div><div style="position:absolute;white-space:pre;left:1362px;top:575.8px;font-size:12px;line-height:14.4px;color:#333;font-weight:700;transform:translateX(-100%)">Alpha</div><div style="position:absolute;left:1108px;top:640px;width:18px;height:18px;background:#555;border-radius:4px;"></div><div style="position:absolute;white-space:pre;left:1134px;top:640px;font-size:15px;line-height:18px;color:#222;font-weight:700;">Drone Information</div><div style="position:absolute;white-space:pre;left:1110px;top:683.4px;font-size:11px;line-height:13.2px;color:#9aa0ab;">Battery</div><div style="position:absolute;white-space:pre;left:1110px;top:697.2px;font-size:13px;line-height:15.6px;color:#333;font-weight:700;">86%</div><div style="position:absolute;white-space:pre;left:1250px;top:683.4px;font-size:11px;line-height:13.2px;color:#9aa0ab;">Speed</div><div style="position:absolute;white-space:pre;left:1250px;top:697.2px;font-size:13px;line-height:15.6px;color:#333;font-weight:700;">42 km/h</div><div style="position:absolute;white-space:pre;left:1110px;top:725.4px;font-size:11px;line-height:13.2px;color:#9aa0ab;">Battery</div><div style="position:absolute;white-space:pre;left:1110px;top:739.2px;font-size:13px;line-height:15.6px;color:#333;font-weight:700;">86%</div><div style="position:absolute;white-space:pre;left:1250px;top:725.4px;font-size:11px;line-height:13.2px;color:#9aa0ab;">Speed</div><div style="position:absolute;white-space:pre;left:1250px;top:739.2px;font-size:13px;line-height:15.6px;color:#333;font-weight:700;">42 km/h</div><div style="position:absolute;white-space:pre;left:1110px;top:767.4px;font-size:11px;line-height:13.2px;color:#9aa0ab;">Battery</div><div style="position:absolute;white-space:pre;left:1110px;top:781.2px;font-size:13px;line-height:15.6px;color:#333;font-weight:700;">86%</div><div style="position:absolute;white-space:pre;left:1250px;top:767.4px;font-size:11px;line-height:13.2px;color:#9aa0ab;">Speed</div><div style="position:absolute;white-space:pre;left:1250px;top:781.2px;font-size:13px;line-height:15.6px;color:#333;font-weight:700;">42 km/h</div></div></div>
<div class="fr" style="left:372.10px;top:401.80px;width:1437px;height:1029px"><div style="position:absolute;left:0px;top:0px;width:1437px;height:1029px;background:#fff;"></div><div class="fi"><div style="position:absolute;left:0px;top:0px;width:1440px;height:1059px;background:#f5f6fa;"></div><svg style="position:absolute;left:413px;top:72px" width="1027" height="987" viewBox="0 0 1027 987"><rect width="1027" height="987" fill="#e9e9e9"/><rect x="333" y="149" width="118" height="37" fill="#e2e2e2"/><rect x="376" y="57" width="101" height="33" fill="#f1f1f1"/><rect x="429" y="238" width="106" height="35" fill="#e2e2e2"/><rect x="973" y="622" width="110" height="36" fill="#f1f1f1"/><rect x="51" y="218" width="107" height="42" fill="#f1f1f1"/><rect x="148" y="116" width="77" height="103" fill="#efefef"/><rect x="106" y="564" width="63" height="39" fill="#e2e2e2"/><rect x="580" y="611" width="100" height="78" fill="#dedede"/><rect x="478" y="911" width="83" height="52" fill="#efefef"/><rect x="718" y="241" width="109" height="77" fill="#dedede"/><rect x="749" y="284" width="158" height="41" fill="#f1f1f1"/><rect x="169" y="338" width="152" height="68" fill="#e2e2e2"/><rect x="785" y="566" width="145" height="58" fill="#dedede"/><rect x="610" y="572" width="95" height="106" fill="#dedede"/><rect x="487" y="656" width="47" height="93" fill="#f1f1f1"/><rect x="292" y="381" width="120" height="32" fill="#f1f1f1"/><rect x="365" y="603" width="99" height="50" fill="#dedede"/><rect x="133" y="244" width="87" height="108" fill="#e2e2e2"/><rect x="171" y="396" width="73" height="42" fill="#f1f1f1"/><rect x="887" y="275" width="90" height="62" fill="#f1f1f1"/><rect x="984" y="149" width="61" height="51" fill="#efefef"/><rect x="12" y="820" width="62" height="55" fill="#efefef"/><rect x="430" y="364" width="108" height="116" fill="#e2e2e2"/><rect x="469" y="860" width="154" height="91" fill="#f1f1f1"/><rect x="409" y="389" width="98" height="66" fill="#efefef"/><rect x="69" y="206" width="59" height="61" fill="#e2e2e2"/><rect x="105" y="559" width="104" height="115" fill="#e2e2e2"/><rect x="72" y="205" width="85" height="87" fill="#dedede"/><rect x="619" y="468" width="54" height="74" fill="#f1f1f1"/><rect x="493" y="308" width="57" height="97" fill="#dedede"/><rect x="492" y="683" width="102" height="48" fill="#dedede"/><rect x="151" y="536" width="43" height="78" fill="#e2e2e2"/><rect x="715" y="258" width="84" height="45" fill="#efefef"/><rect x="547" y="769" width="80" height="50" fill="#efefef"/><rect x="828" y="808" width="129" height="50" fill="#f1f1f1"/><rect x="365" y="29" width="43" height="55" fill="#dedede"/><rect x="199" y="597" width="81" height="103" fill="#dedede"/><rect x="981" y="360" width="66" height="50" fill="#efefef"/><rect x="347" y="476" width="158" height="85" fill="#e2e2e2"/><rect x="492" y="644" width="136" height="38" fill="#e2e2e2"/><rect x="934" y="772" width="130" height="73" fill="#efefef"/><rect x="446" y="628" width="50" height="115" fill="#f1f1f1"/><rect x="476" y="734" width="50" height="44" fill="#efefef"/><rect x="28" y="583" width="96" height="89" fill="#f1f1f1"/><rect x="675" y="346" width="106" height="42" fill="#e2e2e2"/><rect x="821" y="717" width="52" height="97" fill="#efefef"/><rect x="446" y="860" width="139" height="49" fill="#dedede"/><rect x="219" y="495" width="132" height="59" fill="#f1f1f1"/><rect x="857" y="60" width="129" height="111" fill="#f1f1f1"/><rect x="849" y="867" width="56" height="44" fill="#e2e2e2"/><rect x="896" y="766" width="113" height="100" fill="#efefef"/><rect x="177" y="467" width="127" height="80" fill="#dedede"/><rect x="701" y="524" width="98" height="100" fill="#e2e2e2"/><rect x="255" y="273" width="133" height="76" fill="#e2e2e2"/><rect x="781" y="901" width="93" height="85" fill="#efefef"/><rect x="711" y="446" width="104" height="73" fill="#efefef"/><rect x="718" y="865" width="153" height="53" fill="#efefef"/><rect x="863" y="135" width="55" height="70" fill="#e2e2e2"/><rect x="689" y="423" width="66" height="57" fill="#e2e2e2"/><rect x="921" y="152" width="126" height="89" fill="#efefef"/><path d="M0 250 C 308 192, 616 245, 1027 279" stroke="#fafafa" stroke-width="6" fill="none"/><path d="M0 393 C 308 391, 616 471, 1027 433" stroke="#fafafa" stroke-width="6" fill="none"/><path d="M0 697 C 308 776, 616 682, 1027 688" stroke="#fafafa" stroke-width="8" fill="none"/><path d="M0 314 C 308 350, 616 238, 1027 321" stroke="#fafafa" stroke-width="8" fill="none"/><path d="M0 694 C 308 676, 616 697, 1027 669" stroke="#fafafa" stroke-width="6" fill="none"/><path d="M0 111 C 308 178, 616 68, 1027 157" stroke="#fafafa" stroke-width="6" fill="none"/><path d="M0 262 C 308 188, 616 307, 1027 235" stroke="#fafafa" stroke-width="6" fill="none"/><path d="M0 809 C 308 865, 616 837, 1027 863" stroke="#fafafa" stroke-width="8" fill="none"/><path d="M0 147 C 308 214, 616 159, 1027 171" stroke="#fafafa" stroke-width="6" fill="none"/><path d="M287 0 C 323 296, 249 592, 334 987" stroke="#fafafa" stroke-width="8" fill="none"/><path d="M964 0 C 980 296, 1000 592, 914 987" stroke="#fafafa" stroke-width="6" fill="none"/><path d="M68 0 C 112 296, 63 592, 49 987" stroke="#fafafa" stroke-width="12" fill="none"/><path d="M429 0 C 479 296, 444 592, 374 987" stroke="#fafafa" stroke-width="12" fill="none"/><path d="M245 0 C 198 296, 204 592, 191 987" stroke="#fafafa" stroke-width="6" fill="none"/><path d="M957 0 C 973 296, 961 592, 922 987" stroke="#fafafa" stroke-width="8" fill="none"/><path d="M514 0 C 475 296, 495 592, 456 987" stroke="#fafafa" stroke-width="8" fill="none"/><path d="M38 0 C -20 296, 39 592, 95 987" stroke="#fafafa" stroke-width="12" fill="none"/><path d="M488 0 C 540 296, 440 592, 526 987" stroke="#fafafa" stroke-width="8" fill="none"/><path d="M674 0 C 680 296, 721 592, 731 987" stroke="#fafafa" stroke-width="8" fill="none"/><rect x="668" y="950" width="26" height="12" rx="3" fill="#bdbdbd" opacity=".8"/><rect x="806" y="686" width="32" height="12" rx="3" fill="#bdbdbd" opacity=".8"/><rect x="397" y="343" width="19" height="12" rx="3" fill="#bdbdbd" opacity=".8"/><rect x="134" y="78" width="34" height="12" rx="3" fill="#bdbdbd" opacity=".8"/><rect x="255" y="166" width="20" height="12" rx="3" fill="#bdbdbd" opacity=".8"/><rect x="815" y="843" width="33" height="12" rx="3" fill="#bdbdbd" opacity=".8"/><rect x="280" y="242" width="24" height="12" rx="3" fill="#bdbdbd" opacity=".8"/><rect x="450" y="161" width="28" height="12" rx="3" fill="#bdbdbd" opacity=".8"/><rect x="262" y="930" width="39" height="12" rx="3" fill="#bdbdbd" opacity=".8"/><rect x="534" y="244" width="39" height="12" rx="3" fill="#bdbdbd" opacity=".8"/><rect x="306" y="351" width="18" height="12" rx="3" fill="#bdbdbd" opacity=".8"/><rect x="375" y="464" width="29" height="12" rx="3" fill="#bdbdbd" opacity=".8"/><rect x="202" y="493" width="18" height="12" rx="3" fill="#bdbdbd" opacity=".8"/><rect x="263" y="96" width="27" height="12" rx="3" fill="#bdbdbd" opacity=".8"/><rect x="50" y="32" width="25" height="12" rx="3" fill="#bdbdbd" opacity=".8"/><rect x="233" y="570" width="30" height="12" rx="3" fill="#bdbdbd" opacity=".8"/><rect x="728" y="639" width="34" height="12" rx="3" fill="#bdbdbd" opacity=".8"/><rect x="851" y="383" width="25" height="12" rx="3" fill="#bdbdbd" opacity=".8"/><rect x="952" y="153" width="34" height="12" rx="3" fill="#bdbdbd" opacity=".8"/><rect x="626" y="52" width="36" height="12" rx="3" fill="#bdbdbd" opacity=".8"/><rect x="864" y="610" width="34" height="12" rx="3" fill="#bdbdbd" opacity=".8"/><rect x="787" y="143" width="30" height="12" rx="3" fill="#bdbdbd" opacity=".8"/><rect x="493" y="809" width="36" height="12" rx="3" fill="#bdbdbd" opacity=".8"/><rect x="801" y="569" width="38" height="12" rx="3" fill="#bdbdbd" opacity=".8"/><rect x="664" y="674" width="23" height="12" rx="3" fill="#bdbdbd" opacity=".8"/><rect x="40" y="137" width="26" height="12" rx="3" fill="#bdbdbd" opacity=".8"/><rect x="110" y="810" width="30" height="12" rx="3" fill="#bdbdbd" opacity=".8"/><rect x="611" y="609" width="33" height="12" rx="3" fill="#bdbdbd" opacity=".8"/><rect x="478" y="13" width="36" height="12" rx="3" fill="#bdbdbd" opacity=".8"/><rect x="726" y="491" width="30" height="12" rx="3" fill="#bdbdbd" opacity=".8"/><rect x="641" y="73" width="34" height="12" rx="3" fill="#bdbdbd" opacity=".8"/><rect x="251" y="81" width="24" height="12" rx="3" fill="#bdbdbd" opacity=".8"/><rect x="708" y="206" width="34" height="12" rx="3" fill="#bdbdbd" opacity=".8"/><rect x="944" y="483" width="26" height="12" rx="3" fill="#bdbdbd" opacity=".8"/><rect x="468" y="664" width="35" height="12" rx="3" fill="#bdbdbd" opacity=".8"/><rect x="600" y="625" width="20" height="12" rx="3" fill="#bdbdbd" opacity=".8"/></svg><div style="position:absolute;left:0px;top:0px;width:72px;height:1059px;background:#417de1;"></div><div style="position:absolute;left:20px;top:18px;width:32px;height:32px;background:#fff;border-radius:6px;opacity:.9"></div><div style="position:absolute;left:0px;top:216px;width:72px;height:40px;background:rgba(255,255,255,.92);"></div><div style="position:absolute;left:24px;top:224px;width:24px;height:24px;background:#417de1;border-radius:4px;"></div><div style="position:absolute;left:24px;top:106px;width:24px;height:24px;background:rgba(255,255,255,.75);border-radius:5px;"></div><div style="position:absolute;left:24px;top:166px;width:24px;height:24px;background:rgba(255,255,255,.75);border-radius:5px;"></div><div style="position:absolute;left:24px;top:275px;width:24px;height:24px;background:rgba(255,255,255,.75);border-radius:5px;"></div><div style="position:absolute;left:24px;top:320px;width:24px;height:24px;background:rgba(255,255,255,.75);border-radius:5px;"></div><div style="position:absolute;left:72px;top:0px;width:1368px;height:72px;background:#fff;"></div><div style="position:absolute;white-space:pre;left:600px;top:25.2px;font-size:18px;line-height:21.6px;color:#b0b4bd;">Search</div><div style="position:absolute;left:570px;top:26px;width:20px;height:20px;background:#c8ccd4;border-radius:10px;"></div><div style="position:absolute;left:1218px;top:26px;width:22px;height:22px;background:#c9cdd6;border-radius:5px;"></div><div style="position:absolute;left:1268px;top:20px;width:34px;height:34px;background:#f08a24;border-radius:6px;"></div><div style="position:absolute;white-space:pre;left:1312px;top:25.2px;font-size:18px;line-height:21.6px;color:#333;font-weight:700;">Nate Ria</div><div style="position:absolute;left:1400px;top:32px;width:12px;height:8px;background:#aaa;border-radius:2px;"></div><div style="position:absolute;left:72px;top:72px;width:341px;height:987px;background:#f5f6fa;"></div><div style="position:absolute;left:108px;top:145px;width:290px;height:213px;background:#fff;border-radius:8px;"></div><div style="position:absolute;left:130px;top:165px;width:46px;height:46px;background:#f5c33b;border-radius:8px;"></div><div style="position:absolute;white-space:pre;left:192px;top:169px;font-size:15px;line-height:18px;color:#222;font-weight:700;">DR-01  0.8kg</div><div style="position:absolute;white-space:pre;left:192px;top:190.2px;font-size:13px;line-height:15.6px;color:#555;font-weight:700;">Aug 21  09:30</div><div style="position:absolute;white-space:pre;left:150px;top:238.4px;font-size:11px;line-height:13.2px;color:#9aa0ab;">Origin</div><div style="position:absolute;white-space:pre;left:150px;top:255.2px;font-size:13px;line-height:15.6px;color:#444;font-weight:700;">Jl. Gubeng Raya</div><div style="position:absolute;white-space:pre;left:150px;top:288.4px;font-size:11px;line-height:13.2px;color:#9aa0ab;">Destination</div><div style="position:absolute;white-space:pre;left:150px;top:306.6px;font-size:14px;line-height:16.8px;color:#222;font-weight:700;">Jl. Raya Wiyung</div><div style="position:absolute;left:134px;top:245px;width:4px;height:72px;background:#d5d9e0;border-radius:2px;"></div><div style="position:absolute;left:108px;top:396px;width:290px;height:213px;background:#fff;border-radius:8px;"></div><div style="position:absolute;left:130px;top:416px;width:46px;height:46px;background:#f03cf0;border-radius:8px;"></div><div style="position:absolute;white-space:pre;left:192px;top:420px;font-size:15px;line-height:18px;color:#222;font-weight:700;">DR-02  0.8kg</div><div style="position:absolute;white-space:pre;left:192px;top:441.2px;font-size:13px;line-height:15.6px;color:#555;font-weight:700;">Aug 21  09:30</div><div style="position:absolute;white-space:pre;left:150px;top:489.4px;font-size:11px;line-height:13.2px;color:#9aa0ab;">Origin</div><div style="position:absolute;white-space:pre;left:150px;top:506.2px;font-size:13px;line-height:15.6px;color:#444;font-weight:700;">Jl. Gubeng Raya</div><div style="position:absolute;white-space:pre;left:150px;top:539.4px;font-size:11px;line-height:13.2px;color:#9aa0ab;">Destination</div><div style="position:absolute;white-space:pre;left:150px;top:557.6px;font-size:14px;line-height:16.8px;color:#222;font-weight:700;">Jl. Raya Wiyung</div><div style="position:absolute;left:134px;top:496px;width:4px;height:72px;background:#d5d9e0;border-radius:2px;"></div><div style="position:absolute;left:108px;top:640px;width:290px;height:213px;background:#fff;border-radius:8px;"></div><div style="position:absolute;left:130px;top:660px;width:46px;height:46px;background:#e8405a;border-radius:8px;"></div><div style="position:absolute;white-space:pre;left:192px;top:664px;font-size:15px;line-height:18px;color:#222;font-weight:700;">DR-03  0.8kg</div><div style="position:absolute;white-space:pre;left:192px;top:685.2px;font-size:13px;line-height:15.6px;color:#555;font-weight:700;">Aug 21  09:30</div><div style="position:absolute;white-space:pre;left:150px;top:733.4px;font-size:11px;line-height:13.2px;color:#9aa0ab;">Origin</div><div style="position:absolute;white-space:pre;left:150px;top:750.2px;font-size:13px;line-height:15.6px;color:#444;font-weight:700;">Jl. Gubeng Raya</div><div style="position:absolute;white-space:pre;left:150px;top:783.4px;font-size:11px;line-height:13.2px;color:#9aa0ab;">Destination</div><div style="position:absolute;white-space:pre;left:150px;top:801.6px;font-size:14px;line-height:16.8px;color:#222;font-weight:700;">Jl. Raya Wiyung</div><div style="position:absolute;left:134px;top:740px;width:4px;height:72px;background:#d5d9e0;border-radius:2px;"></div><div style="position:absolute;left:108px;top:887px;width:290px;height:172px;background:#fff;border-radius:8px;"></div><div style="position:absolute;left:130px;top:907px;width:46px;height:46px;background:#3cb48a;border-radius:8px;"></div><div style="position:absolute;white-space:pre;left:192px;top:911px;font-size:15px;line-height:18px;color:#222;font-weight:700;">DR-04  0.8kg</div><div style="position:absolute;white-space:pre;left:192px;top:932.2px;font-size:13px;line-height:15.6px;color:#555;font-weight:700;">Aug 21  09:30</div><div style="position:absolute;white-space:pre;left:150px;top:980.4px;font-size:11px;line-height:13.2px;color:#9aa0ab;">Origin</div><div style="position:absolute;white-space:pre;left:150px;top:997.2px;font-size:13px;line-height:15.6px;color:#444;font-weight:700;">Jl. Gubeng Raya</div><div style="position:absolute;white-space:pre;left:150px;top:1030.4px;font-size:11px;line-height:13.2px;color:#9aa0ab;">Destination</div><div style="position:absolute;white-space:pre;left:150px;top:1048.6px;font-size:14px;line-height:16.8px;color:#222;font-weight:700;">Jl. Raya Wiyung</div><div style="position:absolute;left:134px;top:987px;width:4px;height:72px;background:#d5d9e0;border-radius:2px;"></div><div style="position:absolute;left:605px;top:226px;width:42px;height:42px;background:#f03cf0;border-radius:8px;"></div><div style="position:absolute;left:783px;top:492px;width:42px;height:42px;background:#f5c33b;border-radius:8px;"></div><div style="position:absolute;left:611px;top:939px;width:42px;height:42px;background:#e8405a;border-radius:8px;"></div><div style="position:absolute;left:975px;top:790px;width:50px;height:50px;background:#9bb8ee;border-radius:12px;opacity:.85"></div><svg style="position:absolute;left:0;top:0" width="1440" height="1029"><polyline points="614,431 782,503 894,510 909,592 927,726 961,848 1000,838" fill="none" stroke="#5b8de8" stroke-width="7" stroke-linejoin="round"/><circle cx="614" cy="431" r="10" fill="#fff" stroke="#777" stroke-width="3"/></svg><div style="position:absolute;white-space:pre;left:760px;top:544.4px;font-size:26px;line-height:31.2px;color:#333;font-weight:700;">Sugiharto</div><div style="position:absolute;white-space:pre;left:1330px;top:238.2px;font-size:28px;line-height:33.6px;color:#333;font-weight:700;">Simokerto</div><div style="position:absolute;white-space:pre;left:1240px;top:628px;font-size:20px;line-height:24px;color:#555;font-weight:700;">Gubeng</div></div></div>
<div class="fr" style="left:508.40px;top:401.70px;width:400px;height:858px"><div style="position:absolute;left:0px;top:0px;width:400px;height:858px;background:#fff;"></div><div class="fi"><div style="position:absolute;left:0px;top:0px;width:400px;height:888px;background:#f5f6fa;"></div><svg style="position:absolute;left:0px;top:215px" width="400" height="575" viewBox="0 0 400 575"><rect width="400" height="575" fill="#e9e9e9"/><rect x="130" y="87" width="118" height="37" fill="#e2e2e2"/><rect x="146" y="33" width="101" height="33" fill="#f1f1f1"/><rect x="167" y="138" width="106" height="35" fill="#e2e2e2"/><rect x="379" y="363" width="110" height="36" fill="#f1f1f1"/><rect x="20" y="127" width="107" height="42" fill="#f1f1f1"/><rect x="58" y="68" width="77" height="103" fill="#efefef"/><rect x="41" y="328" width="63" height="39" fill="#e2e2e2"/><rect x="226" y="356" width="100" height="78" fill="#dedede"/><rect x="186" y="531" width="83" height="52" fill="#efefef"/><rect x="280" y="140" width="109" height="77" fill="#dedede"/><rect x="292" y="166" width="158" height="41" fill="#f1f1f1"/><rect x="66" y="197" width="152" height="68" fill="#e2e2e2"/><rect x="306" y="329" width="145" height="58" fill="#dedede"/><rect x="238" y="333" width="95" height="106" fill="#dedede"/><rect x="190" y="382" width="47" height="93" fill="#f1f1f1"/><rect x="114" y="222" width="120" height="32" fill="#f1f1f1"/><rect x="142" y="351" width="99" height="50" fill="#dedede"/><rect x="52" y="142" width="87" height="108" fill="#e2e2e2"/><rect x="67" y="231" width="73" height="42" fill="#f1f1f1"/><rect x="346" y="160" width="90" height="62" fill="#f1f1f1"/><rect x="383" y="87" width="61" height="51" fill="#efefef"/><rect x="5" y="478" width="62" height="55" fill="#efefef"/><rect x="168" y="212" width="108" height="116" fill="#e2e2e2"/><rect x="183" y="501" width="154" height="91" fill="#f1f1f1"/><rect x="159" y="227" width="98" height="66" fill="#efefef"/><rect x="27" y="120" width="59" height="61" fill="#e2e2e2"/><rect x="41" y="326" width="104" height="115" fill="#e2e2e2"/><rect x="28" y="120" width="85" height="87" fill="#dedede"/><rect x="241" y="273" width="54" height="74" fill="#f1f1f1"/><rect x="192" y="179" width="57" height="97" fill="#dedede"/><rect x="191" y="398" width="102" height="48" fill="#dedede"/><rect x="59" y="312" width="43" height="78" fill="#e2e2e2"/><rect x="278" y="150" width="84" height="45" fill="#efefef"/><rect x="213" y="448" width="80" height="50" fill="#efefef"/><rect x="322" y="471" width="129" height="50" fill="#f1f1f1"/><rect x="142" y="17" width="43" height="55" fill="#dedede"/><rect x="77" y="348" width="81" height="103" fill="#dedede"/><rect x="382" y="210" width="66" height="50" fill="#efefef"/><rect x="135" y="278" width="158" height="85" fill="#e2e2e2"/><rect x="192" y="375" width="136" height="38" fill="#e2e2e2"/><rect x="364" y="450" width="130" height="73" fill="#efefef"/><rect x="174" y="366" width="50" height="115" fill="#f1f1f1"/><rect x="185" y="427" width="50" height="44" fill="#efefef"/><rect x="11" y="340" width="96" height="89" fill="#f1f1f1"/><rect x="263" y="201" width="106" height="42" fill="#e2e2e2"/><rect x="320" y="418" width="52" height="97" fill="#efefef"/><rect x="174" y="501" width="139" height="49" fill="#dedede"/><rect x="85" y="288" width="132" height="59" fill="#f1f1f1"/><rect x="334" y="35" width="129" height="111" fill="#f1f1f1"/><rect x="331" y="505" width="56" height="44" fill="#e2e2e2"/><rect x="349" y="446" width="113" height="100" fill="#efefef"/><rect x="69" y="272" width="127" height="80" fill="#dedede"/><rect x="273" y="305" width="98" height="100" fill="#e2e2e2"/><rect x="99" y="159" width="133" height="76" fill="#e2e2e2"/><rect x="304" y="525" width="93" height="85" fill="#efefef"/><rect x="277" y="260" width="104" height="73" fill="#efefef"/><rect x="280" y="504" width="153" height="53" fill="#efefef"/><rect x="336" y="79" width="55" height="70" fill="#e2e2e2"/><rect x="268" y="246" width="66" height="57" fill="#e2e2e2"/><rect x="359" y="89" width="126" height="89" fill="#efefef"/><path d="M0 146 C 120 87, 240 140, 400 175" stroke="#fafafa" stroke-width="6" fill="none"/><path d="M0 229 C 120 227, 240 307, 400 269" stroke="#fafafa" stroke-width="6" fill="none"/><path d="M0 406 C 120 485, 240 391, 400 397" stroke="#fafafa" stroke-width="8" fill="none"/><path d="M0 183 C 120 219, 240 106, 400 190" stroke="#fafafa" stroke-width="8" fill="none"/><path d="M0 404 C 120 386, 240 407, 400 380" stroke="#fafafa" stroke-width="6" fill="none"/><path d="M0 65 C 120 132, 240 21, 400 110" stroke="#fafafa" stroke-width="6" fill="none"/><path d="M0 153 C 120 79, 240 197, 400 125" stroke="#fafafa" stroke-width="6" fill="none"/><path d="M0 471 C 120 527, 240 500, 400 525" stroke="#fafafa" stroke-width="8" fill="none"/><path d="M0 86 C 120 153, 240 97, 400 110" stroke="#fafafa" stroke-width="6" fill="none"/><path d="M112 0 C 148 172, 74 345, 159 575" stroke="#fafafa" stroke-width="8" fill="none"/><path d="M375 0 C 391 172, 412 345, 325 575" stroke="#fafafa" stroke-width="6" fill="none"/><path d="M27 0 C 70 172, 21 345, 7 575" stroke="#fafafa" stroke-width="12" fill="none"/><path d="M167 0 C 217 172, 182 345, 112 575" stroke="#fafafa" stroke-width="12" fill="none"/><path d="M95 0 C 49 172, 55 345, 41 575" stroke="#fafafa" stroke-width="6" fill="none"/><path d="M373 0 C 388 172, 377 345, 338 575" stroke="#fafafa" stroke-width="8" fill="none"/><path d="M200 0 C 161 172, 182 345, 142 575" stroke="#fafafa" stroke-width="8" fill="none"/><path d="M15 0 C -43 172, 15 345, 72 575" stroke="#fafafa" stroke-width="12" fill="none"/><path d="M190 0 C 242 172, 143 345, 228 575" stroke="#fafafa" stroke-width="8" fill="none"/><path d="M263 0 C 268 172, 309 345, 319 575" stroke="#fafafa" stroke-width="8" fill="none"/><rect x="237" y="545" width="26" height="12" rx="3" fill="#bdbdbd" opacity=".8"/><rect x="285" y="395" width="32" height="12" rx="3" fill="#bdbdbd" opacity=".8"/><rect x="144" y="199" width="19" height="12" rx="3" fill="#bdbdbd" opacity=".8"/><rect x="53" y="49" width="34" height="12" rx="3" fill="#bdbdbd" opacity=".8"/><rect x="94" y="99" width="20" height="12" rx="3" fill="#bdbdbd" opacity=".8"/><rect x="288" y="484" width="33" height="12" rx="3" fill="#bdbdbd" opacity=".8"/><rect x="103" y="142" width="24" height="12" rx="3" fill="#bdbdbd" opacity=".8"/><rect x="162" y="96" width="28" height="12" rx="3" fill="#bdbdbd" opacity=".8"/><rect x="97" y="534" width="39" height="12" rx="3" fill="#bdbdbd" opacity=".8"/><rect x="191" y="143" width="39" height="12" rx="3" fill="#bdbdbd" opacity=".8"/><rect x="112" y="204" width="18" height="12" rx="3" fill="#bdbdbd" opacity=".8"/><rect x="136" y="269" width="29" height="12" rx="3" fill="#bdbdbd" opacity=".8"/><rect x="76" y="285" width="18" height="12" rx="3" fill="#bdbdbd" opacity=".8"/><rect x="97" y="59" width="27" height="12" rx="3" fill="#bdbdbd" opacity=".8"/><rect x="24" y="22" width="25" height="12" rx="3" fill="#bdbdbd" opacity=".8"/><rect x="87" y="329" width="30" height="12" rx="3" fill="#bdbdbd" opacity=".8"/><rect x="258" y="368" width="34" height="12" rx="3" fill="#bdbdbd" opacity=".8"/><rect x="300" y="222" width="25" height="12" rx="3" fill="#bdbdbd" opacity=".8"/><rect x="335" y="91" width="34" height="12" rx="3" fill="#bdbdbd" opacity=".8"/><rect x="222" y="34" width="36" height="12" rx="3" fill="#bdbdbd" opacity=".8"/><rect x="304" y="352" width="34" height="12" rx="3" fill="#bdbdbd" opacity=".8"/><rect x="278" y="86" width="30" height="12" rx="3" fill="#bdbdbd" opacity=".8"/><rect x="176" y="465" width="36" height="12" rx="3" fill="#bdbdbd" opacity=".8"/><rect x="283" y="328" width="38" height="12" rx="3" fill="#bdbdbd" opacity=".8"/><rect x="235" y="388" width="23" height="12" rx="3" fill="#bdbdbd" opacity=".8"/><rect x="20" y="83" width="26" height="12" rx="3" fill="#bdbdbd" opacity=".8"/><rect x="45" y="466" width="30" height="12" rx="3" fill="#bdbdbd" opacity=".8"/><rect x="217" y="351" width="33" height="12" rx="3" fill="#bdbdbd" opacity=".8"/><rect x="171" y="12" width="36" height="12" rx="3" fill="#bdbdbd" opacity=".8"/><rect x="257" y="284" width="30" height="12" rx="3" fill="#bdbdbd" opacity=".8"/><rect x="228" y="46" width="34" height="12" rx="3" fill="#bdbdbd" opacity=".8"/><rect x="93" y="51" width="24" height="12" rx="3" fill="#bdbdbd" opacity=".8"/><rect x="251" y="122" width="34" height="12" rx="3" fill="#bdbdbd" opacity=".8"/><rect x="332" y="279" width="26" height="12" rx="3" fill="#bdbdbd" opacity=".8"/><rect x="168" y="383" width="35" height="12" rx="3" fill="#bdbdbd" opacity=".8"/><rect x="214" y="360" width="20" height="12" rx="3" fill="#bdbdbd" opacity=".8"/></svg><div style="position:absolute;left:0px;top:0px;width:400px;height:90px;background:#fff;"></div><div style="position:absolute;white-space:pre;left:20px;top:13.6px;font-size:14px;line-height:16.8px;color:#222;font-weight:700;">9:41</div><div style="position:absolute;left:330px;top:16px;width:46px;height:12px;background:#444;border-radius:4px;"></div><div style="position:absolute;white-space:pre;left:20px;top:50px;font-size:20px;line-height:24px;color:#222;font-weight:700;">Map Overview</div><div style="position:absolute;left:300px;top:45px;width:30px;height:30px;background:#f08a24;border-radius:6px;"></div><div style="position:absolute;left:16px;top:105px;width:215px;height:105px;background:#fff;border-radius:8px;"></div><div style="position:absolute;left:30px;top:120px;width:34px;height:34px;background:#f5c33b;border-radius:7px;"></div><div style="position:absolute;white-space:pre;left:74px;top:123.4px;font-size:11px;line-height:13.2px;color:#222;font-weight:700;">DR-01 0.8kg</div><div style="position:absolute;white-space:pre;left:74px;top:140px;font-size:10px;line-height:12px;color:#555;">Aug 21 09:30</div><div style="position:absolute;white-space:pre;left:36px;top:169px;font-size:10px;line-height:12px;color:#444;font-weight:700;">Jl. Gubeng Raya</div><div style="position:absolute;white-space:pre;left:36px;top:186px;font-size:10px;line-height:12px;color:#222;font-weight:700;">Jl. Raya Wiyung</div><div style="position:absolute;left:245px;top:105px;width:215px;height:105px;background:#fff;border-radius:8px;"></div><div style="position:absolute;left:259px;top:120px;width:34px;height:34px;background:#f03cf0;border-radius:7px;"></div><div style="position:absolute;white-space:pre;left:303px;top:123.4px;font-size:11px;line-height:13.2px;color:#222;font-weight:700;">DR-01 0.8kg</div><div style="position:absolute;white-space:pre;left:303px;top:140px;font-size:10px;line-height:12px;color:#555;">Aug 21 09:30</div><div style="position:absolute;white-space:pre;left:265px;top:169px;font-size:10px;line-height:12px;color:#444;font-weight:700;">Jl. Gubeng Raya</div><div style="position:absolute;white-space:pre;left:265px;top:186px;font-size:10px;line-height:12px;color:#222;font-weight:700;">Jl. Raya Wiyung</div><div style="position:absolute;left:108px;top:322px;width:24px;height:24px;background:#f03cf0;border-radius:5px;"></div><div style="position:absolute;left:205px;top:300px;width:175px;height:330px;background:#fff;border-radius:8px;box-shadow:0 4px 20px rgba(0,0,0,.18)"></div><div style="position:absolute;left:220px;top:315px;width:30px;height:30px;background:#f5c33b;border-radius:6px;"></div><div style="position:absolute;white-space:pre;left:258px;top:319px;font-size:10px;line-height:12px;color:#222;font-weight:700;">DR-01</div><div style="position:absolute;left:320px;top:320px;width:44px;height:12px;background:#4db86a;border-radius:3px;"></div><div style="position:absolute;white-space:pre;left:222px;top:369.6px;font-size:9px;line-height:10.8px;color:#9aa0ab;">Request</div><div style="position:absolute;white-space:pre;left:368px;top:369.6px;font-size:9px;line-height:10.8px;color:#333;font-weight:700;transform:translateX(-100%)">Documents</div><div style="position:absolute;white-space:pre;left:222px;top:396.6px;font-size:9px;line-height:10.8px;color:#9aa0ab;">Request</div><div style="position:absolute;white-space:pre;left:368px;top:396.6px;font-size:9px;line-height:10.8px;color:#333;font-weight:700;transform:translateX(-100%)">Documents</div><div style="position:absolute;white-space:pre;left:222px;top:423.6px;font-size:9px;line-height:10.8px;color:#9aa0ab;">Request</div><div style="position:absolute;white-space:pre;left:368px;top:423.6px;font-size:9px;line-height:10.8px;color:#333;font-weight:700;transform:translateX(-100%)">Documents</div><div style="position:absolute;white-space:pre;left:222px;top:450.6px;font-size:9px;line-height:10.8px;color:#9aa0ab;">Request</div><div style="position:absolute;white-space:pre;left:368px;top:450.6px;font-size:9px;line-height:10.8px;color:#333;font-weight:700;transform:translateX(-100%)">Documents</div><div style="position:absolute;white-space:pre;left:222px;top:477.6px;font-size:9px;line-height:10.8px;color:#9aa0ab;">Request</div><div style="position:absolute;white-space:pre;left:368px;top:477.6px;font-size:9px;line-height:10.8px;color:#333;font-weight:700;transform:translateX(-100%)">Documents</div><div style="position:absolute;white-space:pre;left:222px;top:504.6px;font-size:9px;line-height:10.8px;color:#9aa0ab;">Request</div><div style="position:absolute;white-space:pre;left:368px;top:504.6px;font-size:9px;line-height:10.8px;color:#333;font-weight:700;transform:translateX(-100%)">Documents</div><div style="position:absolute;white-space:pre;left:222px;top:531.6px;font-size:9px;line-height:10.8px;color:#9aa0ab;">Request</div><div style="position:absolute;white-space:pre;left:368px;top:531.6px;font-size:9px;line-height:10.8px;color:#333;font-weight:700;transform:translateX(-100%)">Documents</div><div style="position:absolute;white-space:pre;left:222px;top:558.6px;font-size:9px;line-height:10.8px;color:#9aa0ab;">Request</div><div style="position:absolute;white-space:pre;left:368px;top:558.6px;font-size:9px;line-height:10.8px;color:#333;font-weight:700;transform:translateX(-100%)">Documents</div><div style="position:absolute;white-space:pre;left:222px;top:585.6px;font-size:9px;line-height:10.8px;color:#9aa0ab;">Request</div><div style="position:absolute;white-space:pre;left:368px;top:585.6px;font-size:9px;line-height:10.8px;color:#333;font-weight:700;transform:translateX(-100%)">Documents</div><svg style="position:absolute;left:0;top:0" width="396" height="858"><polyline points="118,345 150,420 170,520 200,640 215,655" fill="none" stroke="#5b8de8" stroke-width="5"/></svg><div style="position:absolute;white-space:pre;left:95px;top:512.8px;font-size:12px;line-height:14.4px;color:#333;font-weight:700;">Sugiharto</div><div style="position:absolute;left:0px;top:785px;width:400px;height:103px;background:#417de1;"></div><div style="position:absolute;left:0px;top:785px;width:80px;height:103px;background:rgba(255,255,255,.9);"></div><div style="position:absolute;left:28px;top:810px;width:24px;height:24px;background:#417de1;border-radius:5px;"></div><div style="position:absolute;left:130px;top:810px;width:24px;height:24px;background:rgba(255,255,255,.8);border-radius:6px;"></div><div style="position:absolute;left:225px;top:810px;width:24px;height:24px;background:rgba(255,255,255,.8);border-radius:6px;"></div><div style="position:absolute;left:320px;top:810px;width:24px;height:24px;background:rgba(255,255,255,.8);border-radius:6px;"></div></div></div>
<div class="abs" style="left:305.4px;top:76.0px;width:66.4px;height:14.6px;background:#b8d9f8"></div><div class="t" style="left:309.80px;top:78.78px;font-size:7.70px;line-height:9.24px;font-weight:700;letter-spacing:-0.558px;color:#1c2530;">Flow 1 Laptop</div><svg style="left:362.0px;top:79.9px" width="5.4" height="7" viewBox="0 0 11 14"><path d="M1 1 L10 7 L1 13 Z" fill="none" stroke="#1c2530" stroke-width="1.5" stroke-linejoin="round"/></svg>
<div class="abs" style="left:442.2px;top:76.0px;width:66.4px;height:14.6px;background:#b8d9f8"></div><div class="t" style="left:446.60px;top:78.78px;font-size:7.70px;line-height:9.24px;font-weight:700;letter-spacing:-0.460px;color:#1c2530;">Flow 2 Mobile</div><svg style="left:498.8px;top:79.9px" width="5.4" height="7" viewBox="0 0 11 14"><path d="M1 1 L10 7 L1 13 Z" fill="none" stroke="#1c2530" stroke-width="1.5" stroke-linejoin="round"/></svg>
<div class="abs" style="left:372.1px;top:68.0px;width:7px;height:7px;border-radius:50%;background:radial-gradient(circle at 40% 30%,#d84a42,#8e1418);opacity:.75"></div><div class="t" style="left:384.80px;top:66.82px;font-size:7.80px;line-height:9.36px;letter-spacing:-0.304px;color:#858585;">Desktop 01 - login</div>
<div class="abs" style="left:508.4px;top:68.0px;width:7px;height:7px;border-radius:1px;background:#7a2ea0;opacity:.9"></div><div class="t" style="left:521.10px;top:66.82px;font-size:7.80px;line-height:9.36px;letter-spacing:-0.567px;color:#858585;">Mo...</div>
<div class="abs" style="left:117.7px;top:170.3px;width:7px;height:7px;border-radius:50%;background:radial-gradient(circle at 40% 30%,#d9933a,#9a5206);opacity:.75"></div><div class="t" style="left:130.40px;top:169.12px;font-size:7.80px;line-height:9.36px;letter-spacing:-0.305px;color:#858585;">Desktop 2 - Dashboard</div>
<div class="abs" style="left:245.7px;top:170.3px;width:7px;height:7px;border-radius:50%;background:radial-gradient(circle at 40% 30%,#d9933a,#9a5206);opacity:.75"></div><div class="t" style="left:258.40px;top:169.12px;font-size:7.80px;line-height:9.36px;letter-spacing:-0.305px;color:#858585;">Desktop 2 - Dashboard</div>
<div class="abs" style="left:372.1px;top:170.3px;width:7px;height:7px;border-radius:50%;background:radial-gradient(circle at 40% 30%,#d9933a,#9a5206);opacity:.75"></div><div class="t" style="left:384.80px;top:169.12px;font-size:7.80px;line-height:9.36px;letter-spacing:-0.305px;color:#858585;">Desktop 2 - Dashboard</div>
<div class="abs" style="left:508.4px;top:170.3px;width:7px;height:7px;border-radius:1px;background:#2a6a24"></div><svg style="left:509.4px;top:171.3px" width="5" height="5" viewBox="0 0 10 10"><path d="M1.5 5 L4 7.8 L8.5 1.5" fill="none" stroke="#86a684" stroke-width="1.8"/></svg><div class="t" style="left:521.10px;top:169.12px;font-size:7.80px;line-height:9.36px;letter-spacing:-0.567px;color:#858585;">Mo...</div>
<div class="abs" style="left:245.7px;top:295.3px;width:7px;height:7px;border-radius:50%;background:radial-gradient(circle at 40% 30%,#3fae3a,#0d6a12);opacity:.75"></div><div class="t" style="left:258.40px;top:294.12px;font-size:7.80px;line-height:9.36px;letter-spacing:-0.221px;color:#858585;">Desktop 3 - order</div>
<div class="abs" style="left:245.7px;top:393.8px;width:7px;height:7px;border-radius:50%;background:radial-gradient(circle at 40% 30%,#3a7be0,#123a9a);opacity:.75"></div><div class="t" style="left:258.40px;top:392.62px;font-size:7.80px;line-height:9.36px;letter-spacing:-0.257px;color:#858585;">Desktop 4 - map overview</div>
<div class="abs" style="left:372.1px;top:295.3px;width:7px;height:7px;border-radius:50%;background:radial-gradient(circle at 40% 30%,#3fae3a,#0d6a12);opacity:.75"></div><div class="t" style="left:384.80px;top:294.12px;font-size:7.80px;line-height:9.36px;letter-spacing:-0.221px;color:#858585;">Desktop 3 - order</div>
<div class="abs" style="left:372.1px;top:393.8px;width:7px;height:7px;border-radius:50%;background:radial-gradient(circle at 40% 30%,#3a7be0,#123a9a);opacity:.75"></div><div class="t" style="left:384.80px;top:392.62px;font-size:7.80px;line-height:9.36px;letter-spacing:-0.257px;color:#858585;">Desktop 4 - map overview</div>
<div class="abs" style="left:509.2px;top:295.3px;width:5.4px;height:7px;border-radius:.8px;background:#a8651a"></div><div class="t" style="left:521.10px;top:294.12px;font-size:7.80px;line-height:9.36px;letter-spacing:-0.567px;color:#858585;">Mo...</div>
<div class="abs" style="left:508.4px;top:393.8px;width:7px;height:7px;border-radius:1px;background:#7a2ea0;opacity:.9"></div><div class="t" style="left:521.10px;top:392.62px;font-size:7.80px;line-height:9.36px;letter-spacing:-0.567px;color:#858585;">Mo...</div>
<svg style="left:0;top:0" width="720" height="521" viewBox="160 64 720 521">
<g fill="none" stroke="#a8d0f7" stroke-width="1.25" stroke-linecap="round" stroke-linejoin="round">
<path d="M282.9 245.9 C292.4 245.8 317.1 245.9 340.0 245.6 C362.9 245.2 393.3 244.4 420.0 243.8 C446.7 243.2 476.7 242.7 500.0 242.0 C523.3 241.3 546.0 240.7 560.0 239.5 C574.0 238.3 578.8 236.5 584.0 235.0 C589.2 233.5 589.8 231.8 591.3 230.5 C592.8 229.2 592.5 227.8 592.7 227.2"/>
<path d="M410.7 245.5 C420.6 245.3 450.1 245.2 470.0 244.6 C489.9 244.0 512.5 243.1 530.0 242.0 C547.5 240.9 565.2 239.6 575.0 238.0 C584.8 236.4 586.0 234.3 589.0 232.5 C592.0 230.7 592.1 228.1 592.7 227.2"/>
<path d="M536.8 245.3 C541.5 244.8 557.0 244.1 565.0 242.5 C573.0 240.9 580.6 237.9 585.0 236.0 C589.4 234.1 590.2 232.5 591.5 231.0 C592.8 229.5 592.5 227.8 592.7 227.2"/>
<path d="M410.9 370.5 C416.6 370.0 434.3 369.1 445.0 367.5 C455.7 365.9 465.8 363.8 475.0 360.8 C484.2 357.9 491.9 354.1 500.0 349.8 C508.1 345.5 514.1 343.3 523.4 335.0 C532.7 326.7 546.6 312.2 556.0 300.0 C565.4 287.8 574.3 272.3 580.0 262.0 C585.7 251.7 587.9 243.8 590.0 238.0 C592.1 232.2 592.2 229.0 592.7 227.2"/>
<path d="M410.9 468.9 C417.4 468.4 437.6 468.1 450.0 466.0 C462.4 463.9 473.5 460.7 485.0 456.0 C496.5 451.3 508.8 445.3 518.8 438.0 C528.8 430.7 536.8 423.7 545.0 412.0 C553.2 400.3 561.7 386.7 568.0 368.0 C574.3 349.3 579.3 319.7 583.0 300.0 C586.7 280.3 588.4 262.1 590.0 250.0 C591.6 237.9 592.2 231.0 592.7 227.2"/>
<path d="M536.8 469.0 C540.7 468.5 552.8 471.7 560.0 466.0 C567.2 460.3 575.2 454.3 580.0 435.0 C584.8 415.7 587.1 377.5 589.0 350.0 C590.9 322.5 590.9 290.5 591.5 270.0 C592.1 249.5 592.5 234.3 592.7 227.2"/>
<path d="M503.0 370.4 C508.0 370.3 522.5 371.7 532.8 370.0 C543.1 368.3 556.5 366.7 565.0 360.0 C573.5 353.3 579.7 345.8 584.0 330.0 C588.3 314.2 589.5 282.1 591.0 265.0 C592.5 247.9 592.4 233.5 592.7 227.2"/>
<path d="M624.3 188.0 C623.8 190.7 623.9 198.7 621.0 204.0 C618.1 209.3 611.3 215.5 607.0 220.0 C602.7 224.5 597.4 227.3 595.0 231.0 C592.6 234.7 593.1 240.2 592.7 242.0"/>
<path d="M282.9 257.6 C290.5 257.7 316.2 257.7 328.8 258.4 C341.4 259.1 348.4 260.2 358.2 261.7 C368.0 263.2 377.3 265.2 387.6 267.6 C397.9 270.1 406.6 272.7 420.0 276.4 C433.4 280.1 453.0 285.1 468.0 290.0 C483.0 294.9 496.3 300.0 510.0 306.0 C523.7 312.0 538.7 319.8 550.0 326.0 C561.3 332.2 571.3 338.5 578.0 343.0 C584.7 347.5 587.5 349.0 590.0 353.0 C592.5 357.0 592.2 364.7 592.7 367.0"/>
<path d="M282.9 262.2 C288.1 262.5 304.0 263.0 314.1 263.9 C324.2 264.8 333.7 265.8 343.5 267.6 C353.3 269.5 363.1 272.4 372.9 275.0 C382.7 277.6 393.0 281.0 402.4 283.0 C411.8 285.0 421.6 285.4 429.3 286.9 C437.0 288.4 442.3 290.1 448.8 291.8 C455.3 293.5 458.2 293.5 468.4 297.0 C478.6 300.5 498.4 306.7 510.0 313.0 C521.6 319.3 530.8 325.8 538.0 335.0 C545.2 344.2 547.7 355.8 553.0 368.0 C558.3 380.2 564.3 395.2 570.0 408.0 C575.7 420.8 583.2 435.5 587.0 445.0 C590.8 454.5 591.8 461.7 592.7 465.0"/>
<path d="M311.5 276.1 C321.7 276.3 359.0 276.5 372.9 277.2 C386.8 277.9 387.1 278.8 395.0 280.1 C402.9 281.5 409.2 282.8 420.0 285.3 C430.8 287.8 445.0 290.6 460.0 295.0 C475.0 299.4 494.2 305.5 510.0 312.0 C525.8 318.5 542.5 327.5 555.0 334.0 C567.5 340.5 578.7 345.5 585.0 351.0 C591.3 356.5 591.4 364.3 592.7 367.0"/>
<path d="M410.7 257.1 C415.4 257.3 429.4 256.9 439.0 258.1 C448.6 259.3 458.2 261.9 468.4 264.4 C478.6 266.9 492.5 270.5 500.0 273.2 C507.5 275.9 509.1 277.8 513.6 280.8 C518.1 283.9 523.9 289.0 527.0 291.5 C530.1 294.0 531.2 295.2 532.0 296.0"/>
<path d="M410.7 262.0 C413.8 262.2 421.3 261.8 429.3 263.0 C437.3 264.2 450.5 267.1 458.6 269.3 C466.7 271.5 471.2 273.3 478.1 276.1 C485.0 278.9 491.4 281.4 500.0 285.9 C508.6 290.4 522.0 294.8 530.0 303.0 C538.0 311.2 543.0 323.5 548.0 335.0 C553.0 346.5 555.3 358.7 560.0 372.0 C564.7 385.3 571.2 402.3 576.0 415.0 C580.8 427.7 586.2 439.7 589.0 448.0 C591.8 456.3 592.1 462.2 592.7 465.0"/>
<path d="M439.5 276.1 C444.3 276.4 458.3 276.5 468.4 277.6 C478.5 278.8 488.1 279.3 500.0 283.0 C511.9 286.7 528.0 292.5 540.0 300.0 C552.0 307.5 564.0 319.7 572.0 328.0 C580.0 336.3 584.5 343.5 588.0 350.0 C591.5 356.5 591.9 364.2 592.7 367.0"/>
<path d="M534.7 258.8 C537.6 259.3 545.3 257.6 552.0 262.0 C558.7 266.4 569.0 274.5 575.0 285.0 C581.0 295.5 585.0 311.3 588.0 325.0 C591.0 338.7 591.9 360.0 592.7 367.0"/>
<path d="M534.7 263.5 C536.4 264.9 542.0 267.6 545.0 272.0 C548.0 276.4 550.0 282.3 553.0 290.0 C556.0 297.7 559.8 308.0 563.0 318.0 C566.2 328.0 569.2 336.3 572.0 350.0 C574.8 363.7 577.0 383.7 580.0 400.0 C583.0 416.3 587.9 437.2 590.0 448.0 C592.1 458.8 592.2 462.2 592.7 465.0"/>
<path d="M563.1 276.7 C563.3 282.2 563.0 300.3 564.5 310.0 C566.0 319.7 568.4 328.0 572.0 335.0 C575.6 342.0 582.5 346.7 586.0 352.0 C589.5 357.3 591.6 364.5 592.7 367.0"/>
<path d="M611.9 315.3 C611.7 319.4 611.1 332.0 610.5 340.0 C609.9 348.0 609.5 353.5 608.2 363.5 C607.0 373.5 605.0 387.2 603.0 400.0 C601.0 412.8 598.2 429.2 596.5 440.0 C594.8 450.8 593.3 460.8 592.7 465.0"/>
<path d="M360.0 315.0 C362.1 313.4 368.3 308.0 372.9 305.1 C377.5 302.2 383.4 299.3 387.6 297.8 C391.8 296.3 395.1 296.3 398.0 296.0 C400.9 295.7 404.0 296.0 405.2 296.0"/>
<path d="M313.3 332.6 C317.0 332.3 328.2 332.9 335.6 330.8 C343.0 328.7 350.9 324.5 357.5 319.9 C364.1 315.3 369.2 306.9 375.0 303.0 C380.8 299.1 387.5 297.6 392.5 296.4 C397.5 295.2 403.1 296.1 405.2 296.0"/>
<path d="M321.4 332.6 C324.5 332.2 333.6 332.5 340.0 330.5 C346.4 328.5 353.8 324.8 360.0 320.5 C366.2 316.2 371.5 308.4 377.0 304.5 C382.5 300.6 388.3 298.4 393.0 297.0 C397.7 295.6 403.2 296.2 405.2 296.0"/>
<path d="M360.0 315.0 C366.7 315.4 390.0 316.6 400.0 317.5 C410.0 318.4 413.0 318.2 420.0 320.5 C427.0 322.8 438.2 329.7 441.8 331.5"/>
<path d="M441.9 332.6 C440.2 330.2 435.6 322.8 432.0 318.0 C428.4 313.2 423.7 307.4 420.0 304.0 C416.3 300.6 413.4 298.8 410.0 297.5 C406.6 296.2 401.2 296.2 399.4 296.0"/>
<path d="M457.5 332.6 C455.4 329.7 449.9 319.9 445.0 315.0 C440.1 310.1 433.5 306.0 428.0 303.0 C422.5 300.0 416.8 298.2 412.0 297.0 C407.2 295.8 401.5 296.2 399.4 296.0"/>
<path d="M487.9 314.7 C490.8 313.2 499.6 308.8 505.0 306.0 C510.4 303.2 515.6 299.7 520.0 298.0 C524.4 296.3 529.7 296.3 531.6 296.0"/>
<path d="M575.9 332.6 C573.2 330.2 565.1 323.1 560.0 318.0 C554.9 312.9 549.2 305.5 545.0 302.0 C540.8 298.5 537.9 297.8 535.0 296.8 C532.1 295.8 528.7 296.1 527.4 296.0"/>
<path d="M584.0 332.6 C581.3 329.8 573.7 321.1 568.0 316.0 C562.3 310.9 555.2 305.2 550.0 302.0 C544.8 298.8 540.8 298.0 537.0 297.0 C533.2 296.0 529.0 296.2 527.4 296.0"/>
<path d="M536.8 370.5 C535.3 369.8 535.2 370.9 528.0 366.5 C520.8 362.1 506.8 351.9 493.8 344.0 C480.8 336.1 463.1 326.2 450.0 319.0 C436.9 311.8 423.4 304.8 415.0 301.0 C406.6 297.2 402.0 296.8 399.4 296.0"/>
<path d="M536.8 377.3 C533.2 375.1 526.6 371.1 515.0 364.0 C503.4 356.9 481.2 343.8 467.0 335.0 C452.8 326.2 441.3 317.5 430.0 311.0 C418.7 304.5 404.5 298.5 399.4 296.0"/>
<path d="M684.9 211.9 L684.9 242.0"/>
<path d="M629.1 245.5 C631.2 247.2 638.6 249.9 642.0 255.8 C645.4 261.7 646.9 274.4 649.4 280.8 C651.9 287.2 653.9 291.5 657.0 294.0 C660.1 296.5 666.1 295.7 667.9 296.0"/>
<path d="M688.7 248.3 C686.8 250.4 680.1 255.1 677.3 260.8 C674.5 266.5 674.8 277.0 671.9 282.6 C669.0 288.2 663.0 292.2 660.0 294.5 C657.0 296.8 654.8 296.1 653.8 296.4"/>
<path d="M679.5 347.1 C679.9 348.9 681.1 354.7 682.0 358.0 C682.9 361.3 684.5 365.5 685.0 367.0"/>
<path d="M686.0 347.1 C686.5 352.6 688.3 366.2 689.0 380.0 C689.7 393.8 690.5 415.8 690.0 430.0 C689.5 444.2 686.7 459.3 686.0 465.2"/>
<path d="M629.7 370.3 C632.2 371.1 640.6 370.9 645.0 375.0 C649.4 379.1 652.2 390.2 656.0 395.0 C659.8 399.8 665.9 402.1 667.9 403.5"/>
<path d="M688.3 373.2 C686.2 375.2 679.5 379.7 676.0 385.0 C672.5 390.3 670.7 400.7 667.0 405.0 C663.3 409.3 656.0 410.0 653.8 411.0"/>
<path d="M688.3 373.2 C686.9 377.7 682.5 389.7 680.0 400.0 C677.5 410.3 674.3 429.2 673.2 435.0"/>
<path d="M688.3 373.2 C688.2 378.5 687.9 394.7 687.5 405.0 C687.1 415.3 686.2 430.0 685.9 435.0"/>
<path d="M673.2 435.0 C674.8 437.5 681.0 445.0 683.0 450.0 C685.0 455.0 685.1 462.7 685.5 465.2"/>
<path d="M685.9 435.0 C686.0 437.5 686.2 445.0 686.2 450.0 C686.2 455.0 685.9 462.7 685.8 465.2"/>
<path d="M629.7 469.4 C632.2 470.3 640.5 470.7 645.0 475.0 C649.5 479.3 653.2 490.7 657.0 495.0 C660.8 499.3 666.1 500.0 667.9 501.0"/>
<path d="M688.3 471.0 C686.2 473.0 679.5 477.7 676.0 483.0 C672.5 488.3 670.7 498.7 667.0 503.0 C663.3 507.3 656.0 508.0 653.8 509.0"/>
<path d="M688.3 471.0 C686.9 475.8 682.5 489.6 680.0 500.0 C677.5 510.4 674.3 527.7 673.2 533.2"/>
<path d="M688.3 471.0 C687.8 475.8 686.4 489.6 685.0 500.0 C683.6 510.4 680.8 527.7 680.0 533.2"/>
<path d="M521.2 486.9 C525.2 484.8 537.1 476.2 545.0 474.0 C552.9 471.8 556.5 469.6 568.8 473.4 C581.0 477.2 605.2 492.2 618.8 496.9 C632.3 501.6 641.8 500.7 650.0 501.5 C658.2 502.3 664.9 501.6 667.9 501.6"/>
<path d="M429.1 401.8 C435.9 402.0 456.5 402.0 470.0 403.0 C483.5 404.0 499.7 406.8 510.0 408.0 C520.3 409.2 528.0 410.1 531.6 410.5"/>
<path d="M545.3 406.2 C544.1 406.6 541.0 407.8 538.0 408.5 C535.0 409.2 529.2 410.2 527.4 410.5"/>
<path d="M500.2 444.5 C500.5 442.1 502.1 434.3 502.0 430.0 C501.9 425.7 501.4 421.1 499.5 418.5 C497.6 415.9 492.0 415.0 490.5 414.3"/>
<path d="M625.6 443.8 C625.9 441.5 627.6 434.1 627.5 430.0 C627.4 425.9 626.9 421.5 625.0 419.0 C623.1 416.5 617.5 415.7 616.0 415.0"/>
<path d="M410.9 377.2 C420.8 376.9 449.7 376.3 470.0 375.5 C490.3 374.7 517.0 374.1 532.8 372.5 C548.6 370.9 556.1 368.4 565.0 366.0 C573.9 363.6 581.4 360.3 586.0 358.0 C590.6 355.7 591.6 353.0 592.7 352.0"/>
<path d="M410.9 476.1 C419.1 475.4 441.8 475.5 460.0 472.0 C478.2 468.5 503.3 463.7 520.0 455.0 C536.7 446.3 549.2 432.5 560.0 420.0 C570.8 407.5 579.5 391.3 585.0 380.0 C590.5 368.7 591.4 356.7 592.7 352.0"/>
<path d="M410.9 480.6 C420.8 480.3 448.5 480.4 470.0 479.0 C491.5 477.6 521.7 474.8 540.0 472.5 C558.3 470.2 571.2 467.7 580.0 465.0 C588.8 462.3 590.6 457.9 592.7 456.5"/>
<path d="M521.2 486.9 C520.6 488.2 517.5 492.0 517.5 495.0 C517.5 498.0 518.6 502.7 521.0 505.0 C523.4 507.3 529.8 508.1 531.6 508.8"/>
<path d="M540.6 487.5 C539.7 489.1 537.2 493.5 535.0 497.0 C532.8 500.5 528.7 506.8 527.4 508.8"/>
<path d="M597.5 508.8 C591.2 508.8 571.7 508.8 560.0 508.8 C548.3 508.8 532.8 508.8 527.4 508.8"/>
<path d="M536.8 386.7 C540.7 387.6 552.0 384.8 560.0 392.0 C568.0 399.2 579.5 417.8 585.0 430.0 C590.5 442.2 591.4 459.2 592.7 465.0"/>
<path d="M410.9 386.8 C419.8 387.3 449.7 388.0 464.3 389.9 C478.9 391.8 489.2 395.7 498.5 398.4 C507.8 401.1 514.5 404.0 520.0 406.0 C525.5 408.0 529.7 409.5 531.6 410.2"/>
<path d="M536.8 475.8 C541.5 474.8 556.8 477.6 565.0 470.0 C573.2 462.4 581.5 445.0 586.0 430.0 C590.5 415.0 591.2 393.0 592.3 380.0 C593.4 367.0 592.6 356.7 592.7 352.0"/>
<path d="M536.8 480.4 C541.5 480.0 556.8 480.1 565.0 478.0 C573.2 475.9 581.4 471.6 586.0 468.0 C590.6 464.4 591.6 458.4 592.7 456.5"/>
<path d="M503.1 469.4 C505.9 469.2 514.9 468.9 520.0 468.5 C525.1 468.1 531.7 467.4 534.0 467.2"/>
<path d="M521.6 444.6 C517.8 445.9 506.3 450.1 498.5 452.3 C490.7 454.5 480.2 456.4 475.0 458.0 C469.8 459.6 468.4 460.8 467.0 462.0 C465.6 463.2 466.4 464.8 466.3 465.3"/>
<path d="M521.6 444.6 C523.8 443.5 530.9 440.1 535.0 438.0 C539.1 435.9 540.2 435.6 546.0 431.8 C551.8 428.0 563.0 422.8 570.0 415.0 C577.0 407.2 584.2 395.5 588.0 385.0 C591.8 374.5 591.9 357.5 592.7 352.0"/>
<path d="M642.7 446.3 C640.6 447.8 635.5 453.0 630.0 455.0 C624.5 457.0 615.7 457.6 610.0 458.5 C604.3 459.4 598.9 459.4 596.0 460.5 C593.1 461.6 593.2 464.2 592.7 465.0"/>
<path d="M536.8 370.5 C538.7 372.9 543.1 376.8 548.0 385.0 C552.9 393.2 559.7 409.2 566.0 420.0 C572.3 430.8 581.5 442.5 586.0 450.0 C590.5 457.5 591.6 462.5 592.7 465.0"/>
<path d="M536.8 377.3 C538.2 379.8 540.8 384.1 545.0 392.0 C549.2 399.9 555.3 415.0 562.0 425.0 C568.7 435.0 579.9 445.3 585.0 452.0 C590.1 458.7 591.4 462.8 592.7 465.0"/>
<path d="M554.0 349.0 C554.3 354.2 553.7 368.2 556.0 380.0 C558.3 391.8 562.8 408.3 568.0 420.0 C573.2 431.7 582.9 442.5 587.0 450.0 C591.1 457.5 591.8 462.5 592.7 465.0"/>
<path d="M592.7 367.0 C592.8 374.2 593.2 396.2 593.2 410.0 C593.2 423.8 593.0 440.8 592.9 450.0 C592.8 459.2 592.7 462.5 592.7 465.0"/>
<path d="M536.8 474.4 C543.3 475.7 563.1 478.6 576.0 482.0 C588.9 485.4 601.5 491.9 614.0 495.0 C626.5 498.1 642.0 499.4 651.0 500.3 C660.0 501.2 665.1 500.4 667.9 500.4"/>
<path d="M540.3 487.6 C543.6 488.3 550.0 490.3 560.0 492.0 C570.0 493.7 586.7 496.6 600.0 498.0 C613.3 499.4 628.7 500.0 640.0 500.5 C651.3 501.0 663.2 500.8 667.9 500.8"/>
<path d="M457.5 332.6 C461.2 331.8 472.1 330.9 480.0 328.0 C487.9 325.1 498.0 319.5 505.0 315.0 C512.0 310.5 517.6 304.2 522.0 301.0 C526.4 297.8 530.0 296.8 531.6 296.0"/>
<path d="M421.0 314.3 C419.5 312.8 414.7 307.6 412.0 305.0 C409.3 302.4 407.1 300.0 405.0 298.5 C402.9 297.0 400.3 296.4 399.4 296.0"/>
<path d="M429.8 314.3 C427.8 312.6 421.8 306.7 418.0 304.0 C414.2 301.3 410.1 299.3 407.0 298.0 C403.9 296.7 400.7 296.3 399.4 296.0"/>
<path d="M575.9 332.6 C576.9 334.2 579.6 339.1 582.0 342.0 C584.4 344.9 588.2 345.8 590.0 350.0 C591.8 354.2 592.2 364.2 592.7 367.0"/>
<path d="M592.7 227.2 L593.3 232.0 M592.7 227.2 L588.9 230.1 M592.7 227.2 L592.3 232.0 M592.7 227.2 L588.4 229.3 M592.7 227.2 L593.7 231.9 M592.7 227.2 L589.2 230.5 M592.7 227.2 L594.0 231.8 M592.7 227.2 L589.4 230.7 M592.7 227.2 L594.6 231.6 M592.7 227.2 L589.8 231.1 M592.7 227.2 L595.0 231.4 M592.7 227.2 L590.2 231.3 M592.7 227.2 L594.9 231.5 M592.7 227.2 L590.1 231.3 M592.7 242.0 L591.2 237.4 M592.7 242.0 L595.9 238.4 M592.7 367.0 L589.6 363.4 M592.7 367.0 L594.3 362.5 M592.7 465.0 L589.3 461.6 M592.7 465.0 L593.9 460.3 M592.7 367.0 L588.7 364.3 M592.7 367.0 L593.0 362.2 M532.0 296.0 L527.3 295.0 M532.0 296.0 L530.5 291.4 M592.7 465.0 L589.5 461.4 M592.7 465.0 L594.1 460.4 M592.7 367.0 L589.3 363.6 M592.7 367.0 L593.9 362.3 M592.7 367.0 L589.9 363.1 M592.7 367.0 L594.6 362.6 M592.7 465.0 L589.7 461.3 M592.7 465.0 L594.4 460.5 M592.7 367.0 L588.8 364.2 M592.7 367.0 L593.2 362.2 M592.7 465.0 L591.0 460.5 M592.7 465.0 L595.7 461.2 M405.2 296.0 L401.0 298.4 M405.2 296.0 L401.0 293.6 M405.2 296.0 L401.1 298.5 M405.2 296.0 L401.0 293.7 M405.2 296.0 L401.2 298.7 M405.2 296.0 L400.9 294.0 M399.4 296.0 L403.9 294.2 M399.4 296.0 L403.2 298.9 M399.4 296.0 L403.7 294.0 M399.4 296.0 L403.4 298.7 M531.6 296.0 L527.9 299.1 M531.6 296.0 L527.1 294.4 M527.4 296.0 L531.8 294.1 M527.4 296.0 L531.3 298.8 M527.4 296.0 L531.8 294.1 M527.4 296.0 L531.3 298.8 M399.4 296.0 L404.1 295.0 M399.4 296.0 L402.6 299.5 M399.4 296.0 L404.2 295.7 M399.4 296.0 L402.1 300.0 M684.9 242.0 L682.5 237.8 M684.9 242.0 L687.3 237.8 M667.9 296.0 L663.4 297.6 M667.9 296.0 L664.2 292.9 M653.8 296.4 L657.1 292.9 M653.8 296.4 L658.5 297.5 M685.0 367.0 L681.4 363.8 M685.0 367.0 L685.9 362.3 M686.0 465.2 L684.1 460.8 M686.0 465.2 L688.8 461.3 M667.9 403.5 L663.1 403.0 M667.9 403.5 L665.9 399.1 M653.8 411.0 L656.6 407.1 M653.8 411.0 L658.6 411.4 M685.5 465.2 L682.5 461.5 M685.5 465.2 L687.2 460.7 M685.8 465.2 L683.5 461.0 M685.8 465.2 L688.3 461.1 M667.9 501.0 L663.1 501.1 M667.9 501.0 L665.4 496.9 M653.8 509.0 L656.6 505.1 M653.8 509.0 L658.6 509.4 M667.9 501.6 L663.7 504.0 M667.9 501.6 L663.7 499.2 M531.6 410.5 L527.2 412.4 M531.6 410.5 L527.7 407.7 M527.4 410.5 L531.1 407.4 M527.4 410.5 L531.9 412.1 M490.5 414.3 L495.3 413.9 M490.5 414.3 L493.3 418.2 M616.0 415.0 L620.8 414.5 M616.0 415.0 L618.8 418.9 M592.7 352.0 L591.2 356.6 M592.7 352.0 L588.0 353.0 M592.7 352.0 L593.9 356.6 M592.7 352.0 L589.3 355.4 M592.7 456.5 L590.6 460.8 M592.7 456.5 L587.9 456.8 M531.6 508.8 L526.9 509.6 M531.6 508.8 L528.5 505.1 M527.4 508.8 L527.7 504.0 M527.4 508.8 L531.7 506.5 M527.4 508.8 L531.6 506.4 M527.4 508.8 L531.6 511.1 M592.7 465.0 L589.5 461.4 M592.7 465.0 L594.1 460.4 M531.6 410.2 L526.9 411.0 M531.6 410.2 L528.5 406.5 M592.7 352.0 L595.0 356.2 M592.7 352.0 L590.3 356.1 M592.7 456.5 L592.7 461.3 M592.7 456.5 L588.5 458.9 M466.3 465.3 L464.8 460.7 M466.3 465.3 L469.5 461.7 M592.7 352.0 L594.5 356.5 M592.7 352.0 L589.8 355.8 M592.7 465.0 L593.2 460.2 M592.7 465.0 L597.1 463.1 M592.7 465.0 L588.8 462.2 M592.7 465.0 L593.2 460.2 M592.7 465.0 L588.5 462.6 M592.7 465.0 L592.6 460.2 M592.7 465.0 L589.0 462.0 M592.7 465.0 L593.4 460.3 M667.9 500.4 L663.7 502.8 M667.9 500.4 L663.7 498.0 M667.9 500.8 L663.7 503.1 M667.9 500.8 L663.8 498.4 M531.6 296.0 L529.0 300.0 M531.6 296.0 L526.8 295.8 M399.4 296.0 L404.2 295.5 M399.4 296.0 L402.2 299.9 M399.4 296.0 L404.0 294.8 M399.4 296.0 L402.8 299.4"/>
</g>
<g fill="#fff" stroke="#a8d0f7" stroke-width="1.1">
<circle cx="282.9" cy="245.9" r="3.1"/>
<circle cx="410.7" cy="245.5" r="3.1"/>
<circle cx="536.8" cy="245.3" r="3.1"/>
<circle cx="410.9" cy="370.5" r="3.1"/>
<circle cx="410.9" cy="468.9" r="3.1"/>
<circle cx="536.8" cy="469.0" r="3.1"/>
<circle cx="503.0" cy="370.4" r="3.1"/>
<circle cx="624.3" cy="188.0" r="3.1"/>
<circle cx="282.9" cy="257.6" r="3.1"/>
<circle cx="282.9" cy="262.2" r="3.1"/>
<circle cx="311.5" cy="276.1" r="3.1"/>
<circle cx="410.7" cy="257.1" r="3.1"/>
<circle cx="410.7" cy="262.0" r="3.1"/>
<circle cx="439.5" cy="276.1" r="3.1"/>
<circle cx="534.7" cy="258.8" r="3.1"/>
<circle cx="534.7" cy="263.5" r="3.1"/>
<circle cx="563.1" cy="276.7" r="3.1"/>
<circle cx="611.9" cy="315.3" r="3.1"/>
<circle cx="360.0" cy="315.0" r="3.1"/>
<circle cx="313.3" cy="332.6" r="3.1"/>
<circle cx="321.4" cy="332.6" r="3.1"/>
<circle cx="441.9" cy="332.6" r="3.1"/>
<circle cx="457.5" cy="332.6" r="3.1"/>
<circle cx="487.9" cy="314.7" r="3.1"/>
<circle cx="575.9" cy="332.6" r="3.1"/>
<circle cx="584.0" cy="332.6" r="3.1"/>
<circle cx="536.8" cy="370.5" r="3.1"/>
<circle cx="536.8" cy="377.3" r="3.1"/>
<circle cx="684.9" cy="211.9" r="3.1"/>
<circle cx="629.1" cy="245.5" r="3.1"/>
<circle cx="688.7" cy="248.3" r="3.1"/>
<circle cx="679.5" cy="347.1" r="3.1"/>
<circle cx="686.0" cy="347.1" r="3.1"/>
<circle cx="629.7" cy="370.3" r="3.1"/>
<circle cx="688.3" cy="373.2" r="3.1"/>
<circle cx="673.2" cy="435.0" r="3.1"/>
<circle cx="685.9" cy="435.0" r="3.1"/>
<circle cx="629.7" cy="469.4" r="3.1"/>
<circle cx="688.3" cy="471.0" r="3.1"/>
<circle cx="521.2" cy="486.9" r="3.1"/>
<circle cx="429.1" cy="401.8" r="3.1"/>
<circle cx="545.3" cy="406.2" r="3.1"/>
<circle cx="500.2" cy="444.5" r="3.1"/>
<circle cx="625.6" cy="443.8" r="3.1"/>
<circle cx="410.9" cy="377.2" r="3.1"/>
<circle cx="410.9" cy="476.1" r="3.1"/>
<circle cx="410.9" cy="480.6" r="3.1"/>
<circle cx="540.6" cy="487.5" r="3.1"/>
<circle cx="597.5" cy="508.8" r="3.1"/>
<circle cx="536.8" cy="386.7" r="3.1"/>
<circle cx="410.9" cy="386.8" r="3.1"/>
<circle cx="536.8" cy="475.8" r="3.1"/>
<circle cx="536.8" cy="480.4" r="3.1"/>
<circle cx="503.1" cy="469.4" r="3.1"/>
<circle cx="521.6" cy="444.6" r="3.1"/>
<circle cx="642.7" cy="446.3" r="3.1"/>
<circle cx="536.8" cy="474.4" r="3.1"/>
<circle cx="540.3" cy="487.6" r="3.1"/>
<circle cx="673.2" cy="533.2" r="3.1"/>
<circle cx="680.0" cy="533.2" r="3.1"/>
</g>
<g fill="#a8d0f7">
<circle cx="421.0" cy="314.3" r="2.2"/>
<circle cx="429.8" cy="314.3" r="2.2"/>
<circle cx="493.0" cy="314.7" r="2.0"/>
</g></svg>
</div>
</body></html>
